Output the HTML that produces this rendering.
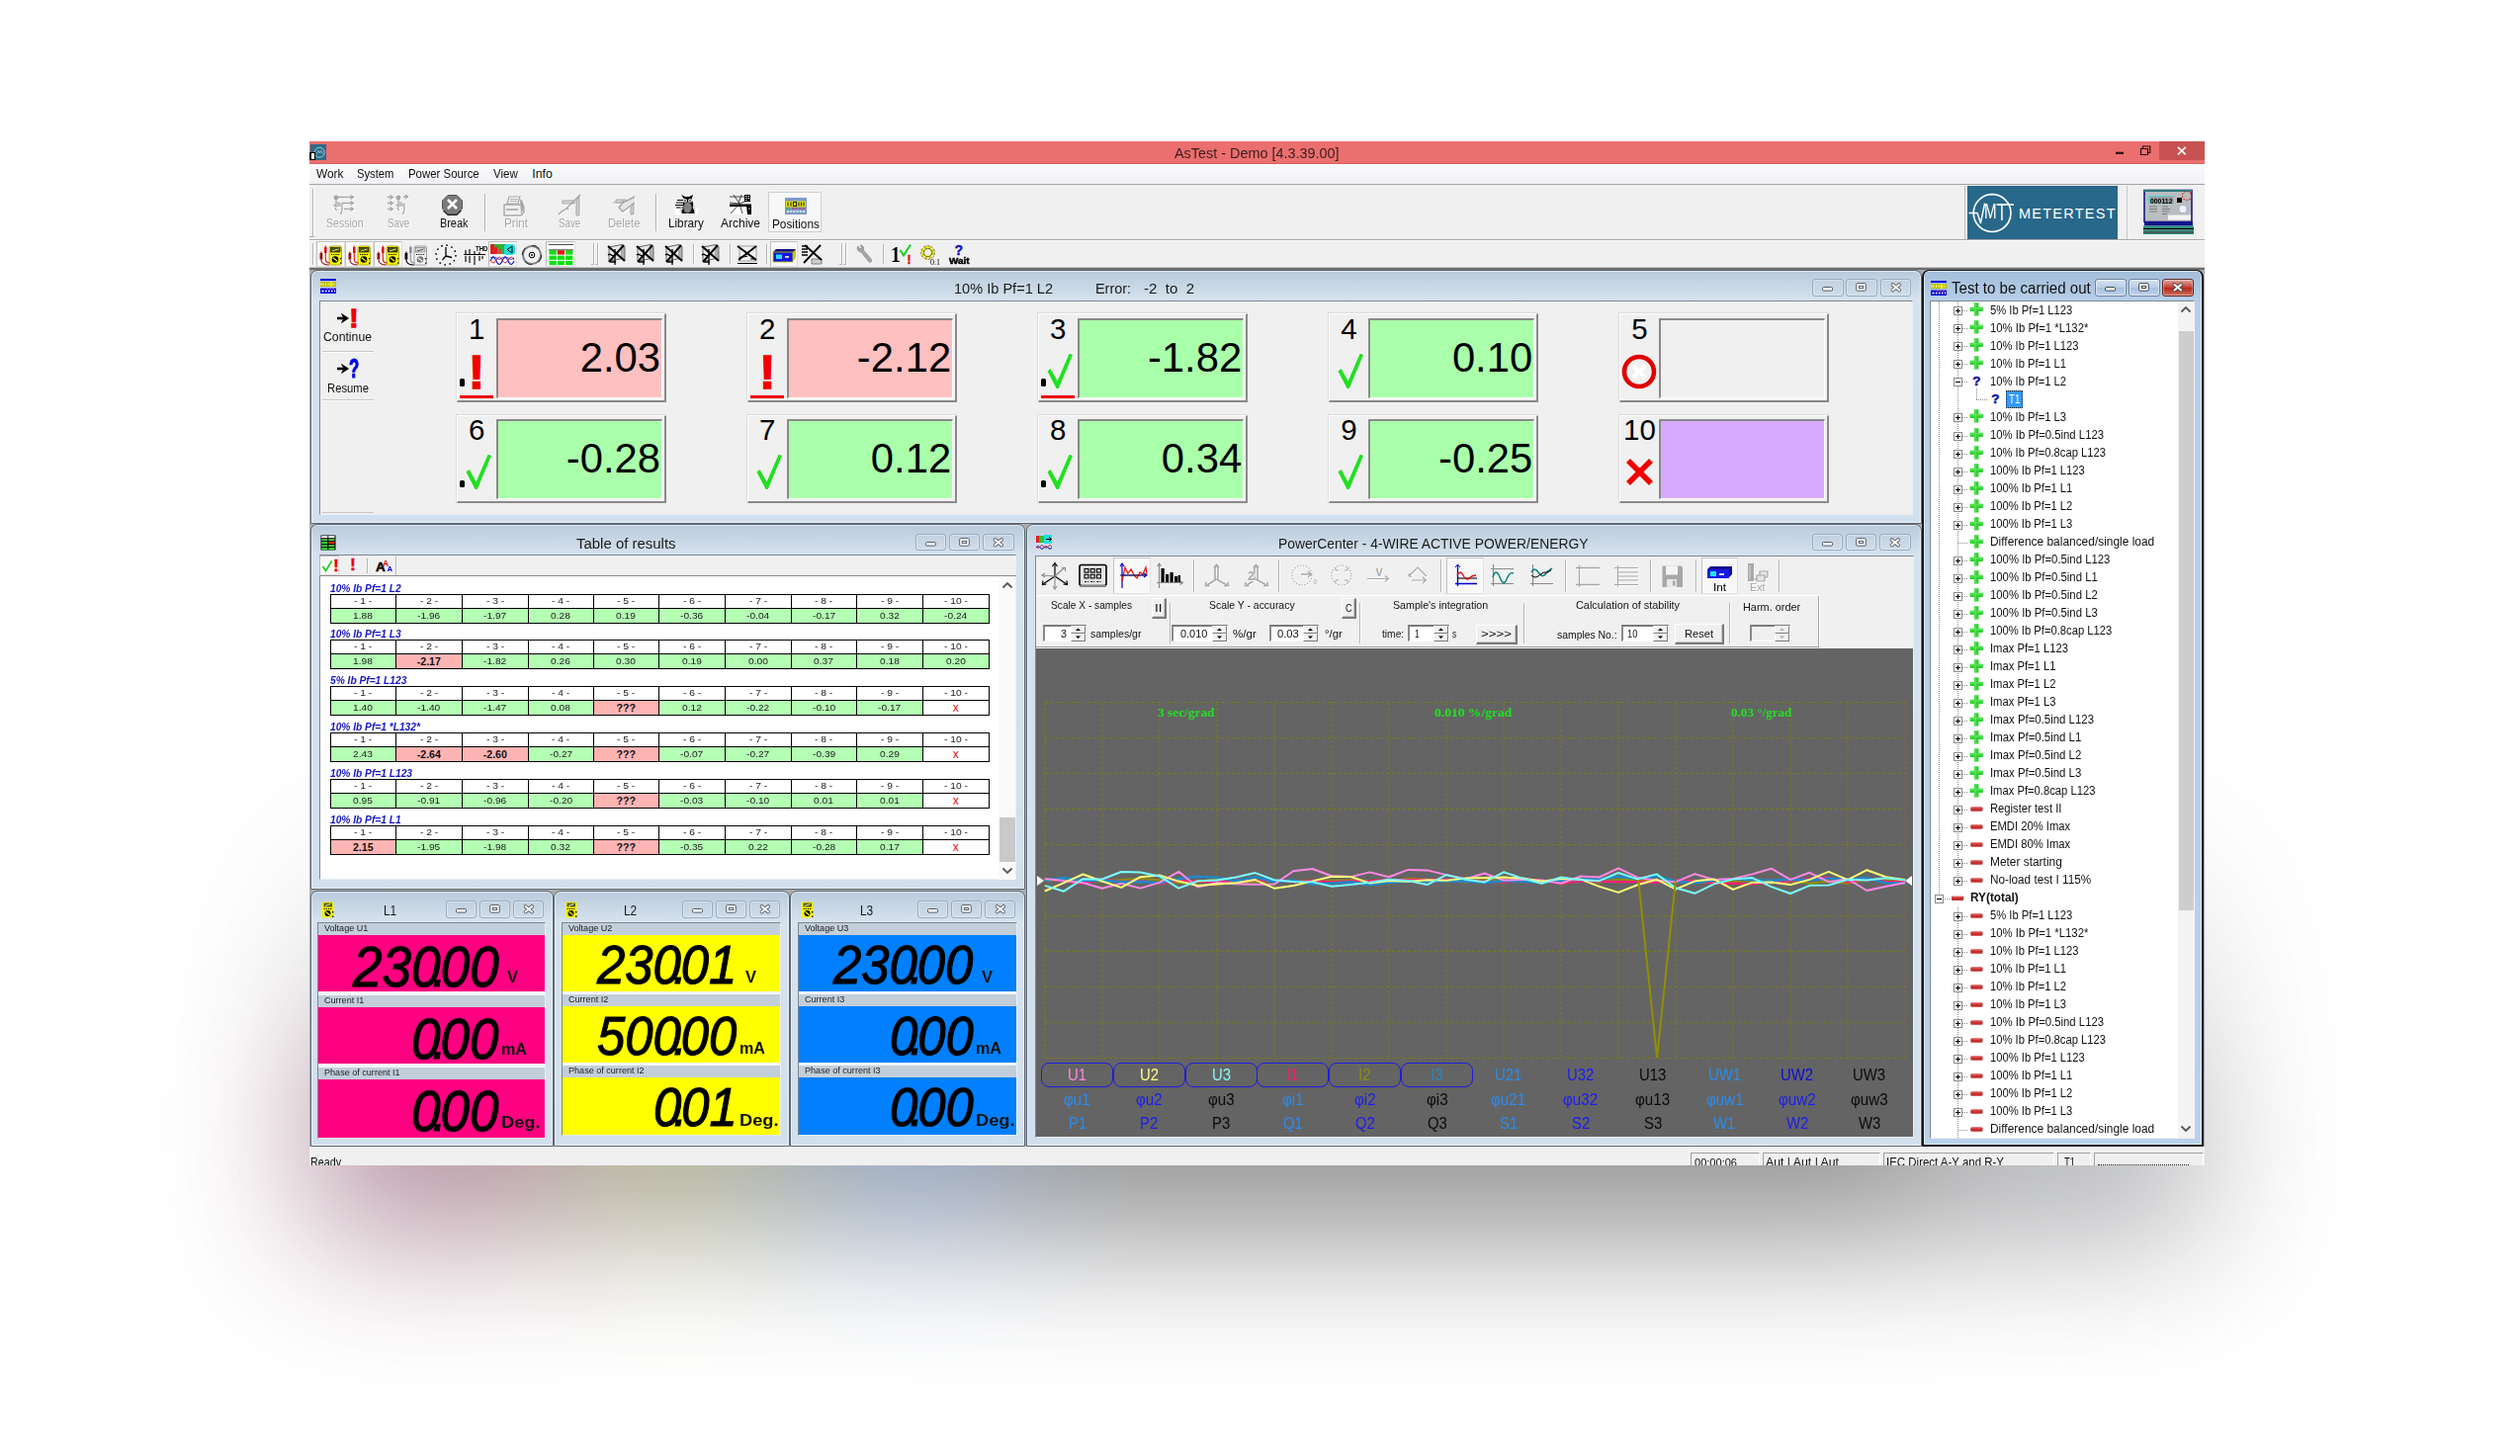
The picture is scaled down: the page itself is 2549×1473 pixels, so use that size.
<!DOCTYPE html><html><head><meta charset="utf-8"><title>AsTest - Demo</title><style>
html,body{margin:0;padding:0;background:#fff;}
body{width:2549px;height:1473px;overflow:hidden;position:relative;font-family:"Liberation Sans",sans-serif;}
.b{position:absolute;box-sizing:border-box;}
.t{position:absolute;white-space:pre;transform-origin:0 0;}
#app{position:absolute;left:0;top:0;width:2549px;height:1473px;clip-path:inset(143px 319px 294px 313px);}
svg{overflow:visible}
</style></head><body>
<div class="b" style="left:313px;top:219px;width:1917px;height:1035px;filter:blur(72px);opacity:.64;"><div class="b" style="left:0px;top:0px;width:1917px;height:1035px;background:linear-gradient(to bottom,rgba(140,142,146,0) 58%,rgba(140,142,146,.55) 78%,rgba(128,130,134,1) 94%)"></div><div class="b" style="left:0px;top:832px;width:247px;height:203px;background:#8e5c72"></div><div class="b" style="left:247px;top:832px;width:239px;height:203px;background:#86845e"></div><div class="b" style="left:486px;top:832px;width:238px;height:203px;background:#5a7296"></div><div class="b" style="left:724px;top:757px;width:906px;height:278px;background:#5a5a5a"></div></div>
<div id="app">
<div class="b" style="left:313.00px;top:143.00px;width:1917.00px;height:23.00px;background:#eb6f6f;"></div>
<div class="b" style="left:314.00px;top:146.00px;width:16.00px;height:15.70px;background:#2b6b88;"></div>
<svg class="b" style="left:315.50px;top:147.50px;" width="14" height="13" viewBox="0 0 14 13"><circle cx="7.2" cy="6.2" r="5" fill="none" stroke="#a9cbd8" stroke-width="1"/><path d="M4.300 7.500 L6 4.300 L7.400 7 L8.800 4.300 L10.200 7.500" fill="none" stroke="#a9cbd8" stroke-width="0.800"/></svg>
<div class="b" style="left:313.00px;top:154.20px;width:6.20px;height:8.00px;background:#000;"></div>
<div class="b" style="left:314.60px;top:155.40px;width:3.40px;height:5.60px;background:#fff;"></div>
<span class="t" style="left:1188.35px;top:148.33px;font-size:14.5px;line-height:14.5px;color:#3a1c1c;transform:scaleX(0.9932);">AsTest - Demo [4.3.39.00]</span>
<div class="b" style="left:313.00px;top:164.60px;width:1917.00px;height:1.20px;background:#d46464;"></div>
<div class="b" style="left:2184.00px;top:143.00px;width:45.50px;height:18.80px;background:#c85151;"></div>
<svg class="b" style="left:2135.00px;top:145.00px;" width="90" height="14" viewBox="0 0 90 14"><path d="M5 9.8 H13" stroke="#2a1010" stroke-width="2.2" fill="none"/><path d="M30.5 5.5 H37.500 V11.500 H30.500 Z M32.500 5.500 V3 H39.800 V9.500 H37.500" stroke="#2a1010" stroke-width="1.200" fill="none"/><path d="M68 3.800 L75.800 11.300 M75.800 3.800 L68 11.300" stroke="#fff" stroke-width="1.700" fill="none"/></svg>
<div class="b" style="left:313.00px;top:166.00px;width:1917.00px;height:21.00px;background:linear-gradient(#fbfbfd,#f1f1f5);"></div>
<div class="b" style="left:313.00px;top:186.00px;width:1917.00px;height:1.00px;background:#a2a2a2;"></div>
<span class="t" style="left:319.50px;top:169.79px;font-size:12.3px;line-height:12.3px;color:#111;transform:scaleX(0.9658);">Work</span>
<span class="t" style="left:361.20px;top:169.79px;font-size:12.3px;line-height:12.3px;color:#111;transform:scaleX(0.9144);">System</span>
<span class="t" style="left:413.30px;top:169.79px;font-size:12.3px;line-height:12.3px;color:#111;transform:scaleX(0.9281);">Power Source</span>
<span class="t" style="left:499.30px;top:169.79px;font-size:12.3px;line-height:12.3px;color:#111;transform:scaleX(0.9342);">View</span>
<span class="t" style="left:538.30px;top:169.79px;font-size:12.3px;line-height:12.3px;color:#111;">Info</span>
<div class="b" style="left:313.00px;top:187.00px;width:1917.00px;height:84.00px;background:#f0f0f0;"></div>
<div class="b" style="left:313.00px;top:241.50px;width:1917.00px;height:1.00px;background:#a8a8a8;"></div>
<div class="b" style="left:313.00px;top:242.50px;width:1917.00px;height:1.00px;background:#fdfdfd;"></div>
<div class="b" style="left:316.00px;top:191.00px;width:1.00px;height:48.00px;background:#b4b4b4;"></div>
<div class="b" style="left:317.00px;top:191.00px;width:1.00px;height:48.00px;background:#fff;"></div>
<div class="b" style="left:313.00px;top:239.00px;width:5.00px;height:1.00px;background:#b4b4b4;"></div>
<div class="b" style="left:316.00px;top:246.00px;width:1.00px;height:22.00px;background:#b4b4b4;"></div>
<div class="b" style="left:317.00px;top:246.00px;width:1.00px;height:22.00px;background:#fff;"></div>
<span class="t" style="left:329.60px;top:219.99px;font-size:12.3px;line-height:12.3px;color:#a9a9a9;transform:scaleX(0.8569);text-shadow:1px 1px 0 #fff;">Session</span>
<span class="t" style="left:391.90px;top:219.99px;font-size:12.3px;line-height:12.3px;color:#a9a9a9;transform:scaleX(0.7954);text-shadow:1px 1px 0 #fff;">Save</span>
<span class="t" style="left:444.50px;top:219.99px;font-size:12.3px;line-height:12.3px;color:#111;transform:scaleX(0.8838);">Break</span>
<span class="t" style="left:509.80px;top:219.99px;font-size:12.3px;line-height:12.3px;color:#a9a9a9;transform:scaleX(0.9489);text-shadow:1px 1px 0 #fff;">Print</span>
<span class="t" style="left:564.80px;top:219.99px;font-size:12.3px;line-height:12.3px;color:#a9a9a9;transform:scaleX(0.7954);text-shadow:1px 1px 0 #fff;">Save</span>
<span class="t" style="left:615.20px;top:219.99px;font-size:12.3px;line-height:12.3px;color:#a9a9a9;transform:scaleX(0.9112);text-shadow:1px 1px 0 #fff;">Delete</span>
<span class="t" style="left:676.20px;top:219.99px;font-size:12.3px;line-height:12.3px;color:#111;transform:scaleX(0.9522);">Library</span>
<span class="t" style="left:729.20px;top:219.99px;font-size:12.3px;line-height:12.3px;color:#111;transform:scaleX(0.9752);">Archive</span>
<div class="b" style="left:777.00px;top:193.50px;width:54.00px;height:41.50px;background:#f7f7f7;border:1px solid #d0d0d0;box-sizing:border-box;"></div>
<span class="t" style="left:781.00px;top:220.79px;font-size:12.3px;line-height:12.3px;color:#111;transform:scaleX(0.9597);">Positions</span>
<div class="b" style="left:489.50px;top:196.00px;width:1.00px;height:38.00px;background:#b0b0b0;"></div>
<div class="b" style="left:490.50px;top:196.00px;width:1.00px;height:38.00px;background:#fff;"></div>
<div class="b" style="left:662.50px;top:196.00px;width:1.00px;height:38.00px;background:#b0b0b0;"></div>
<div class="b" style="left:663.50px;top:196.00px;width:1.00px;height:38.00px;background:#fff;"></div>
<div class="b" style="left:313.00px;top:270.00px;width:1917.00px;height:891.00px;background:#ababab;"></div>
<div class="b" style="left:313.00px;top:270.00px;width:1917.00px;height:1.00px;background:#c4c4c4;"></div>
<div class="b" style="left:313.00px;top:271.00px;width:1917.00px;height:2.00px;background:#6c6c6c;"></div>
<div class="b" style="left:313.00px;top:1160.00px;width:1917.00px;height:19.50px;background:#f0f0f0;"></div>
<span class="t" style="left:314.00px;top:1169.89px;font-size:12.3px;line-height:12.3px;color:#111;transform:scaleX(0.8719);">Ready</span>
<div class="b" style="left:1710.00px;top:1166.00px;width:70.00px;height:14.00px;border:1px solid #a0a0a0;border-right-color:#fff;border-bottom:0;box-sizing:border-box;"></div>
<div class="b" style="left:1783.00px;top:1166.00px;width:119.00px;height:14.00px;border:1px solid #a0a0a0;border-right-color:#fff;border-bottom:0;box-sizing:border-box;"></div>
<div class="b" style="left:1905.00px;top:1166.00px;width:173.00px;height:14.00px;border:1px solid #a0a0a0;border-right-color:#fff;border-bottom:0;box-sizing:border-box;"></div>
<div class="b" style="left:2081.00px;top:1166.00px;width:34.00px;height:14.00px;border:1px solid #a0a0a0;border-right-color:#fff;border-bottom:0;box-sizing:border-box;"></div>
<div class="b" style="left:2118.00px;top:1166.00px;width:111.00px;height:14.00px;border:1px solid #a0a0a0;border-right-color:#fff;border-bottom:0;box-sizing:border-box;"></div>
<span class="t" style="left:1714.00px;top:1170.67px;font-size:11.5px;line-height:11.5px;color:#111;transform:scaleX(0.9606);">00:00:06</span>
<span class="t" style="left:1786.00px;top:1170.24px;font-size:12px;line-height:12px;color:#111;transform:scaleX(1.0238);">Aut | Aut | Aut</span>
<span class="t" style="left:1908.00px;top:1170.24px;font-size:12px;line-height:12px;color:#111;transform:scaleX(0.9559);">IEC Direct A-Y and R-Y</span>
<span class="t" style="left:2088.00px;top:1170.24px;font-size:12px;line-height:12px;color:#111;transform:scaleX(0.7855);">T1</span>
<div class="b" style="left:2122.00px;top:1177.60px;width:92.00px;height:1.00px;border-top:1px dotted #222;"></div>
<svg class="b" style="left:336.00px;top:196.80px;filter:drop-shadow(1px 1px 0 #fff);" width="24" height="22" viewBox="0 0 24 22"><g stroke="#a6a6a6" stroke-width="1.3" fill="none"><path d="M6 2.5h15M10 8.5h11M12 14.5h9"/><path d="M18.5 0.5l3 2l-3 2M18.5 6.5l3 2l-3 2M18.5 12.5l3 2l-3 2"/><circle cx="4" cy="3" r="1.8" fill="#a6a6a6"/><path d="M4 4v8l-2.5-2M6 7v5M8 8v4M10 9v4M10 13v3l-1.5 4M3 13l1.5 3"/></g></svg>
<svg class="b" style="left:391.00px;top:196.80px;filter:drop-shadow(1px 1px 0 #fff);" width="24" height="22" viewBox="0 0 24 22"><g stroke="#a6a6a6" stroke-width="1.3" fill="none"><path d="M1 2.5h4M1 8.5h4M1 14.5h4M17 2h4"/><path d="M3.5 0.5l3 2l-3 2M3.5 6.5l3 2l-3 2M3.5 12.5l3 2l-3 2M19 0l2.5 2l-2.5 2"/><circle cx="12" cy="3" r="1.8" fill="#a6a6a6"/><path d="M12 4v8l-2.5-2M14 7v5M16 8v4M18 9v4M18 13v3l-1.5 4M11 13l1.5 3"/></g></svg>
<svg class="b" style="left:447.30px;top:197.30px;" width="22" height="22" viewBox="0 0 22 22"><path d="M6 0.5h9l5.5 5.5v8l-5.5 5.5h-9l-5.5-5.5v-8z" fill="#7a7a7a" stroke="#555" stroke-width="1"/><path d="M1.5 16l4.5 4.5h9l4.5-4.5" fill="none" stroke="#222" stroke-width="1.2"/><path d="M6 5l9 9M15 5l-9 9" stroke="#fff" stroke-width="2.6"/></svg>
<svg class="b" style="left:509.00px;top:197.60px;filter:drop-shadow(1px 1px 0 #fff);" width="24" height="22" viewBox="0 0 24 22"><path d="M6 1h11l-2 7h-11z" fill="#f6f6f6" stroke="#a6a6a6" stroke-width="1.2"/><path d="M7 3.500h8M6.5 5.500h8" stroke="#a6a6a6" stroke-width="0.9"/><path d="M1 9h18l2 2v6l-3 3h-17z" fill="#f0f0f0" stroke="#a6a6a6" stroke-width="1.4"/><path d="M17 4c4 1 4 8 1 14" fill="#a6a6a6" stroke="#a6a6a6"/><path d="M3 14h12" stroke="#a6a6a6" stroke-width="1.6"/></svg>
<svg class="b" style="left:565.00px;top:196.80px;filter:drop-shadow(1px 1px 0 #fff);" width="24" height="22" viewBox="0 0 24 22"><path d="M4 6h12v3h-12z" fill="#d8d8d8" stroke="#a6a6a6" stroke-width="1"/><path d="M21 1v20h-3v-15z" fill="#cfcfcf" stroke="#a6a6a6" stroke-width="1"/><path d="M22 0L7 15l-4 2l-3 3M8 13l2 2" stroke="#a6a6a6" stroke-width="1.5" fill="none"/></svg>
<svg class="b" style="left:620.00px;top:198.00px;filter:drop-shadow(1px 1px 0 #fff);" width="24" height="20" viewBox="0 0 24 20"><path d="M3 4h10v3h-10z" fill="#d8d8d8" stroke="#a6a6a6" stroke-width="1"/><path d="M0 7h8l3-2M21 8v11h-3v-7z" fill="#cfcfcf" stroke="#a6a6a6" stroke-width="1"/><path d="M22 1L10 7l-4 5l4 4l12-9" stroke="#a6a6a6" stroke-width="1.4" fill="#e4e4e4"/></svg>
<svg class="b" style="left:683.00px;top:196.50px;" width="23" height="20" viewBox="0 0 23 20"><rect x="0" y="14" width="23" height="6" fill="#fff"/><path d="M1 8h7M0 10.500h8M1 13h7M2 5.500h6" stroke="#000" stroke-width="1.1"/><path d="M6 0l4 2h4l4-2l-1.5 5c2 3 2 6 1 8l2 3v3h-13v-3l2-3c-1-2-1-5 1-8z" fill="#000"/><ellipse cx="12.5" cy="13" rx="4.2" ry="5.5" fill="#808080"/><circle cx="10" cy="6" r="2.1" fill="#d8d8d8"/><circle cx="15" cy="6" r="2.1" fill="#d8d8d8"/><circle cx="10" cy="6" r="0.8" fill="#000"/><circle cx="15" cy="6" r="0.8" fill="#000"/><path d="M6.5 11l-1.5 6M18.5 11l1.5 6" stroke="#c8c8c8" stroke-width="1.2"/></svg>
<svg class="b" style="left:737.50px;top:197.00px;" width="23" height="20" viewBox="0 0 23 20"><rect x="0" y="11" width="17" height="9" fill="#fff"/><path d="M0 2h20M4 0l6 9M12 0l-3 9M0 8l10 1M10 9l-9 10M10 9l3 10M10 9l10-4" stroke="#333" stroke-width="0.9" fill="none"/><path d="M0 9.500h22v2.500h-22z" fill="#000"/><path d="M17 10h5v10h-4z" fill="#000"/><path d="M15 0h6v7h-6z" fill="#000"/><path d="M16 1.500h1.500M18.5 1.500h1.500M16 3.500h1.500M18.5 3.500h1.500M16 5.500h1.5" stroke="#fff" stroke-width="0.9"/><circle cx="20" cy="14" r="0.9" fill="#888"/></svg>
<svg class="b" style="left:794.00px;top:200.00px;" width="22" height="17" viewBox="0 0 22 17"><rect x="0" y="0" width="22" height="17" fill="#7d9ac8"/><rect x="1" y="3.5" width="20" height="6" fill="#e6e600"/><path d="M3 4.5v4M6 4.5v4M8.5 4.5h3v4h-3zM14 4.5v4M16.5 4.5v4M19 4.5v4" stroke="#222" stroke-width="1.1" fill="none"/><rect x="1" y="10" width="4" height="1.5" fill="#30c030"/><path d="M7 10.800h13" stroke="#c03060" stroke-width="1.2" stroke-dasharray="2.5 1"/><path d="M2 14h18" stroke="#d8e4f4" stroke-width="1.8" stroke-dasharray="2 1.2"/></svg>
<div class="b" style="left:320.00px;top:244.00px;width:29.00px;height:25.50px;background:#f9f9f9;border:1px solid #dedede;border-top-color:#bdbdbd;border-left-color:#bdbdbd;"></div>
<div class="b" style="left:349.00px;top:244.00px;width:29.00px;height:25.50px;background:#f9f9f9;border:1px solid #dedede;border-top-color:#bdbdbd;border-left-color:#bdbdbd;"></div>
<div class="b" style="left:378.00px;top:244.00px;width:29.00px;height:25.50px;background:#f9f9f9;border:1px solid #dedede;border-top-color:#bdbdbd;border-left-color:#bdbdbd;"></div>
<div class="b" style="left:493.50px;top:244.00px;width:29.50px;height:25.50px;background:#f9f9f9;border:1px solid #dedede;border-top-color:#bdbdbd;border-left-color:#bdbdbd;"></div>
<div class="b" style="left:552.00px;top:244.00px;width:30.00px;height:25.50px;background:#f9f9f9;border:1px solid #dedede;border-top-color:#bdbdbd;border-left-color:#bdbdbd;"></div>
<svg class="b" style="left:321.50px;top:247.50px;" width="26" height="21" viewBox="0 0 26 21"><rect x="11" y="1" width="12.5" height="19" rx="1.5" fill="#f4f400" stroke="#a0a000" stroke-width="0.8"/><rect x="12.5" y="2.5" width="9.5" height="4.5" fill="#505018" stroke="#000" stroke-width="0.6"/><path d="M14 6l6.5-2" stroke="#e8e8a0" stroke-width="0.9"/><path d="M13 9.500h9" stroke="#000" stroke-width="1.2" stroke-dasharray="1.2 1"/><circle cx="17" cy="14.5" r="3.3" fill="#000"/><path d="M14.8 12.800l4.4 3.4" stroke="#f4f400" stroke-width="1.3"/><rect x="22" y="13" width="1.3" height="1.3" fill="#000"/><rect x="22" y="17.5" width="1.3" height="1.3" fill="#000"/><rect x="6" y="2" width="2.6" height="6" fill="#e01010"/><rect x="6.8" y="0.5" width="1" height="2" fill="#e01010"/><rect x="1.5" y="8" width="2.8" height="6.5" fill="#8c1010"/><rect x="2.4" y="6.5" width="1" height="2" fill="#8c1010"/><path d="M7.3 8v6c0 3 2 4 4.5 4" fill="none" stroke="#e01010" stroke-width="1.1"/><path d="M2.9 14.500c0 4 3 5.5 8 5.5" fill="none" stroke="#8c1010" stroke-width="1.1"/></svg>
<svg class="b" style="left:350.50px;top:247.50px;" width="26" height="21" viewBox="0 0 26 21"><rect x="11" y="1" width="12.5" height="19" rx="1.5" fill="#f4f400" stroke="#a0a000" stroke-width="0.8"/><rect x="12.5" y="2.5" width="9.5" height="4.5" fill="#505018" stroke="#000" stroke-width="0.6"/><path d="M14 6l6.5-2" stroke="#e8e8a0" stroke-width="0.9"/><path d="M13 9.500h9" stroke="#000" stroke-width="1.2" stroke-dasharray="1.2 1"/><circle cx="17" cy="14.5" r="3.3" fill="#000"/><path d="M14.8 12.800l4.4 3.4" stroke="#f4f400" stroke-width="1.3"/><rect x="22" y="13" width="1.3" height="1.3" fill="#000"/><rect x="22" y="17.5" width="1.3" height="1.3" fill="#000"/><rect x="6" y="2" width="2.6" height="6" fill="#e01010"/><rect x="6.8" y="0.5" width="1" height="2" fill="#e01010"/><rect x="1.5" y="8" width="2.8" height="6.5" fill="#8c1010"/><rect x="2.4" y="6.5" width="1" height="2" fill="#8c1010"/><path d="M7.3 8v6c0 3 2 4 4.5 4" fill="none" stroke="#e01010" stroke-width="1.1"/><path d="M2.9 14.500c0 4 3 5.5 8 5.5" fill="none" stroke="#8c1010" stroke-width="1.1"/></svg>
<svg class="b" style="left:379.50px;top:247.50px;" width="26" height="21" viewBox="0 0 26 21"><rect x="11" y="1" width="12.5" height="19" rx="1.5" fill="#f4f400" stroke="#a0a000" stroke-width="0.8"/><rect x="12.5" y="2.5" width="9.5" height="4.5" fill="#505018" stroke="#000" stroke-width="0.6"/><path d="M14 6l6.5-2" stroke="#e8e8a0" stroke-width="0.9"/><path d="M13 9.500h9" stroke="#000" stroke-width="1.2" stroke-dasharray="1.2 1"/><circle cx="17" cy="14.5" r="3.3" fill="#000"/><path d="M14.8 12.800l4.4 3.4" stroke="#f4f400" stroke-width="1.3"/><rect x="22" y="13" width="1.3" height="1.3" fill="#000"/><rect x="22" y="17.5" width="1.3" height="1.3" fill="#000"/><rect x="6" y="2" width="2.6" height="6" fill="#e01010"/><rect x="6.8" y="0.5" width="1" height="2" fill="#e01010"/><rect x="1.5" y="8" width="2.8" height="6.5" fill="#8c1010"/><rect x="2.4" y="6.5" width="1" height="2" fill="#8c1010"/><path d="M7.3 8v6c0 3 2 4 4.5 4" fill="none" stroke="#e01010" stroke-width="1.1"/><path d="M2.9 14.500c0 4 3 5.5 8 5.5" fill="none" stroke="#8c1010" stroke-width="1.1"/></svg>
<svg class="b" style="left:408.00px;top:247.50px;" width="26" height="21" viewBox="0 0 26 21"><rect x="11" y="1" width="12.5" height="19" rx="1.5" fill="#f4f4f4" stroke="#888" stroke-width="0.8"/><rect x="12.5" y="2.5" width="9.5" height="4.5" fill="#d8d8d8" stroke="#666" stroke-width="0.6"/><path d="M14 6l6.5-2" stroke="#444" stroke-width="0.9"/><path d="M13 9.500h9" stroke="#000" stroke-width="1.2" stroke-dasharray="1.2 1"/><circle cx="17" cy="14.5" r="3.3" fill="#777"/><path d="M14.8 12.800l4.4 3.4" stroke="#f4f4f4" stroke-width="1.3"/><rect x="22" y="13" width="1.3" height="1.3" fill="#000"/><rect x="22" y="17.5" width="1.3" height="1.3" fill="#000"/><rect x="6" y="2" width="2.6" height="6" fill="#909090"/><rect x="6.8" y="0.5" width="1" height="2" fill="#909090"/><rect x="1.5" y="8" width="2.8" height="6.5" fill="#000"/><rect x="2.4" y="6.5" width="1" height="2" fill="#000"/><path d="M7.3 8v6c0 3 2 4 4.5 4" fill="none" stroke="#909090" stroke-width="1.1"/><path d="M2.9 14.500c0 4 3 5.5 8 5.5" fill="none" stroke="#000" stroke-width="1.1"/></svg>
<svg class="b" style="left:439.00px;top:246.00px;" width="24" height="24" viewBox="0 0 24 24"><circle cx="12" cy="12" r="10" fill="none" stroke="#000" stroke-width="1.5" stroke-dasharray="1.6 3.640"/><path d="M12 4v9l-3.5 4M12 13l6 1.5" stroke="#000" stroke-width="1.3" fill="none"/></svg>
<svg class="b" style="left:468.00px;top:247.80px;" width="26" height="21" viewBox="0 0 26 21"><path d="M1 9.500h22M3 5v4M7 4v5M12 6v3M17 7v2M3 11v6M7 11v7M12 11v9M17 11v5M20 11v3" stroke="#000" stroke-width="1.1" fill="none"/></svg>
<span class="t" style="left:480.50px;top:248.45px;font-size:7.5px;line-height:7.5px;color:#000;font-weight:bold;transform:scaleX(0.8109);">THD</span>
<svg class="b" style="left:496.00px;top:247.30px;" width="26" height="22" viewBox="0 0 26 22"><rect x="0" y="0" width="17" height="10" fill="#30b030"/><rect x="0" y="0" width="4" height="10" fill="#e02020"/><rect x="4" y="3" width="3" height="7" fill="#e02020"/><rect x="8" y="5" width="3" height="5" fill="#e04040"/><rect x="14" y="0" width="11" height="11" rx="3" fill="#20e0e0"/><path d="M22 2l-5 3.500l5 3.500z" fill="none" stroke="#000" stroke-width="1"/><path d="M0 17q3-7 6 0t6 0t6 0t6 0" stroke="#1010c0" stroke-width="1.1" fill="none"/><path d="M0 16q3 6 6 0t6 0t6 0t6 0" stroke="#e01010" stroke-width="0.9" fill="none"/><path d="M0 14q3-3 6 0t6 0t6 0t6 0" stroke="#1010c0" stroke-width="0.8" fill="none"/></svg>
<svg class="b" style="left:527.00px;top:247.00px;" width="22" height="22" viewBox="0 0 22 22"><circle cx="11" cy="11" r="9" fill="none" stroke="#808080" stroke-width="2"/><circle cx="11" cy="11" r="9.8" fill="none" stroke="#000" stroke-width="0.8" stroke-dasharray="8 7.4"/><circle cx="11" cy="11" r="2.8" fill="none" stroke="#000" stroke-width="1"/><circle cx="11" cy="11" r="0.9" fill="#000"/></svg>
<svg class="b" style="left:555.00px;top:246.80px;" width="25" height="22" viewBox="0 0 25 22"><rect x="0" y="0" width="25" height="22" fill="#fff"/><rect x="0.5" y="1.0" width="7.3" height="4.3" fill="#fff"/><rect x="8.8" y="1.0" width="7.3" height="4.3" fill="#fff"/><rect x="17.1" y="1.0" width="7.3" height="4.3" fill="#fff"/><rect x="0.5" y="6.3" width="7.3" height="4.3" fill="#10e010"/><rect x="8.8" y="6.3" width="7.3" height="4.3" fill="#f01010"/><rect x="17.1" y="6.3" width="7.3" height="4.3" fill="#10e010"/><rect x="0.5" y="11.6" width="7.3" height="4.3" fill="#10e010"/><rect x="8.8" y="11.6" width="7.3" height="4.3" fill="#10e010"/><rect x="17.1" y="11.6" width="7.3" height="4.3" fill="#10e010"/><rect x="0.5" y="16.9" width="7.3" height="4.3" fill="#10e010"/><rect x="8.8" y="16.9" width="7.3" height="4.3" fill="#10e010"/><rect x="17.1" y="16.9" width="7.3" height="4.3" fill="#10e010"/><path d="M0 0.500h25M0 5.800h25" stroke="#000" stroke-width="0.7"/></svg>
<div class="b" style="left:600.00px;top:246.00px;width:1.00px;height:22.00px;background:#b4b4b4;"></div>
<div class="b" style="left:601.00px;top:246.00px;width:1.00px;height:22.00px;background:#fff;"></div>
<div class="b" style="left:598.00px;top:267.00px;width:3.00px;height:1.00px;background:#b4b4b4;"></div>
<div class="b" style="left:603.50px;top:246.00px;width:1.00px;height:22.00px;background:#b4b4b4;"></div>
<div class="b" style="left:604.50px;top:246.00px;width:1.00px;height:22.00px;background:#fff;"></div>
<div class="b" style="left:601.50px;top:267.00px;width:3.00px;height:1.00px;background:#b4b4b4;"></div>
<svg class="b" style="left:613.00px;top:245.50px;" width="22" height="23" viewBox="0 0 22 23"><path d="M3 4l13-2.500v14l-13 3z" fill="#e8e8e8" stroke="#555" stroke-width="0.9"/><path d="M16 1.500l3 2v14l-3-2" fill="#b0b0b0" stroke="#555" stroke-width="0.8"/><path d="M2 3l17 15M18 2l-15 17" stroke="#000" stroke-width="2"/><path d="M9 6v16M2 12c3-3 4 3 7 0M4 19h6" stroke="#000" stroke-width="1.3" fill="none"/></svg>
<svg class="b" style="left:642.00px;top:245.50px;" width="22" height="23" viewBox="0 0 22 23"><path d="M3 4l13-2.500v14l-13 3z" fill="#e8e8e8" stroke="#555" stroke-width="0.9"/><path d="M16 1.500l3 2v14l-3-2" fill="#b0b0b0" stroke="#555" stroke-width="0.8"/><path d="M2 3l17 15M18 2l-15 17" stroke="#000" stroke-width="2"/><path d="M9 6v16M2 12c3-3 4 3 7 0M4 19h6" stroke="#000" stroke-width="1.3" fill="none"/></svg>
<svg class="b" style="left:671.00px;top:245.50px;" width="22" height="23" viewBox="0 0 22 23"><path d="M3 4l13-2.500v14l-13 3z" fill="#e8e8e8" stroke="#555" stroke-width="0.9"/><path d="M16 1.500l3 2v14l-3-2" fill="#b0b0b0" stroke="#555" stroke-width="0.8"/><path d="M2 3l17 15M18 2l-15 17" stroke="#000" stroke-width="2"/><path d="M9 6v16M2 12c3-3 4 3 7 0M4 19h6" stroke="#000" stroke-width="1.3" fill="none"/></svg>
<div class="b" style="left:700.50px;top:247.00px;width:1.00px;height:20.00px;background:#b4b4b4;"></div>
<div class="b" style="left:701.50px;top:247.00px;width:1.00px;height:20.00px;background:#fff;"></div>
<svg class="b" style="left:708.00px;top:245.50px;" width="22" height="23" viewBox="0 0 22 23"><path d="M3 4l13-2.500v14l-13 3z" fill="#e8e8e8" stroke="#555" stroke-width="0.9"/><path d="M16 1.500l3 2v14l-3-2" fill="#b0b0b0" stroke="#555" stroke-width="0.8"/><path d="M2 3l17 15M18 2l-15 17" stroke="#000" stroke-width="2"/><path d="M9 6v16M2 12c3-3 4 3 7 0M4 19h6" stroke="#000" stroke-width="1.3" fill="none"/></svg>
<div class="b" style="left:737.50px;top:247.00px;width:1.00px;height:20.00px;background:#b4b4b4;"></div>
<div class="b" style="left:738.50px;top:247.00px;width:1.00px;height:20.00px;background:#fff;"></div>
<svg class="b" style="left:745.00px;top:247.00px;" width="23" height="21" viewBox="0 0 23 21"><rect x="3" y="2" width="17" height="15" fill="#f4f4f4" stroke="#888" stroke-width="0.8"/><path d="M1 2l19 14M20 2l-18 14" stroke="#000" stroke-width="1.9"/><path d="M1 19.500h20M3 14c3-3 5 0 8-2M14 15l4 0l-2-2" stroke="#000" stroke-width="1.1" fill="none"/></svg>
<div class="b" style="left:775.00px;top:247.00px;width:1.00px;height:20.00px;background:#b4b4b4;"></div>
<div class="b" style="left:776.00px;top:247.00px;width:1.00px;height:20.00px;background:#fff;"></div>
<div class="b" style="left:779.00px;top:244.00px;width:28.00px;height:25.50px;background:#f9f9f9;border:1px solid #dedede;border-top-color:#bdbdbd;border-left-color:#bdbdbd;"></div>
<svg class="b" style="left:781.00px;top:251.00px;" width="25" height="15" viewBox="0 0 25 15"><path d="M1 4l3-3h20v9l-3 3z" fill="#c8c800"/><path d="M1 4l3-3h20l-3 3z" fill="#101080"/><rect x="1" y="4" width="20" height="10" fill="#1414e0" stroke="#c8c800" stroke-width="0.8"/><rect x="4" y="6.5" width="6" height="4.5" fill="#20e0f8"/><rect x="13" y="8" width="4" height="1.8" fill="#e0e0ff"/></svg>
<svg class="b" style="left:810.00px;top:246.00px;" width="24" height="22" viewBox="0 0 24 22"><path d="M1 3h6M1 6h6M1 9h6M1 12h6" stroke="#000" stroke-width="1.6"/><path d="M11 16h10v5h-10z" fill="#d0d0d0" stroke="#666" stroke-width="0.8"/><path d="M4 2l17 15M20 2l-17 18" stroke="#000" stroke-width="1.9"/></svg>
<div class="b" style="left:851.00px;top:246.00px;width:1.00px;height:22.00px;background:#b4b4b4;"></div>
<div class="b" style="left:852.00px;top:246.00px;width:1.00px;height:22.00px;background:#fff;"></div>
<div class="b" style="left:849.00px;top:267.00px;width:3.00px;height:1.00px;background:#b4b4b4;"></div>
<div class="b" style="left:854.50px;top:246.00px;width:1.00px;height:22.00px;background:#b4b4b4;"></div>
<div class="b" style="left:855.50px;top:246.00px;width:1.00px;height:22.00px;background:#fff;"></div>
<div class="b" style="left:852.50px;top:267.00px;width:3.00px;height:1.00px;background:#b4b4b4;"></div>
<svg class="b" style="left:866.00px;top:248.00px;filter:drop-shadow(1px 1px 0 #fff);" width="17" height="19" viewBox="0 0 17 19"><path d="M2 1c-2 3 0 6 3 6l8 10c1.5 1 3.5-.5 2.5-2.500l-8-9.500c1-3-1-5-3-5l1 3l-2 1z" fill="#a6a6a6" stroke="#8a8a8a" stroke-width="0.8"/></svg>
<div class="b" style="left:893.00px;top:247.00px;width:1.00px;height:20.00px;background:#b4b4b4;"></div>
<div class="b" style="left:894.00px;top:247.00px;width:1.00px;height:20.00px;background:#fff;"></div>
<span class="t" style="left:901.00px;top:245.74px;font-size:23px;line-height:23px;color:#000;font-family:'Liberation Serif',serif;font-weight:bold;transform:scaleX(0.8500);">1</span>
<svg class="b" style="left:910.00px;top:247.00px;" width="12" height="14" viewBox="0 0 12 14"><path d="M0.5 6l3.5 5.500L11 0.5" fill="none" stroke="#18d018" stroke-width="2"/></svg>
<span class="t" style="left:917.50px;top:257.34px;font-size:12px;line-height:12px;color:#e01010;font-weight:bold;-webkit-text-stroke:0.500px #e01010;">!</span>
<svg class="b" style="left:930.00px;top:246.50px;" width="17" height="17" viewBox="0 0 17 17"><circle cx="8.5" cy="8.5" r="5" fill="none" stroke="#d8d800" stroke-width="3.6" stroke-dasharray="2.6 1.330"/><circle cx="8.5" cy="8.5" r="4.2" fill="none" stroke="#707000" stroke-width="1"/><circle cx="8.5" cy="8.5" r="6.9" fill="none" stroke="#505000" stroke-width="0.7" stroke-dasharray="2.6 1.330"/></svg>
<span class="t" style="left:940.50px;top:261.72px;font-size:7.5px;line-height:7.5px;color:#000;font-family:'Liberation Serif',serif;transform:scaleX(1.0667);">0.1</span>
<span class="t" style="left:965.50px;top:246.15px;font-size:14px;line-height:14px;color:#1010c8;font-weight:bold;-webkit-text-stroke:0.400px #1010c8;">?</span>
<span class="t" style="left:959.50px;top:260.38px;font-size:9px;line-height:9px;color:#000;font-weight:bold;transform:scaleX(1.0984);-webkit-text-stroke:0.500px #000;">Wait</span>
<div class="b" style="left:1990.00px;top:188.00px;width:152.00px;height:54.00px;background:#28688a;"></div>
<svg class="b" style="left:1990.00px;top:188.00px;" width="152" height="54" viewBox="0 0 152 54"><circle cx="25.1" cy="27.6" r="18.9" fill="none" stroke="#fff" stroke-width="1.7"/><path d="M1.5 27.6h8.5l3.4 10l4.2-20" fill="none" stroke="#fff" stroke-width="1.5" stroke-linejoin="round"/><path d="M29.5 19h17.5" stroke="#fff" stroke-width="1.5"/></svg>
<span class="t" style="left:2007.20px;top:202.52px;font-size:22.3px;line-height:22.3px;color:#fff;transform:scaleX(0.6783);">M</span>
<span class="t" style="left:2019.60px;top:203.93px;font-size:23px;line-height:23px;color:#fff;transform:scaleX(0.6975);">T</span>
<span class="t" style="left:2042.00px;top:208.63px;font-size:14.5px;line-height:14.5px;color:#fff;letter-spacing:1.25px;">METERTEST</span>
<div class="b" style="left:1987.00px;top:188.00px;width:1.00px;height:54.00px;background:#c0c0c0;"></div>
<div class="b" style="left:2151.00px;top:188.00px;width:1.00px;height:54.00px;background:#c8c8c8;"></div>
<svg class="b" style="left:2167.50px;top:192.00px;" width="51" height="45" viewBox="0 0 51 45"><rect x="1" y="0.5" width="48" height="32" fill="#b9bdc1" stroke="#1a1a80" stroke-width="1.6"/><rect x="1" y="0" width="48" height="2" fill="#2c7c7c"/><rect x="5" y="6" width="26" height="8" fill="#5cd0d0"/><rect x="7" y="7" width="23" height="6.5" fill="#9a9a9a"/><rect x="34" y="8" width="5" height="5" fill="#000"/><circle cx="44" cy="6" r="4.5" fill="none" stroke="#e02020" stroke-width="1.2" stroke-dasharray="1.5 1.5"/><path d="M6 17h8M6 19.500h8M6 22h8M19 17h6M19 19.500h8M19 22h7M19 24.500h5" stroke="#7c7c7c" stroke-width="1"/><circle cx="40" cy="19.5" r="4" fill="#f0f0ff" stroke="#88a" stroke-width="0.8" stroke-dasharray="1.5 1"/><rect x="25" y="25.5" width="23" height="5" fill="#f4f4f4"/><rect x="1" y="32" width="49" height="4.5" fill="#14148c"/><rect x="0" y="36.5" width="51" height="2.5" fill="#2c8c7c"/><rect x="0" y="39" width="51" height="1.2" fill="#000"/><rect x="0" y="40.2" width="51" height="2.3" fill="#2c8c7c"/><rect x="0" y="42.5" width="51" height="1.2" fill="#000"/><rect x="0" y="43.7" width="51" height="1.3" fill="#2c8c7c"/></svg>
<span class="t" style="left:2175.00px;top:199.80px;font-size:7.8px;line-height:7.8px;color:#000;font-weight:bold;transform:scaleX(0.8790);">000112</span>
<div class="b" style="left:313.50px;top:272.80px;width:1630.00px;height:257.50px;background:linear-gradient(#b9cbdc 0px,#d6e2ee 30px,#d2dfec 100%);border:1px solid #5b6773;border-radius:7px 7px 1px 1px;box-shadow:inset 0 0 0 1px rgba(255,255,255,.55);"></div>
<div class="b" style="left:322.50px;top:303.50px;width:1612.00px;height:217.50px;background:#f0f0f0;border:1px solid #7d8790;border-right-color:#e8eef5;border-bottom-color:#e8eef5;"></div>
<div class="b" style="left:1833.30px;top:282.20px;width:31.50px;height:17.50px;background:linear-gradient(#c3d1e0,#cfdce9);border:1px solid #98acc2;border-radius:3px;box-shadow:inset 0 0 0 1px rgba(255,255,255,.35);"></div>
<div class="b" style="left:1867.40px;top:282.20px;width:31.50px;height:17.50px;background:linear-gradient(#c3d1e0,#cfdce9);border:1px solid #98acc2;border-radius:3px;box-shadow:inset 0 0 0 1px rgba(255,255,255,.35);"></div>
<div class="b" style="left:1901.50px;top:282.20px;width:31.50px;height:17.50px;background:linear-gradient(#c3d1e0,#cfdce9);border:1px solid #98acc2;border-radius:3px;box-shadow:inset 0 0 0 1px rgba(255,255,255,.35);"></div>
<svg class="b" style="left:1833.30px;top:282.20px;" width="31.5" height="17.5" viewBox="0 0 31.5 17.5"><rect x="10.5" y="8.5" width="10" height="3.6" rx="1" fill="#fff" stroke="#555d66" stroke-width="1"/></svg>
<svg class="b" style="left:1867.40px;top:282.20px;" width="31.5" height="17.5" viewBox="0 0 31.5 17.5"><rect x="10.7" y="4.6" width="9.6" height="7.6" rx="1" fill="#fff" stroke="#555d66" stroke-width="1"/><rect x="13.3" y="7.4" width="4.4" height="2.2" fill="#e4ecf4" stroke="#555d66" stroke-width="1"/></svg>
<svg class="b" style="left:1901.50px;top:282.20px;" width="31.5" height="17.5" viewBox="0 0 31.5 17.5"><path d="M12.5 6 L19.1 11.6 M19.1 6 L12.5 11.6" stroke="#555d66" stroke-width="3.7" stroke-linecap="round" fill="none"/><path d="M12.5 6 L19.1 11.6 M19.1 6 L12.5 11.6" stroke="#fff" stroke-width="2" stroke-linecap="round" fill="none"/></svg>
<svg class="b" style="left:324.00px;top:281.50px;" width="17" height="16" viewBox="0 0 17 16"><rect x="0" y="0" width="16" height="2" fill="#0000e0"/><rect x="0" y="3" width="16" height="5" fill="#b8b800"/><path d="M1 4v3M3 4v3M5.5 4v3M8 4v3M10 4h2v3h-2zM14 4v3" stroke="#ffff60" stroke-width="1" fill="none"/><rect x="0" y="9.5" width="16" height="5.5" fill="#1010d8"/><path d="M1.5 12.5h2M5 12.5h1.5M8 12.5h1.5M11 12.5h1.5M14 12.5h1" stroke="#fff" stroke-width="1.6"/><path d="M6 10.6h8" stroke="#c040c0" stroke-width="0.8" stroke-dasharray="2 1"/></svg>
<span class="t" style="left:965.00px;top:284.93px;font-size:14.5px;line-height:14.5px;color:#1a1a1a;transform:scaleX(1.0044);">10% Ib Pf=1 L2</span>
<span class="t" style="left:1108.00px;top:284.93px;font-size:14.5px;line-height:14.5px;color:#1a1a1a;transform:scaleX(0.9930);">Error:</span>
<span class="t" style="left:1157.00px;top:284.93px;font-size:14.5px;line-height:14.5px;color:#1a1a1a;transform:scaleX(1.0373);">-2  to  2</span>
<div class="b" style="left:323.50px;top:304.50px;width:56.00px;height:210.00px;background:#f0f0f0;"></div>
<div class="b" style="left:326.00px;top:354.50px;width:52.00px;height:1.00px;background:#c8c8c8;"></div>
<div class="b" style="left:326.00px;top:355.50px;width:52.00px;height:1.00px;background:#fff;"></div>
<div class="b" style="left:326.00px;top:404.00px;width:52.00px;height:1.00px;background:#c8c8c8;"></div>
<div class="b" style="left:326.00px;top:405.00px;width:52.00px;height:1.00px;background:#fff;"></div>
<div class="b" style="left:326.00px;top:517.50px;width:52.00px;height:1.00px;background:#c8c8c8;"></div>
<svg class="b" style="left:340.50px;top:316.50px;" width="12" height="10" viewBox="0 0 12 10"><path d="M0 5h7" stroke="#000" stroke-width="2.6"/><path d="M4.5 0.5 L11.5 5 L4.5 9.5 L7 5 Z" fill="#000" stroke="#000" stroke-width="0.8"/></svg>
<span class="t" style="left:353.40px;top:308.77px;font-size:26.5px;line-height:26.5px;color:#f00000;font-weight:bold;-webkit-text-stroke:1.4px #f00000;">!</span>
<span class="t" style="left:327.20px;top:334.89px;font-size:12.3px;line-height:12.3px;color:#111;transform:scaleX(0.9952);">Continue</span>
<svg class="b" style="left:340.50px;top:368.00px;" width="12" height="10" viewBox="0 0 12 10"><path d="M0 5h7" stroke="#000" stroke-width="2.6"/><path d="M4.5 0.5 L11.5 5 L4.5 9.5 L7 5 Z" fill="#000" stroke="#000" stroke-width="0.8"/></svg>
<span class="t" style="left:353.00px;top:360.14px;font-size:27px;line-height:27px;color:#0000e0;font-weight:bold;transform:scaleX(0.6200);-webkit-text-stroke:1.1px #0000e0;">?</span>
<span class="t" style="left:330.70px;top:386.59px;font-size:12.3px;line-height:12.3px;color:#111;transform:scaleX(0.9170);">Resume</span>
<div class="b" style="left:461.70px;top:317.20px;width:212.00px;height:89.50px;background:#f0f0f0;border:1px solid #fff;border-right:2px solid #8a8a8a;border-bottom:2px solid #8a8a8a;box-shadow:-1px -1px 0 #dcdcdc;"></div>
<div class="b" style="left:501.70px;top:321.70px;width:168.00px;height:81.00px;background:#ffc0c0;border:2px solid #8a8a8a;border-right:1px solid #fff;border-bottom:1px solid #fff;"></div>
<span class="t" style="left:474.00px;top:317.83px;font-size:29.5px;line-height:29.5px;color:#000;">1</span>
<span class="t" style="left:586.74px;top:340.72px;font-size:41.8px;line-height:41.8px;color:#000;">2.03</span>
<span class="t" style="left:474.11px;top:352.77px;font-size:48px;line-height:48px;color:#f00000;font-weight:bold;-webkit-text-stroke:1.6px #f00000;">!</span>
<div class="b" style="left:465.20px;top:383.20px;width:4.50px;height:7.50px;background:#000;border-radius:1.5px;"></div>
<div class="b" style="left:465.20px;top:399.50px;width:34.00px;height:3.40px;background:#f00000;"></div>
<div class="b" style="left:755.75px;top:317.20px;width:212.00px;height:89.50px;background:#f0f0f0;border:1px solid #fff;border-right:2px solid #8a8a8a;border-bottom:2px solid #8a8a8a;box-shadow:-1px -1px 0 #dcdcdc;"></div>
<div class="b" style="left:795.75px;top:321.70px;width:168.00px;height:81.00px;background:#ffc0c0;border:2px solid #8a8a8a;border-right:1px solid #fff;border-bottom:1px solid #fff;"></div>
<span class="t" style="left:768.05px;top:317.83px;font-size:29.5px;line-height:29.5px;color:#000;">2</span>
<span class="t" style="left:866.87px;top:340.72px;font-size:41.8px;line-height:41.8px;color:#000;">-2.12</span>
<span class="t" style="left:768.16px;top:352.77px;font-size:48px;line-height:48px;color:#f00000;font-weight:bold;-webkit-text-stroke:1.6px #f00000;">!</span>
<div class="b" style="left:759.25px;top:399.50px;width:34.00px;height:3.40px;background:#f00000;"></div>
<div class="b" style="left:1049.80px;top:317.20px;width:212.00px;height:89.50px;background:#f0f0f0;border:1px solid #fff;border-right:2px solid #8a8a8a;border-bottom:2px solid #8a8a8a;box-shadow:-1px -1px 0 #dcdcdc;"></div>
<div class="b" style="left:1089.80px;top:321.70px;width:168.00px;height:81.00px;background:#aaffaa;border:2px solid #8a8a8a;border-right:1px solid #fff;border-bottom:1px solid #fff;"></div>
<span class="t" style="left:1062.10px;top:317.83px;font-size:29.5px;line-height:29.5px;color:#000;">3</span>
<span class="t" style="left:1160.92px;top:340.72px;font-size:41.8px;line-height:41.8px;color:#000;">-1.82</span>
<svg class="b" style="left:1058.80px;top:357.00px;" width="27" height="37" viewBox="0 0 27 37"><path d="M0.5 18.5 L3.6 16 L10.6 28.5 L22.6 0.8 L26 2 L11.8 36 L9.6 36 Z" fill="#20e020"/></svg>
<div class="b" style="left:1053.30px;top:383.20px;width:4.50px;height:7.50px;background:#000;border-radius:1.5px;"></div>
<div class="b" style="left:1053.30px;top:399.50px;width:34.00px;height:3.40px;background:#f00000;"></div>
<div class="b" style="left:1343.85px;top:317.20px;width:212.00px;height:89.50px;background:#f0f0f0;border:1px solid #fff;border-right:2px solid #8a8a8a;border-bottom:2px solid #8a8a8a;box-shadow:-1px -1px 0 #dcdcdc;"></div>
<div class="b" style="left:1383.85px;top:321.70px;width:168.00px;height:81.00px;background:#aaffaa;border:2px solid #8a8a8a;border-right:1px solid #fff;border-bottom:1px solid #fff;"></div>
<span class="t" style="left:1356.15px;top:317.83px;font-size:29.5px;line-height:29.5px;color:#000;">4</span>
<span class="t" style="left:1468.89px;top:340.72px;font-size:41.8px;line-height:41.8px;color:#000;">0.10</span>
<svg class="b" style="left:1352.85px;top:357.00px;" width="27" height="37" viewBox="0 0 27 37"><path d="M0.5 18.5 L3.6 16 L10.6 28.5 L22.6 0.8 L26 2 L11.8 36 L9.6 36 Z" fill="#20e020"/></svg>
<div class="b" style="left:1637.90px;top:317.20px;width:212.00px;height:89.50px;background:#f0f0f0;border:1px solid #fff;border-right:2px solid #8a8a8a;border-bottom:2px solid #8a8a8a;box-shadow:-1px -1px 0 #dcdcdc;"></div>
<div class="b" style="left:1677.90px;top:321.70px;width:168.00px;height:81.00px;background:#f0f0f0;border:2px solid #8a8a8a;border-right:1px solid #fff;border-bottom:1px solid #fff;"></div>
<span class="t" style="left:1650.20px;top:317.83px;font-size:29.5px;line-height:29.5px;color:#000;">5</span>
<svg class="b" style="left:1640.40px;top:357.70px;" width="36" height="36" viewBox="0 0 36 36"><circle cx="18" cy="18" r="15" fill="none" stroke="#e00000" stroke-width="4.6"/><path d="M12 12l12 12M24 12l-12 12" stroke="#fff" stroke-width="4.4"/></svg>
<div class="b" style="left:461.70px;top:419.50px;width:212.00px;height:89.50px;background:#f0f0f0;border:1px solid #fff;border-right:2px solid #8a8a8a;border-bottom:2px solid #8a8a8a;box-shadow:-1px -1px 0 #dcdcdc;"></div>
<div class="b" style="left:501.70px;top:424.00px;width:168.00px;height:81.00px;background:#aaffaa;border:2px solid #8a8a8a;border-right:1px solid #fff;border-bottom:1px solid #fff;"></div>
<span class="t" style="left:474.00px;top:420.13px;font-size:29.5px;line-height:29.5px;color:#000;">6</span>
<span class="t" style="left:572.82px;top:443.02px;font-size:41.8px;line-height:41.8px;color:#000;">-0.28</span>
<svg class="b" style="left:470.70px;top:459.30px;" width="27" height="37" viewBox="0 0 27 37"><path d="M0.5 18.5 L3.6 16 L10.6 28.5 L22.6 0.8 L26 2 L11.8 36 L9.6 36 Z" fill="#20e020"/></svg>
<div class="b" style="left:465.20px;top:485.50px;width:4.50px;height:7.50px;background:#000;border-radius:1.5px;"></div>
<div class="b" style="left:755.75px;top:419.50px;width:212.00px;height:89.50px;background:#f0f0f0;border:1px solid #fff;border-right:2px solid #8a8a8a;border-bottom:2px solid #8a8a8a;box-shadow:-1px -1px 0 #dcdcdc;"></div>
<div class="b" style="left:795.75px;top:424.00px;width:168.00px;height:81.00px;background:#aaffaa;border:2px solid #8a8a8a;border-right:1px solid #fff;border-bottom:1px solid #fff;"></div>
<span class="t" style="left:768.05px;top:420.13px;font-size:29.5px;line-height:29.5px;color:#000;">7</span>
<span class="t" style="left:880.79px;top:443.02px;font-size:41.8px;line-height:41.8px;color:#000;">0.12</span>
<svg class="b" style="left:764.75px;top:459.30px;" width="27" height="37" viewBox="0 0 27 37"><path d="M0.5 18.5 L3.6 16 L10.6 28.5 L22.6 0.8 L26 2 L11.8 36 L9.6 36 Z" fill="#20e020"/></svg>
<div class="b" style="left:1049.80px;top:419.50px;width:212.00px;height:89.50px;background:#f0f0f0;border:1px solid #fff;border-right:2px solid #8a8a8a;border-bottom:2px solid #8a8a8a;box-shadow:-1px -1px 0 #dcdcdc;"></div>
<div class="b" style="left:1089.80px;top:424.00px;width:168.00px;height:81.00px;background:#aaffaa;border:2px solid #8a8a8a;border-right:1px solid #fff;border-bottom:1px solid #fff;"></div>
<span class="t" style="left:1062.10px;top:420.13px;font-size:29.5px;line-height:29.5px;color:#000;">8</span>
<span class="t" style="left:1174.84px;top:443.02px;font-size:41.8px;line-height:41.8px;color:#000;">0.34</span>
<svg class="b" style="left:1058.80px;top:459.30px;" width="27" height="37" viewBox="0 0 27 37"><path d="M0.5 18.5 L3.6 16 L10.6 28.5 L22.6 0.8 L26 2 L11.8 36 L9.6 36 Z" fill="#20e020"/></svg>
<div class="b" style="left:1053.30px;top:485.50px;width:4.50px;height:7.50px;background:#000;border-radius:1.5px;"></div>
<div class="b" style="left:1343.85px;top:419.50px;width:212.00px;height:89.50px;background:#f0f0f0;border:1px solid #fff;border-right:2px solid #8a8a8a;border-bottom:2px solid #8a8a8a;box-shadow:-1px -1px 0 #dcdcdc;"></div>
<div class="b" style="left:1383.85px;top:424.00px;width:168.00px;height:81.00px;background:#aaffaa;border:2px solid #8a8a8a;border-right:1px solid #fff;border-bottom:1px solid #fff;"></div>
<span class="t" style="left:1356.15px;top:420.13px;font-size:29.5px;line-height:29.5px;color:#000;">9</span>
<span class="t" style="left:1454.97px;top:443.02px;font-size:41.8px;line-height:41.8px;color:#000;">-0.25</span>
<svg class="b" style="left:1352.85px;top:459.30px;" width="27" height="37" viewBox="0 0 27 37"><path d="M0.5 18.5 L3.6 16 L10.6 28.5 L22.6 0.8 L26 2 L11.8 36 L9.6 36 Z" fill="#20e020"/></svg>
<div class="b" style="left:1637.90px;top:419.50px;width:212.00px;height:89.50px;background:#f0f0f0;border:1px solid #fff;border-right:2px solid #8a8a8a;border-bottom:2px solid #8a8a8a;box-shadow:-1px -1px 0 #dcdcdc;"></div>
<div class="b" style="left:1677.90px;top:424.00px;width:168.00px;height:81.00px;background:#d8aaff;border:2px solid #8a8a8a;border-right:1px solid #fff;border-bottom:1px solid #fff;"></div>
<span class="t" style="left:1641.99px;top:420.13px;font-size:29.5px;line-height:29.5px;color:#000;">10</span>
<svg class="b" style="left:1644.70px;top:463.80px;" width="27" height="27" viewBox="0 0 27 27"><path d="M2 2l23 23M25 2l-23 23" stroke="#f00000" stroke-width="5.6"/></svg>
<div class="b" style="left:313.50px;top:530.00px;width:723.50px;height:370.30px;background:linear-gradient(#b9cbdc 0px,#d6e2ee 30px,#d2dfec 100%);border:1px solid #5b6773;border-radius:7px 7px 1px 1px;box-shadow:inset 0 0 0 1px rgba(255,255,255,.55);"></div>
<div class="b" style="left:322.50px;top:561.00px;width:705.00px;height:329.00px;background:#fff;border:1px solid #7d8790;border-right-color:#e8eef5;border-bottom-color:#e8eef5;"></div>
<div class="b" style="left:925.80px;top:539.60px;width:31.50px;height:17.50px;background:linear-gradient(#c3d1e0,#cfdce9);border:1px solid #98acc2;border-radius:3px;box-shadow:inset 0 0 0 1px rgba(255,255,255,.35);"></div>
<div class="b" style="left:959.90px;top:539.60px;width:31.50px;height:17.50px;background:linear-gradient(#c3d1e0,#cfdce9);border:1px solid #98acc2;border-radius:3px;box-shadow:inset 0 0 0 1px rgba(255,255,255,.35);"></div>
<div class="b" style="left:994.00px;top:539.60px;width:31.50px;height:17.50px;background:linear-gradient(#c3d1e0,#cfdce9);border:1px solid #98acc2;border-radius:3px;box-shadow:inset 0 0 0 1px rgba(255,255,255,.35);"></div>
<svg class="b" style="left:925.80px;top:539.60px;" width="31.5" height="17.5" viewBox="0 0 31.5 17.5"><rect x="10.5" y="8.5" width="10" height="3.6" rx="1" fill="#fff" stroke="#555d66" stroke-width="1"/></svg>
<svg class="b" style="left:959.90px;top:539.60px;" width="31.5" height="17.5" viewBox="0 0 31.5 17.5"><rect x="10.7" y="4.6" width="9.6" height="7.6" rx="1" fill="#fff" stroke="#555d66" stroke-width="1"/><rect x="13.3" y="7.4" width="4.4" height="2.2" fill="#e4ecf4" stroke="#555d66" stroke-width="1"/></svg>
<svg class="b" style="left:994.00px;top:539.60px;" width="31.5" height="17.5" viewBox="0 0 31.5 17.5"><path d="M12.5 6 L19.1 11.6 M19.1 6 L12.5 11.6" stroke="#555d66" stroke-width="3.7" stroke-linecap="round" fill="none"/><path d="M12.5 6 L19.1 11.6 M19.1 6 L12.5 11.6" stroke="#fff" stroke-width="2" stroke-linecap="round" fill="none"/></svg>
<svg class="b" style="left:324.00px;top:541.00px;" width="16" height="16" viewBox="0 0 16 16"><rect x="0.5" y="0.5" width="15" height="15" fill="#000"/><rect x="1.2" y="1.2" width="6.2" height="2" fill="#fff"/><rect x="8.299999999999999" y="1.2" width="6.2" height="2" fill="#fff"/><rect x="1.2" y="4.2" width="6.2" height="2" fill="#50c050"/><rect x="8.299999999999999" y="4.2" width="6.2" height="2" fill="#50c050"/><rect x="1.2" y="7.2" width="6.2" height="2" fill="#30e030"/><rect x="8.299999999999999" y="7.2" width="6.2" height="2" fill="#e03000"/><rect x="1.2" y="10.2" width="6.2" height="2" fill="#50c050"/><rect x="8.299999999999999" y="10.2" width="6.2" height="2" fill="#50c050"/><rect x="1.2" y="13.2" width="6.2" height="2" fill="#30e030"/><rect x="8.299999999999999" y="13.2" width="6.2" height="2" fill="#30e030"/></svg>
<span class="t" style="left:583.30px;top:542.05px;font-size:15.3px;line-height:15.3px;color:#1a1a1a;transform:scaleX(0.9776);">Table of results</span>
<div class="b" style="left:323.50px;top:562.00px;width:703.00px;height:20.50px;background:#f0f0f0;"></div>
<div class="b" style="left:323.50px;top:582.00px;width:704.00px;height:1.00px;background:#8c8c8c;"></div>
<div class="b" style="left:323.00px;top:562.00px;width:20.00px;height:20.00px;background:#f8f8f8;border:1px solid #dcdcdc;border-left-color:#b8b8b8;border-top-color:#b8b8b8;"></div>
<svg class="b" style="left:326.00px;top:565.00px;" width="18" height="16" viewBox="0 0 18 16"><path d="M0.5 8 L3.5 12.5 L9.5 2.5" fill="none" stroke="#18d018" stroke-width="1.6"/></svg>
<span class="t" style="left:337.14px;top:564.76px;font-size:16px;line-height:16px;color:#e00000;font-weight:bold;-webkit-text-stroke:0.6px #e00000;">!</span>
<span class="t" style="left:354.34px;top:563.96px;font-size:16px;line-height:16px;color:#e00000;font-weight:bold;-webkit-text-stroke:0.6px #e00000;">!</span>
<div class="b" style="left:371.00px;top:565.00px;width:1.00px;height:15.00px;background:#b4b4b4;"></div>
<div class="b" style="left:372.00px;top:565.00px;width:1.00px;height:15.00px;background:#fff;"></div>
<span class="t" style="left:380.00px;top:566.57px;font-size:13.5px;line-height:13.5px;color:#000;font-weight:bold;-webkit-text-stroke:0.5px #000;">A</span>
<span class="t" style="left:387.00px;top:566.30px;font-size:8.5px;line-height:8.5px;color:#e00000;font-weight:bold;">A</span>
<span class="t" style="left:391.50px;top:571.65px;font-size:7.5px;line-height:7.5px;color:#0000d0;font-weight:bold;">A</span>
<div class="b" style="left:400.00px;top:562.50px;width:1.00px;height:19.00px;background:#b4b4b4;"></div>
<div class="b" style="left:401.00px;top:562.50px;width:1.00px;height:19.00px;background:#fff;"></div>
<div class="b" style="left:1010.00px;top:583.00px;width:17.00px;height:306.50px;background:#fafafa;"></div>
<div class="b" style="left:1010.50px;top:827.30px;width:16.00px;height:44.50px;background:#c9c9c9;"></div>
<svg class="b" style="left:1013.00px;top:588.00px;" width="12" height="8" viewBox="0 0 12 8"><path d="M1.5 6.5 L6 2 L10.5 6.5" fill="none" stroke="#555" stroke-width="1.8"/></svg>
<svg class="b" style="left:1013.00px;top:877.00px;" width="12" height="8" viewBox="0 0 12 8"><path d="M1.5 1.5 L6 6 L10.5 1.5" fill="none" stroke="#555" stroke-width="1.8"/></svg>
<span class="t" style="left:334.20px;top:589.73px;font-size:10.6px;line-height:10.6px;color:#1616c4;font-weight:bold;font-style:italic;transform:scaleX(0.9620);">10% Ib Pf=1 L2</span>
<div class="b" style="left:334.00px;top:601.00px;width:667.00px;height:30.00px;background:#000;"></div>
<div class="b" style="left:335.00px;top:602.00px;width:65.00px;height:13.00px;background:#fff;"></div>
<div class="b" style="left:335.00px;top:616.00px;width:65.00px;height:14.00px;background:#b4ffb4;"></div>
<span class="t" style="left:358.14px;top:602.99px;font-size:9.7px;line-height:9.7px;color:#1c1c1c;transform:scaleX(1.0619);">- 1 -</span>
<span class="t" style="left:357.37px;top:618.19px;font-size:9.7px;line-height:9.7px;color:#1c1c1c;transform:scaleX(1.0515);">1.88</span>
<div class="b" style="left:401.00px;top:602.00px;width:66.00px;height:13.00px;background:#fff;"></div>
<div class="b" style="left:401.00px;top:616.00px;width:66.00px;height:14.00px;background:#b4ffb4;"></div>
<span class="t" style="left:424.64px;top:602.99px;font-size:9.7px;line-height:9.7px;color:#1c1c1c;transform:scaleX(1.0619);">- 2 -</span>
<span class="t" style="left:422.18px;top:618.19px;font-size:9.7px;line-height:9.7px;color:#1c1c1c;transform:scaleX(1.0515);">-1.96</span>
<div class="b" style="left:468.00px;top:602.00px;width:66.00px;height:13.00px;background:#fff;"></div>
<div class="b" style="left:468.00px;top:616.00px;width:66.00px;height:14.00px;background:#b4ffb4;"></div>
<span class="t" style="left:491.64px;top:602.99px;font-size:9.7px;line-height:9.7px;color:#1c1c1c;transform:scaleX(1.0619);">- 3 -</span>
<span class="t" style="left:489.18px;top:618.19px;font-size:9.7px;line-height:9.7px;color:#1c1c1c;transform:scaleX(1.0515);">-1.97</span>
<div class="b" style="left:535.00px;top:602.00px;width:65.00px;height:13.00px;background:#fff;"></div>
<div class="b" style="left:535.00px;top:616.00px;width:65.00px;height:14.00px;background:#b4ffb4;"></div>
<span class="t" style="left:558.14px;top:602.99px;font-size:9.7px;line-height:9.7px;color:#1c1c1c;transform:scaleX(1.0619);">- 4 -</span>
<span class="t" style="left:557.37px;top:618.19px;font-size:9.7px;line-height:9.7px;color:#1c1c1c;transform:scaleX(1.0515);">0.28</span>
<div class="b" style="left:601.00px;top:602.00px;width:65.00px;height:13.00px;background:#fff;"></div>
<div class="b" style="left:601.00px;top:616.00px;width:65.00px;height:14.00px;background:#b4ffb4;"></div>
<span class="t" style="left:624.14px;top:602.99px;font-size:9.7px;line-height:9.7px;color:#1c1c1c;transform:scaleX(1.0619);">- 5 -</span>
<span class="t" style="left:623.37px;top:618.19px;font-size:9.7px;line-height:9.7px;color:#1c1c1c;transform:scaleX(1.0515);">0.19</span>
<div class="b" style="left:667.00px;top:602.00px;width:66.00px;height:13.00px;background:#fff;"></div>
<div class="b" style="left:667.00px;top:616.00px;width:66.00px;height:14.00px;background:#b4ffb4;"></div>
<span class="t" style="left:690.64px;top:602.99px;font-size:9.7px;line-height:9.7px;color:#1c1c1c;transform:scaleX(1.0619);">- 6 -</span>
<span class="t" style="left:688.18px;top:618.19px;font-size:9.7px;line-height:9.7px;color:#1c1c1c;transform:scaleX(1.0515);">-0.36</span>
<div class="b" style="left:734.00px;top:602.00px;width:66.00px;height:13.00px;background:#fff;"></div>
<div class="b" style="left:734.00px;top:616.00px;width:66.00px;height:14.00px;background:#b4ffb4;"></div>
<span class="t" style="left:757.64px;top:602.99px;font-size:9.7px;line-height:9.7px;color:#1c1c1c;transform:scaleX(1.0619);">- 7 -</span>
<span class="t" style="left:755.18px;top:618.19px;font-size:9.7px;line-height:9.7px;color:#1c1c1c;transform:scaleX(1.0515);">-0.04</span>
<div class="b" style="left:801.00px;top:602.00px;width:65.00px;height:13.00px;background:#fff;"></div>
<div class="b" style="left:801.00px;top:616.00px;width:65.00px;height:14.00px;background:#b4ffb4;"></div>
<span class="t" style="left:824.14px;top:602.99px;font-size:9.7px;line-height:9.7px;color:#1c1c1c;transform:scaleX(1.0619);">- 8 -</span>
<span class="t" style="left:821.68px;top:618.19px;font-size:9.7px;line-height:9.7px;color:#1c1c1c;transform:scaleX(1.0515);">-0.17</span>
<div class="b" style="left:867.00px;top:602.00px;width:66.00px;height:13.00px;background:#fff;"></div>
<div class="b" style="left:867.00px;top:616.00px;width:66.00px;height:14.00px;background:#b4ffb4;"></div>
<span class="t" style="left:890.64px;top:602.99px;font-size:9.7px;line-height:9.7px;color:#1c1c1c;transform:scaleX(1.0619);">- 9 -</span>
<span class="t" style="left:889.87px;top:618.19px;font-size:9.7px;line-height:9.7px;color:#1c1c1c;transform:scaleX(1.0515);">0.32</span>
<div class="b" style="left:934.00px;top:602.00px;width:66.00px;height:13.00px;background:#fff;"></div>
<div class="b" style="left:934.00px;top:616.00px;width:66.00px;height:14.00px;background:#b4ffb4;"></div>
<span class="t" style="left:954.78px;top:602.99px;font-size:9.7px;line-height:9.7px;color:#1c1c1c;transform:scaleX(1.0619);">- 10 -</span>
<span class="t" style="left:955.18px;top:618.19px;font-size:9.7px;line-height:9.7px;color:#1c1c1c;transform:scaleX(1.0515);">-0.24</span>
<span class="t" style="left:334.20px;top:635.73px;font-size:10.6px;line-height:10.6px;color:#1616c4;font-weight:bold;font-style:italic;transform:scaleX(0.9620);">10% Ib Pf=1 L3</span>
<div class="b" style="left:334.00px;top:647.00px;width:667.00px;height:30.00px;background:#000;"></div>
<div class="b" style="left:335.00px;top:648.00px;width:65.00px;height:13.00px;background:#fff;"></div>
<div class="b" style="left:335.00px;top:662.00px;width:65.00px;height:14.00px;background:#b4ffb4;"></div>
<span class="t" style="left:358.14px;top:648.99px;font-size:9.7px;line-height:9.7px;color:#1c1c1c;transform:scaleX(1.0619);">- 1 -</span>
<span class="t" style="left:357.37px;top:664.19px;font-size:9.7px;line-height:9.7px;color:#1c1c1c;transform:scaleX(1.0515);">1.98</span>
<div class="b" style="left:401.00px;top:648.00px;width:66.00px;height:13.00px;background:#fff;"></div>
<div class="b" style="left:401.00px;top:662.00px;width:66.00px;height:14.00px;background:#ffb4b4;"></div>
<span class="t" style="left:424.64px;top:648.99px;font-size:9.7px;line-height:9.7px;color:#1c1c1c;transform:scaleX(1.0619);">- 2 -</span>
<span class="t" style="left:421.72px;top:663.83px;font-size:10.6px;line-height:10.6px;color:#111;font-weight:bold;">-2.17</span>
<div class="b" style="left:468.00px;top:648.00px;width:66.00px;height:13.00px;background:#fff;"></div>
<div class="b" style="left:468.00px;top:662.00px;width:66.00px;height:14.00px;background:#b4ffb4;"></div>
<span class="t" style="left:491.64px;top:648.99px;font-size:9.7px;line-height:9.7px;color:#1c1c1c;transform:scaleX(1.0619);">- 3 -</span>
<span class="t" style="left:489.18px;top:664.19px;font-size:9.7px;line-height:9.7px;color:#1c1c1c;transform:scaleX(1.0515);">-1.82</span>
<div class="b" style="left:535.00px;top:648.00px;width:65.00px;height:13.00px;background:#fff;"></div>
<div class="b" style="left:535.00px;top:662.00px;width:65.00px;height:14.00px;background:#b4ffb4;"></div>
<span class="t" style="left:558.14px;top:648.99px;font-size:9.7px;line-height:9.7px;color:#1c1c1c;transform:scaleX(1.0619);">- 4 -</span>
<span class="t" style="left:557.37px;top:664.19px;font-size:9.7px;line-height:9.7px;color:#1c1c1c;transform:scaleX(1.0515);">0.26</span>
<div class="b" style="left:601.00px;top:648.00px;width:65.00px;height:13.00px;background:#fff;"></div>
<div class="b" style="left:601.00px;top:662.00px;width:65.00px;height:14.00px;background:#b4ffb4;"></div>
<span class="t" style="left:624.14px;top:648.99px;font-size:9.7px;line-height:9.7px;color:#1c1c1c;transform:scaleX(1.0619);">- 5 -</span>
<span class="t" style="left:623.37px;top:664.19px;font-size:9.7px;line-height:9.7px;color:#1c1c1c;transform:scaleX(1.0515);">0.30</span>
<div class="b" style="left:667.00px;top:648.00px;width:66.00px;height:13.00px;background:#fff;"></div>
<div class="b" style="left:667.00px;top:662.00px;width:66.00px;height:14.00px;background:#b4ffb4;"></div>
<span class="t" style="left:690.64px;top:648.99px;font-size:9.7px;line-height:9.7px;color:#1c1c1c;transform:scaleX(1.0619);">- 6 -</span>
<span class="t" style="left:689.87px;top:664.19px;font-size:9.7px;line-height:9.7px;color:#1c1c1c;transform:scaleX(1.0515);">0.19</span>
<div class="b" style="left:734.00px;top:648.00px;width:66.00px;height:13.00px;background:#fff;"></div>
<div class="b" style="left:734.00px;top:662.00px;width:66.00px;height:14.00px;background:#b4ffb4;"></div>
<span class="t" style="left:757.64px;top:648.99px;font-size:9.7px;line-height:9.7px;color:#1c1c1c;transform:scaleX(1.0619);">- 7 -</span>
<span class="t" style="left:756.87px;top:664.19px;font-size:9.7px;line-height:9.7px;color:#1c1c1c;transform:scaleX(1.0515);">0.00</span>
<div class="b" style="left:801.00px;top:648.00px;width:65.00px;height:13.00px;background:#fff;"></div>
<div class="b" style="left:801.00px;top:662.00px;width:65.00px;height:14.00px;background:#b4ffb4;"></div>
<span class="t" style="left:824.14px;top:648.99px;font-size:9.7px;line-height:9.7px;color:#1c1c1c;transform:scaleX(1.0619);">- 8 -</span>
<span class="t" style="left:823.37px;top:664.19px;font-size:9.7px;line-height:9.7px;color:#1c1c1c;transform:scaleX(1.0515);">0.37</span>
<div class="b" style="left:867.00px;top:648.00px;width:66.00px;height:13.00px;background:#fff;"></div>
<div class="b" style="left:867.00px;top:662.00px;width:66.00px;height:14.00px;background:#b4ffb4;"></div>
<span class="t" style="left:890.64px;top:648.99px;font-size:9.7px;line-height:9.7px;color:#1c1c1c;transform:scaleX(1.0619);">- 9 -</span>
<span class="t" style="left:889.87px;top:664.19px;font-size:9.7px;line-height:9.7px;color:#1c1c1c;transform:scaleX(1.0515);">0.18</span>
<div class="b" style="left:934.00px;top:648.00px;width:66.00px;height:13.00px;background:#fff;"></div>
<div class="b" style="left:934.00px;top:662.00px;width:66.00px;height:14.00px;background:#b4ffb4;"></div>
<span class="t" style="left:954.78px;top:648.99px;font-size:9.7px;line-height:9.7px;color:#1c1c1c;transform:scaleX(1.0619);">- 10 -</span>
<span class="t" style="left:956.87px;top:664.19px;font-size:9.7px;line-height:9.7px;color:#1c1c1c;transform:scaleX(1.0515);">0.20</span>
<span class="t" style="left:334.20px;top:682.73px;font-size:10.6px;line-height:10.6px;color:#1616c4;font-weight:bold;font-style:italic;transform:scaleX(0.9620);">5% Ib Pf=1 L123</span>
<div class="b" style="left:334.00px;top:694.00px;width:667.00px;height:30.00px;background:#000;"></div>
<div class="b" style="left:335.00px;top:695.00px;width:65.00px;height:13.00px;background:#fff;"></div>
<div class="b" style="left:335.00px;top:709.00px;width:65.00px;height:14.00px;background:#b4ffb4;"></div>
<span class="t" style="left:358.14px;top:695.99px;font-size:9.7px;line-height:9.7px;color:#1c1c1c;transform:scaleX(1.0619);">- 1 -</span>
<span class="t" style="left:357.37px;top:711.19px;font-size:9.7px;line-height:9.7px;color:#1c1c1c;transform:scaleX(1.0515);">1.40</span>
<div class="b" style="left:401.00px;top:695.00px;width:66.00px;height:13.00px;background:#fff;"></div>
<div class="b" style="left:401.00px;top:709.00px;width:66.00px;height:14.00px;background:#b4ffb4;"></div>
<span class="t" style="left:424.64px;top:695.99px;font-size:9.7px;line-height:9.7px;color:#1c1c1c;transform:scaleX(1.0619);">- 2 -</span>
<span class="t" style="left:422.18px;top:711.19px;font-size:9.7px;line-height:9.7px;color:#1c1c1c;transform:scaleX(1.0515);">-1.40</span>
<div class="b" style="left:468.00px;top:695.00px;width:66.00px;height:13.00px;background:#fff;"></div>
<div class="b" style="left:468.00px;top:709.00px;width:66.00px;height:14.00px;background:#b4ffb4;"></div>
<span class="t" style="left:491.64px;top:695.99px;font-size:9.7px;line-height:9.7px;color:#1c1c1c;transform:scaleX(1.0619);">- 3 -</span>
<span class="t" style="left:489.18px;top:711.19px;font-size:9.7px;line-height:9.7px;color:#1c1c1c;transform:scaleX(1.0515);">-1.47</span>
<div class="b" style="left:535.00px;top:695.00px;width:65.00px;height:13.00px;background:#fff;"></div>
<div class="b" style="left:535.00px;top:709.00px;width:65.00px;height:14.00px;background:#b4ffb4;"></div>
<span class="t" style="left:558.14px;top:695.99px;font-size:9.7px;line-height:9.7px;color:#1c1c1c;transform:scaleX(1.0619);">- 4 -</span>
<span class="t" style="left:557.37px;top:711.19px;font-size:9.7px;line-height:9.7px;color:#1c1c1c;transform:scaleX(1.0515);">0.08</span>
<div class="b" style="left:601.00px;top:695.00px;width:65.00px;height:13.00px;background:#fff;"></div>
<div class="b" style="left:601.00px;top:709.00px;width:65.00px;height:14.00px;background:#ffb4b4;"></div>
<span class="t" style="left:624.14px;top:695.99px;font-size:9.7px;line-height:9.7px;color:#1c1c1c;transform:scaleX(1.0619);">- 5 -</span>
<span class="t" style="left:623.59px;top:710.83px;font-size:10.6px;line-height:10.6px;color:#111;font-weight:bold;">???</span>
<div class="b" style="left:667.00px;top:695.00px;width:66.00px;height:13.00px;background:#fff;"></div>
<div class="b" style="left:667.00px;top:709.00px;width:66.00px;height:14.00px;background:#b4ffb4;"></div>
<span class="t" style="left:690.64px;top:695.99px;font-size:9.7px;line-height:9.7px;color:#1c1c1c;transform:scaleX(1.0619);">- 6 -</span>
<span class="t" style="left:689.87px;top:711.19px;font-size:9.7px;line-height:9.7px;color:#1c1c1c;transform:scaleX(1.0515);">0.12</span>
<div class="b" style="left:734.00px;top:695.00px;width:66.00px;height:13.00px;background:#fff;"></div>
<div class="b" style="left:734.00px;top:709.00px;width:66.00px;height:14.00px;background:#b4ffb4;"></div>
<span class="t" style="left:757.64px;top:695.99px;font-size:9.7px;line-height:9.7px;color:#1c1c1c;transform:scaleX(1.0619);">- 7 -</span>
<span class="t" style="left:755.18px;top:711.19px;font-size:9.7px;line-height:9.7px;color:#1c1c1c;transform:scaleX(1.0515);">-0.22</span>
<div class="b" style="left:801.00px;top:695.00px;width:65.00px;height:13.00px;background:#fff;"></div>
<div class="b" style="left:801.00px;top:709.00px;width:65.00px;height:14.00px;background:#b4ffb4;"></div>
<span class="t" style="left:824.14px;top:695.99px;font-size:9.7px;line-height:9.7px;color:#1c1c1c;transform:scaleX(1.0619);">- 8 -</span>
<span class="t" style="left:821.68px;top:711.19px;font-size:9.7px;line-height:9.7px;color:#1c1c1c;transform:scaleX(1.0515);">-0.10</span>
<div class="b" style="left:867.00px;top:695.00px;width:66.00px;height:13.00px;background:#fff;"></div>
<div class="b" style="left:867.00px;top:709.00px;width:66.00px;height:14.00px;background:#b4ffb4;"></div>
<span class="t" style="left:890.64px;top:695.99px;font-size:9.7px;line-height:9.7px;color:#1c1c1c;transform:scaleX(1.0619);">- 9 -</span>
<span class="t" style="left:888.18px;top:711.19px;font-size:9.7px;line-height:9.7px;color:#1c1c1c;transform:scaleX(1.0515);">-0.17</span>
<div class="b" style="left:934.00px;top:695.00px;width:66.00px;height:13.00px;background:#fff;"></div>
<div class="b" style="left:934.00px;top:709.00px;width:66.00px;height:14.00px;background:#fff;"></div>
<span class="t" style="left:954.78px;top:695.99px;font-size:9.7px;line-height:9.7px;color:#1c1c1c;transform:scaleX(1.0619);">- 10 -</span>
<span class="t" style="left:963.80px;top:710.04px;font-size:12px;line-height:12px;color:#e01010;">x</span>
<span class="t" style="left:334.20px;top:729.73px;font-size:10.6px;line-height:10.6px;color:#1616c4;font-weight:bold;font-style:italic;transform:scaleX(0.9620);">10% Ib Pf=1 *L132*</span>
<div class="b" style="left:334.00px;top:741.00px;width:667.00px;height:30.00px;background:#000;"></div>
<div class="b" style="left:335.00px;top:742.00px;width:65.00px;height:13.00px;background:#fff;"></div>
<div class="b" style="left:335.00px;top:756.00px;width:65.00px;height:14.00px;background:#b4ffb4;"></div>
<span class="t" style="left:358.14px;top:742.99px;font-size:9.7px;line-height:9.7px;color:#1c1c1c;transform:scaleX(1.0619);">- 1 -</span>
<span class="t" style="left:357.37px;top:758.19px;font-size:9.7px;line-height:9.7px;color:#1c1c1c;transform:scaleX(1.0515);">2.43</span>
<div class="b" style="left:401.00px;top:742.00px;width:66.00px;height:13.00px;background:#fff;"></div>
<div class="b" style="left:401.00px;top:756.00px;width:66.00px;height:14.00px;background:#ffb4b4;"></div>
<span class="t" style="left:424.64px;top:742.99px;font-size:9.7px;line-height:9.7px;color:#1c1c1c;transform:scaleX(1.0619);">- 2 -</span>
<span class="t" style="left:421.72px;top:757.83px;font-size:10.6px;line-height:10.6px;color:#111;font-weight:bold;">-2.64</span>
<div class="b" style="left:468.00px;top:742.00px;width:66.00px;height:13.00px;background:#fff;"></div>
<div class="b" style="left:468.00px;top:756.00px;width:66.00px;height:14.00px;background:#ffb4b4;"></div>
<span class="t" style="left:491.64px;top:742.99px;font-size:9.7px;line-height:9.7px;color:#1c1c1c;transform:scaleX(1.0619);">- 3 -</span>
<span class="t" style="left:488.72px;top:757.83px;font-size:10.6px;line-height:10.6px;color:#111;font-weight:bold;">-2.60</span>
<div class="b" style="left:535.00px;top:742.00px;width:65.00px;height:13.00px;background:#fff;"></div>
<div class="b" style="left:535.00px;top:756.00px;width:65.00px;height:14.00px;background:#b4ffb4;"></div>
<span class="t" style="left:558.14px;top:742.99px;font-size:9.7px;line-height:9.7px;color:#1c1c1c;transform:scaleX(1.0619);">- 4 -</span>
<span class="t" style="left:555.68px;top:758.19px;font-size:9.7px;line-height:9.7px;color:#1c1c1c;transform:scaleX(1.0515);">-0.27</span>
<div class="b" style="left:601.00px;top:742.00px;width:65.00px;height:13.00px;background:#fff;"></div>
<div class="b" style="left:601.00px;top:756.00px;width:65.00px;height:14.00px;background:#ffb4b4;"></div>
<span class="t" style="left:624.14px;top:742.99px;font-size:9.7px;line-height:9.7px;color:#1c1c1c;transform:scaleX(1.0619);">- 5 -</span>
<span class="t" style="left:623.59px;top:757.83px;font-size:10.6px;line-height:10.6px;color:#111;font-weight:bold;">???</span>
<div class="b" style="left:667.00px;top:742.00px;width:66.00px;height:13.00px;background:#fff;"></div>
<div class="b" style="left:667.00px;top:756.00px;width:66.00px;height:14.00px;background:#b4ffb4;"></div>
<span class="t" style="left:690.64px;top:742.99px;font-size:9.7px;line-height:9.7px;color:#1c1c1c;transform:scaleX(1.0619);">- 6 -</span>
<span class="t" style="left:688.18px;top:758.19px;font-size:9.7px;line-height:9.7px;color:#1c1c1c;transform:scaleX(1.0515);">-0.07</span>
<div class="b" style="left:734.00px;top:742.00px;width:66.00px;height:13.00px;background:#fff;"></div>
<div class="b" style="left:734.00px;top:756.00px;width:66.00px;height:14.00px;background:#b4ffb4;"></div>
<span class="t" style="left:757.64px;top:742.99px;font-size:9.7px;line-height:9.7px;color:#1c1c1c;transform:scaleX(1.0619);">- 7 -</span>
<span class="t" style="left:755.18px;top:758.19px;font-size:9.7px;line-height:9.7px;color:#1c1c1c;transform:scaleX(1.0515);">-0.27</span>
<div class="b" style="left:801.00px;top:742.00px;width:65.00px;height:13.00px;background:#fff;"></div>
<div class="b" style="left:801.00px;top:756.00px;width:65.00px;height:14.00px;background:#b4ffb4;"></div>
<span class="t" style="left:824.14px;top:742.99px;font-size:9.7px;line-height:9.7px;color:#1c1c1c;transform:scaleX(1.0619);">- 8 -</span>
<span class="t" style="left:821.68px;top:758.19px;font-size:9.7px;line-height:9.7px;color:#1c1c1c;transform:scaleX(1.0515);">-0.39</span>
<div class="b" style="left:867.00px;top:742.00px;width:66.00px;height:13.00px;background:#fff;"></div>
<div class="b" style="left:867.00px;top:756.00px;width:66.00px;height:14.00px;background:#b4ffb4;"></div>
<span class="t" style="left:890.64px;top:742.99px;font-size:9.7px;line-height:9.7px;color:#1c1c1c;transform:scaleX(1.0619);">- 9 -</span>
<span class="t" style="left:889.87px;top:758.19px;font-size:9.7px;line-height:9.7px;color:#1c1c1c;transform:scaleX(1.0515);">0.29</span>
<div class="b" style="left:934.00px;top:742.00px;width:66.00px;height:13.00px;background:#fff;"></div>
<div class="b" style="left:934.00px;top:756.00px;width:66.00px;height:14.00px;background:#fff;"></div>
<span class="t" style="left:954.78px;top:742.99px;font-size:9.7px;line-height:9.7px;color:#1c1c1c;transform:scaleX(1.0619);">- 10 -</span>
<span class="t" style="left:963.80px;top:757.04px;font-size:12px;line-height:12px;color:#e01010;">x</span>
<span class="t" style="left:334.20px;top:776.73px;font-size:10.6px;line-height:10.6px;color:#1616c4;font-weight:bold;font-style:italic;transform:scaleX(0.9620);">10% Ib Pf=1 L123</span>
<div class="b" style="left:334.00px;top:788.00px;width:667.00px;height:30.00px;background:#000;"></div>
<div class="b" style="left:335.00px;top:789.00px;width:65.00px;height:13.00px;background:#fff;"></div>
<div class="b" style="left:335.00px;top:803.00px;width:65.00px;height:14.00px;background:#b4ffb4;"></div>
<span class="t" style="left:358.14px;top:789.99px;font-size:9.7px;line-height:9.7px;color:#1c1c1c;transform:scaleX(1.0619);">- 1 -</span>
<span class="t" style="left:357.37px;top:805.19px;font-size:9.7px;line-height:9.7px;color:#1c1c1c;transform:scaleX(1.0515);">0.95</span>
<div class="b" style="left:401.00px;top:789.00px;width:66.00px;height:13.00px;background:#fff;"></div>
<div class="b" style="left:401.00px;top:803.00px;width:66.00px;height:14.00px;background:#b4ffb4;"></div>
<span class="t" style="left:424.64px;top:789.99px;font-size:9.7px;line-height:9.7px;color:#1c1c1c;transform:scaleX(1.0619);">- 2 -</span>
<span class="t" style="left:422.18px;top:805.19px;font-size:9.7px;line-height:9.7px;color:#1c1c1c;transform:scaleX(1.0515);">-0.91</span>
<div class="b" style="left:468.00px;top:789.00px;width:66.00px;height:13.00px;background:#fff;"></div>
<div class="b" style="left:468.00px;top:803.00px;width:66.00px;height:14.00px;background:#b4ffb4;"></div>
<span class="t" style="left:491.64px;top:789.99px;font-size:9.7px;line-height:9.7px;color:#1c1c1c;transform:scaleX(1.0619);">- 3 -</span>
<span class="t" style="left:489.18px;top:805.19px;font-size:9.7px;line-height:9.7px;color:#1c1c1c;transform:scaleX(1.0515);">-0.96</span>
<div class="b" style="left:535.00px;top:789.00px;width:65.00px;height:13.00px;background:#fff;"></div>
<div class="b" style="left:535.00px;top:803.00px;width:65.00px;height:14.00px;background:#b4ffb4;"></div>
<span class="t" style="left:558.14px;top:789.99px;font-size:9.7px;line-height:9.7px;color:#1c1c1c;transform:scaleX(1.0619);">- 4 -</span>
<span class="t" style="left:555.68px;top:805.19px;font-size:9.7px;line-height:9.7px;color:#1c1c1c;transform:scaleX(1.0515);">-0.20</span>
<div class="b" style="left:601.00px;top:789.00px;width:65.00px;height:13.00px;background:#fff;"></div>
<div class="b" style="left:601.00px;top:803.00px;width:65.00px;height:14.00px;background:#ffb4b4;"></div>
<span class="t" style="left:624.14px;top:789.99px;font-size:9.7px;line-height:9.7px;color:#1c1c1c;transform:scaleX(1.0619);">- 5 -</span>
<span class="t" style="left:623.59px;top:804.83px;font-size:10.6px;line-height:10.6px;color:#111;font-weight:bold;">???</span>
<div class="b" style="left:667.00px;top:789.00px;width:66.00px;height:13.00px;background:#fff;"></div>
<div class="b" style="left:667.00px;top:803.00px;width:66.00px;height:14.00px;background:#b4ffb4;"></div>
<span class="t" style="left:690.64px;top:789.99px;font-size:9.7px;line-height:9.7px;color:#1c1c1c;transform:scaleX(1.0619);">- 6 -</span>
<span class="t" style="left:688.18px;top:805.19px;font-size:9.7px;line-height:9.7px;color:#1c1c1c;transform:scaleX(1.0515);">-0.03</span>
<div class="b" style="left:734.00px;top:789.00px;width:66.00px;height:13.00px;background:#fff;"></div>
<div class="b" style="left:734.00px;top:803.00px;width:66.00px;height:14.00px;background:#b4ffb4;"></div>
<span class="t" style="left:757.64px;top:789.99px;font-size:9.7px;line-height:9.7px;color:#1c1c1c;transform:scaleX(1.0619);">- 7 -</span>
<span class="t" style="left:755.18px;top:805.19px;font-size:9.7px;line-height:9.7px;color:#1c1c1c;transform:scaleX(1.0515);">-0.10</span>
<div class="b" style="left:801.00px;top:789.00px;width:65.00px;height:13.00px;background:#fff;"></div>
<div class="b" style="left:801.00px;top:803.00px;width:65.00px;height:14.00px;background:#b4ffb4;"></div>
<span class="t" style="left:824.14px;top:789.99px;font-size:9.7px;line-height:9.7px;color:#1c1c1c;transform:scaleX(1.0619);">- 8 -</span>
<span class="t" style="left:823.37px;top:805.19px;font-size:9.7px;line-height:9.7px;color:#1c1c1c;transform:scaleX(1.0515);">0.01</span>
<div class="b" style="left:867.00px;top:789.00px;width:66.00px;height:13.00px;background:#fff;"></div>
<div class="b" style="left:867.00px;top:803.00px;width:66.00px;height:14.00px;background:#b4ffb4;"></div>
<span class="t" style="left:890.64px;top:789.99px;font-size:9.7px;line-height:9.7px;color:#1c1c1c;transform:scaleX(1.0619);">- 9 -</span>
<span class="t" style="left:889.87px;top:805.19px;font-size:9.7px;line-height:9.7px;color:#1c1c1c;transform:scaleX(1.0515);">0.01</span>
<div class="b" style="left:934.00px;top:789.00px;width:66.00px;height:13.00px;background:#fff;"></div>
<div class="b" style="left:934.00px;top:803.00px;width:66.00px;height:14.00px;background:#fff;"></div>
<span class="t" style="left:954.78px;top:789.99px;font-size:9.7px;line-height:9.7px;color:#1c1c1c;transform:scaleX(1.0619);">- 10 -</span>
<span class="t" style="left:963.80px;top:804.04px;font-size:12px;line-height:12px;color:#e01010;">x</span>
<span class="t" style="left:334.20px;top:823.73px;font-size:10.6px;line-height:10.6px;color:#1616c4;font-weight:bold;font-style:italic;transform:scaleX(0.9620);">10% Ib Pf=1 L1</span>
<div class="b" style="left:334.00px;top:835.00px;width:667.00px;height:30.00px;background:#000;"></div>
<div class="b" style="left:335.00px;top:836.00px;width:65.00px;height:13.00px;background:#fff;"></div>
<div class="b" style="left:335.00px;top:850.00px;width:65.00px;height:14.00px;background:#ffb4b4;"></div>
<span class="t" style="left:358.14px;top:836.99px;font-size:9.7px;line-height:9.7px;color:#1c1c1c;transform:scaleX(1.0619);">- 1 -</span>
<span class="t" style="left:356.98px;top:851.83px;font-size:10.6px;line-height:10.6px;color:#111;font-weight:bold;">2.15</span>
<div class="b" style="left:401.00px;top:836.00px;width:66.00px;height:13.00px;background:#fff;"></div>
<div class="b" style="left:401.00px;top:850.00px;width:66.00px;height:14.00px;background:#b4ffb4;"></div>
<span class="t" style="left:424.64px;top:836.99px;font-size:9.7px;line-height:9.7px;color:#1c1c1c;transform:scaleX(1.0619);">- 2 -</span>
<span class="t" style="left:422.18px;top:852.19px;font-size:9.7px;line-height:9.7px;color:#1c1c1c;transform:scaleX(1.0515);">-1.95</span>
<div class="b" style="left:468.00px;top:836.00px;width:66.00px;height:13.00px;background:#fff;"></div>
<div class="b" style="left:468.00px;top:850.00px;width:66.00px;height:14.00px;background:#b4ffb4;"></div>
<span class="t" style="left:491.64px;top:836.99px;font-size:9.7px;line-height:9.7px;color:#1c1c1c;transform:scaleX(1.0619);">- 3 -</span>
<span class="t" style="left:489.18px;top:852.19px;font-size:9.7px;line-height:9.7px;color:#1c1c1c;transform:scaleX(1.0515);">-1.98</span>
<div class="b" style="left:535.00px;top:836.00px;width:65.00px;height:13.00px;background:#fff;"></div>
<div class="b" style="left:535.00px;top:850.00px;width:65.00px;height:14.00px;background:#b4ffb4;"></div>
<span class="t" style="left:558.14px;top:836.99px;font-size:9.7px;line-height:9.7px;color:#1c1c1c;transform:scaleX(1.0619);">- 4 -</span>
<span class="t" style="left:557.37px;top:852.19px;font-size:9.7px;line-height:9.7px;color:#1c1c1c;transform:scaleX(1.0515);">0.32</span>
<div class="b" style="left:601.00px;top:836.00px;width:65.00px;height:13.00px;background:#fff;"></div>
<div class="b" style="left:601.00px;top:850.00px;width:65.00px;height:14.00px;background:#ffb4b4;"></div>
<span class="t" style="left:624.14px;top:836.99px;font-size:9.7px;line-height:9.7px;color:#1c1c1c;transform:scaleX(1.0619);">- 5 -</span>
<span class="t" style="left:623.59px;top:851.83px;font-size:10.6px;line-height:10.6px;color:#111;font-weight:bold;">???</span>
<div class="b" style="left:667.00px;top:836.00px;width:66.00px;height:13.00px;background:#fff;"></div>
<div class="b" style="left:667.00px;top:850.00px;width:66.00px;height:14.00px;background:#b4ffb4;"></div>
<span class="t" style="left:690.64px;top:836.99px;font-size:9.7px;line-height:9.7px;color:#1c1c1c;transform:scaleX(1.0619);">- 6 -</span>
<span class="t" style="left:688.18px;top:852.19px;font-size:9.7px;line-height:9.7px;color:#1c1c1c;transform:scaleX(1.0515);">-0.35</span>
<div class="b" style="left:734.00px;top:836.00px;width:66.00px;height:13.00px;background:#fff;"></div>
<div class="b" style="left:734.00px;top:850.00px;width:66.00px;height:14.00px;background:#b4ffb4;"></div>
<span class="t" style="left:757.64px;top:836.99px;font-size:9.7px;line-height:9.7px;color:#1c1c1c;transform:scaleX(1.0619);">- 7 -</span>
<span class="t" style="left:756.87px;top:852.19px;font-size:9.7px;line-height:9.7px;color:#1c1c1c;transform:scaleX(1.0515);">0.22</span>
<div class="b" style="left:801.00px;top:836.00px;width:65.00px;height:13.00px;background:#fff;"></div>
<div class="b" style="left:801.00px;top:850.00px;width:65.00px;height:14.00px;background:#b4ffb4;"></div>
<span class="t" style="left:824.14px;top:836.99px;font-size:9.7px;line-height:9.7px;color:#1c1c1c;transform:scaleX(1.0619);">- 8 -</span>
<span class="t" style="left:821.68px;top:852.19px;font-size:9.7px;line-height:9.7px;color:#1c1c1c;transform:scaleX(1.0515);">-0.28</span>
<div class="b" style="left:867.00px;top:836.00px;width:66.00px;height:13.00px;background:#fff;"></div>
<div class="b" style="left:867.00px;top:850.00px;width:66.00px;height:14.00px;background:#b4ffb4;"></div>
<span class="t" style="left:890.64px;top:836.99px;font-size:9.7px;line-height:9.7px;color:#1c1c1c;transform:scaleX(1.0619);">- 9 -</span>
<span class="t" style="left:889.87px;top:852.19px;font-size:9.7px;line-height:9.7px;color:#1c1c1c;transform:scaleX(1.0515);">0.17</span>
<div class="b" style="left:934.00px;top:836.00px;width:66.00px;height:13.00px;background:#fff;"></div>
<div class="b" style="left:934.00px;top:850.00px;width:66.00px;height:14.00px;background:#fff;"></div>
<span class="t" style="left:954.78px;top:836.99px;font-size:9.7px;line-height:9.7px;color:#1c1c1c;transform:scaleX(1.0619);">- 10 -</span>
<span class="t" style="left:963.80px;top:851.04px;font-size:12px;line-height:12px;color:#e01010;">x</span>
<div class="b" style="left:313.50px;top:901.30px;width:246.50px;height:258.70px;background:linear-gradient(#b9cbdc 0px,#d6e2ee 30px,#d2dfec 100%);border:1px solid #5b6773;border-radius:7px 7px 1px 1px;box-shadow:inset 0 0 0 1px rgba(255,255,255,.55);"></div>
<div class="b" style="left:321.00px;top:932.50px;width:230.50px;height:219.00px;background:#ff0080;border:1px solid #7d8790;border-right-color:#e8eef5;border-bottom-color:#e8eef5;"></div>
<div class="b" style="left:450.70px;top:911.20px;width:31.50px;height:17.50px;background:linear-gradient(#c3d1e0,#cfdce9);border:1px solid #98acc2;border-radius:3px;box-shadow:inset 0 0 0 1px rgba(255,255,255,.35);"></div>
<div class="b" style="left:484.80px;top:911.20px;width:31.50px;height:17.50px;background:linear-gradient(#c3d1e0,#cfdce9);border:1px solid #98acc2;border-radius:3px;box-shadow:inset 0 0 0 1px rgba(255,255,255,.35);"></div>
<div class="b" style="left:518.90px;top:911.20px;width:31.50px;height:17.50px;background:linear-gradient(#c3d1e0,#cfdce9);border:1px solid #98acc2;border-radius:3px;box-shadow:inset 0 0 0 1px rgba(255,255,255,.35);"></div>
<svg class="b" style="left:450.70px;top:911.20px;" width="31.5" height="17.5" viewBox="0 0 31.5 17.5"><rect x="10.5" y="8.5" width="10" height="3.6" rx="1" fill="#fff" stroke="#555d66" stroke-width="1"/></svg>
<svg class="b" style="left:484.80px;top:911.20px;" width="31.5" height="17.5" viewBox="0 0 31.5 17.5"><rect x="10.7" y="4.6" width="9.6" height="7.6" rx="1" fill="#fff" stroke="#555d66" stroke-width="1"/><rect x="13.3" y="7.4" width="4.4" height="2.2" fill="#e4ecf4" stroke="#555d66" stroke-width="1"/></svg>
<svg class="b" style="left:518.90px;top:911.20px;" width="31.5" height="17.5" viewBox="0 0 31.5 17.5"><path d="M12.5 6 L19.1 11.6 M19.1 6 L12.5 11.6" stroke="#555d66" stroke-width="3.7" stroke-linecap="round" fill="none"/><path d="M12.5 6 L19.1 11.6 M19.1 6 L12.5 11.6" stroke="#fff" stroke-width="2" stroke-linecap="round" fill="none"/></svg>
<svg class="b" style="left:325.80px;top:911.50px;" width="13" height="17" viewBox="0 0 13 17"><rect x="0" y="0.5" width="11.5" height="16" rx="1" fill="#f4f400"/><rect x="1.5" y="1.5" width="8.5" height="4" fill="#5a5a20"/><path d="M3 4.5 L8.5 2.5" stroke="#e8e8a0" stroke-width="1"/><path d="M1.5 7.5h8" stroke="#000" stroke-width="1.2" stroke-dasharray="1.2 1"/><circle cx="5.5" cy="12" r="3" fill="#000"/><path d="M3.5 10.3 L7.5 13.7" stroke="#f4f400" stroke-width="1.2"/><rect x="10" y="10" width="1.4" height="1.4" fill="#000"/><rect x="10" y="14.5" width="1.4" height="1.4" fill="#000"/></svg>
<span class="t" style="left:387.70px;top:912.68px;font-size:15.5px;line-height:15.5px;color:#1a1a1a;transform:scaleX(0.7656);">L1</span>
<div class="b" style="left:322.00px;top:933.50px;width:228.50px;height:12.50px;background:#c3cedb;"></div>
<div class="b" style="left:322.00px;top:946.00px;width:228.50px;height:57.30px;background:#ff0080;"></div>
<span class="t" style="left:328.00px;top:934.53px;font-size:9.3px;line-height:9.3px;color:#1c1c1c;transform:scaleX(0.9750);">Voltage U1</span>
<span class="t" style="left:357.20px;top:949.83px;font-size:57.26px;line-height:57.26px;font-style:italic;color:#000;-webkit-text-stroke:1.1px #000;transform:scaleX(0.9278);letter-spacing:0;">230<span style="display:inline-block;width:0;position:relative;left:-9.2px">.</span>00</span>
<span class="t" style="left:512.80px;top:980.31px;font-size:17px;line-height:17px;color:#111;font-weight:bold;transform:scaleX(0.9701);">V</span>
<div class="b" style="left:322.00px;top:1003.30px;width:228.50px;height:3.50px;background:#f4f6fa;"></div>
<div class="b" style="left:322.00px;top:1006.80px;width:228.50px;height:11.90px;background:#c3cedb;"></div>
<div class="b" style="left:322.00px;top:1018.70px;width:228.50px;height:57.30px;background:#ff0080;"></div>
<span class="t" style="left:328.00px;top:1007.83px;font-size:9.3px;line-height:9.3px;color:#1c1c1c;transform:scaleX(0.9750);">Current I1</span>
<span class="t" style="left:416.30px;top:1022.53px;font-size:57.26px;line-height:57.26px;font-style:italic;color:#000;-webkit-text-stroke:1.1px #000;transform:scaleX(0.9278);letter-spacing:0;">0<span style="display:inline-block;width:0;position:relative;left:-9.2px">.</span>00</span>
<span class="t" style="left:507.20px;top:1053.01px;font-size:17px;line-height:17px;color:#111;font-weight:bold;transform:scaleX(0.9492);">mA</span>
<div class="b" style="left:322.00px;top:1076.00px;width:228.50px;height:3.80px;background:#f4f6fa;"></div>
<div class="b" style="left:322.00px;top:1079.80px;width:228.50px;height:11.90px;background:#c3cedb;"></div>
<div class="b" style="left:322.00px;top:1091.70px;width:228.50px;height:58.30px;background:#ff0080;"></div>
<span class="t" style="left:328.00px;top:1080.83px;font-size:9.3px;line-height:9.3px;color:#1c1c1c;transform:scaleX(0.9750);">Phase of current I1</span>
<span class="t" style="left:416.30px;top:1095.53px;font-size:57.26px;line-height:57.26px;font-style:italic;color:#000;-webkit-text-stroke:1.1px #000;transform:scaleX(0.9278);letter-spacing:0;">0<span style="display:inline-block;width:0;position:relative;left:-9.2px">.</span>00</span>
<span class="t" style="left:507.40px;top:1127.01px;font-size:17px;line-height:17px;color:#111;font-weight:bold;transform:scaleX(1.0722);">Deg.</span>
<div class="b" style="left:560.00px;top:901.30px;width:239.00px;height:258.70px;background:linear-gradient(#b9cbdc 0px,#d6e2ee 30px,#d2dfec 100%);border:1px solid #5b6773;border-radius:7px 7px 1px 1px;box-shadow:inset 0 0 0 1px rgba(255,255,255,.55);"></div>
<div class="b" style="left:568.30px;top:932.50px;width:221.90px;height:216.60px;background:#ffff00;border:1px solid #7d8790;border-right-color:#e8eef5;border-bottom-color:#e8eef5;"></div>
<div class="b" style="left:689.70px;top:911.20px;width:31.50px;height:17.50px;background:linear-gradient(#c3d1e0,#cfdce9);border:1px solid #98acc2;border-radius:3px;box-shadow:inset 0 0 0 1px rgba(255,255,255,.35);"></div>
<div class="b" style="left:723.80px;top:911.20px;width:31.50px;height:17.50px;background:linear-gradient(#c3d1e0,#cfdce9);border:1px solid #98acc2;border-radius:3px;box-shadow:inset 0 0 0 1px rgba(255,255,255,.35);"></div>
<div class="b" style="left:757.90px;top:911.20px;width:31.50px;height:17.50px;background:linear-gradient(#c3d1e0,#cfdce9);border:1px solid #98acc2;border-radius:3px;box-shadow:inset 0 0 0 1px rgba(255,255,255,.35);"></div>
<svg class="b" style="left:689.70px;top:911.20px;" width="31.5" height="17.5" viewBox="0 0 31.5 17.5"><rect x="10.5" y="8.5" width="10" height="3.6" rx="1" fill="#fff" stroke="#555d66" stroke-width="1"/></svg>
<svg class="b" style="left:723.80px;top:911.20px;" width="31.5" height="17.5" viewBox="0 0 31.5 17.5"><rect x="10.7" y="4.6" width="9.6" height="7.6" rx="1" fill="#fff" stroke="#555d66" stroke-width="1"/><rect x="13.3" y="7.4" width="4.4" height="2.2" fill="#e4ecf4" stroke="#555d66" stroke-width="1"/></svg>
<svg class="b" style="left:757.90px;top:911.20px;" width="31.5" height="17.5" viewBox="0 0 31.5 17.5"><path d="M12.5 6 L19.1 11.6 M19.1 6 L12.5 11.6" stroke="#555d66" stroke-width="3.7" stroke-linecap="round" fill="none"/><path d="M12.5 6 L19.1 11.6 M19.1 6 L12.5 11.6" stroke="#fff" stroke-width="2" stroke-linecap="round" fill="none"/></svg>
<svg class="b" style="left:572.30px;top:911.50px;" width="13" height="17" viewBox="0 0 13 17"><rect x="0" y="0.5" width="11.5" height="16" rx="1" fill="#f4f400"/><rect x="1.5" y="1.5" width="8.5" height="4" fill="#5a5a20"/><path d="M3 4.5 L8.5 2.5" stroke="#e8e8a0" stroke-width="1"/><path d="M1.5 7.5h8" stroke="#000" stroke-width="1.2" stroke-dasharray="1.2 1"/><circle cx="5.5" cy="12" r="3" fill="#000"/><path d="M3.5 10.3 L7.5 13.7" stroke="#f4f400" stroke-width="1.2"/><rect x="10" y="10" width="1.4" height="1.4" fill="#000"/><rect x="10" y="14.5" width="1.4" height="1.4" fill="#000"/></svg>
<span class="t" style="left:630.90px;top:912.68px;font-size:15.5px;line-height:15.5px;color:#1a1a1a;transform:scaleX(0.7656);">L2</span>
<div class="b" style="left:569.30px;top:933.50px;width:219.90px;height:12.50px;background:#c3cedb;"></div>
<div class="b" style="left:569.30px;top:946.00px;width:219.90px;height:56.60px;background:#ffff00;"></div>
<span class="t" style="left:575.30px;top:934.53px;font-size:9.3px;line-height:9.3px;color:#1c1c1c;transform:scaleX(0.9750);">Voltage U2</span>
<span class="t" style="left:603.96px;top:949.06px;font-size:55.45px;line-height:55.45px;font-style:italic;color:#000;-webkit-text-stroke:1.1px #000;transform:scaleX(0.9167);letter-spacing:0;">230<span style="display:inline-block;width:0;position:relative;left:-8.9px">.</span>01</span>
<span class="t" style="left:753.90px;top:979.81px;font-size:17px;line-height:17px;color:#111;font-weight:bold;transform:scaleX(0.9701);">V</span>
<div class="b" style="left:569.30px;top:1002.60px;width:219.90px;height:3.40px;background:#f4f6fa;"></div>
<div class="b" style="left:569.30px;top:1006.00px;width:219.90px;height:12.00px;background:#c3cedb;"></div>
<div class="b" style="left:569.30px;top:1018.00px;width:219.90px;height:56.60px;background:#ffff00;"></div>
<span class="t" style="left:575.30px;top:1007.03px;font-size:9.3px;line-height:9.3px;color:#1c1c1c;transform:scaleX(0.9750);">Current I2</span>
<span class="t" style="left:603.96px;top:1021.06px;font-size:55.45px;line-height:55.45px;font-style:italic;color:#000;-webkit-text-stroke:1.1px #000;transform:scaleX(0.9167);letter-spacing:0;">500<span style="display:inline-block;width:0;position:relative;left:-8.9px">.</span>00</span>
<span class="t" style="left:747.80px;top:1051.81px;font-size:17px;line-height:17px;color:#111;font-weight:bold;transform:scaleX(0.9492);">mA</span>
<div class="b" style="left:569.30px;top:1074.60px;width:219.90px;height:3.40px;background:#f4f6fa;"></div>
<div class="b" style="left:569.30px;top:1078.00px;width:219.90px;height:12.00px;background:#c3cedb;"></div>
<div class="b" style="left:569.30px;top:1090.00px;width:219.90px;height:57.60px;background:#ffff00;"></div>
<span class="t" style="left:575.30px;top:1079.03px;font-size:9.3px;line-height:9.3px;color:#1c1c1c;transform:scaleX(0.9750);">Phase of current I2</span>
<span class="t" style="left:660.50px;top:1093.06px;font-size:55.45px;line-height:55.45px;font-style:italic;color:#000;-webkit-text-stroke:1.1px #000;transform:scaleX(0.9167);letter-spacing:0;">0<span style="display:inline-block;width:0;position:relative;left:-8.9px">.</span>01</span>
<span class="t" style="left:748.40px;top:1124.81px;font-size:17px;line-height:17px;color:#111;font-weight:bold;transform:scaleX(1.0722);">Deg.</span>
<div class="b" style="left:799.00px;top:901.30px;width:238.00px;height:258.70px;background:linear-gradient(#b9cbdc 0px,#d6e2ee 30px,#d2dfec 100%);border:1px solid #5b6773;border-radius:7px 7px 1px 1px;box-shadow:inset 0 0 0 1px rgba(255,255,255,.55);"></div>
<div class="b" style="left:807.30px;top:932.50px;width:222.10px;height:216.60px;background:#0080ff;border:1px solid #7d8790;border-right-color:#e8eef5;border-bottom-color:#e8eef5;"></div>
<div class="b" style="left:927.70px;top:911.20px;width:31.50px;height:17.50px;background:linear-gradient(#c3d1e0,#cfdce9);border:1px solid #98acc2;border-radius:3px;box-shadow:inset 0 0 0 1px rgba(255,255,255,.35);"></div>
<div class="b" style="left:961.80px;top:911.20px;width:31.50px;height:17.50px;background:linear-gradient(#c3d1e0,#cfdce9);border:1px solid #98acc2;border-radius:3px;box-shadow:inset 0 0 0 1px rgba(255,255,255,.35);"></div>
<div class="b" style="left:995.90px;top:911.20px;width:31.50px;height:17.50px;background:linear-gradient(#c3d1e0,#cfdce9);border:1px solid #98acc2;border-radius:3px;box-shadow:inset 0 0 0 1px rgba(255,255,255,.35);"></div>
<svg class="b" style="left:927.70px;top:911.20px;" width="31.5" height="17.5" viewBox="0 0 31.5 17.5"><rect x="10.5" y="8.5" width="10" height="3.6" rx="1" fill="#fff" stroke="#555d66" stroke-width="1"/></svg>
<svg class="b" style="left:961.80px;top:911.20px;" width="31.5" height="17.5" viewBox="0 0 31.5 17.5"><rect x="10.7" y="4.6" width="9.6" height="7.6" rx="1" fill="#fff" stroke="#555d66" stroke-width="1"/><rect x="13.3" y="7.4" width="4.4" height="2.2" fill="#e4ecf4" stroke="#555d66" stroke-width="1"/></svg>
<svg class="b" style="left:995.90px;top:911.20px;" width="31.5" height="17.5" viewBox="0 0 31.5 17.5"><path d="M12.5 6 L19.1 11.6 M19.1 6 L12.5 11.6" stroke="#555d66" stroke-width="3.7" stroke-linecap="round" fill="none"/><path d="M12.5 6 L19.1 11.6 M19.1 6 L12.5 11.6" stroke="#fff" stroke-width="2" stroke-linecap="round" fill="none"/></svg>
<svg class="b" style="left:811.30px;top:911.50px;" width="13" height="17" viewBox="0 0 13 17"><rect x="0" y="0.5" width="11.5" height="16" rx="1" fill="#f4f400"/><rect x="1.5" y="1.5" width="8.5" height="4" fill="#5a5a20"/><path d="M3 4.5 L8.5 2.5" stroke="#e8e8a0" stroke-width="1"/><path d="M1.5 7.5h8" stroke="#000" stroke-width="1.2" stroke-dasharray="1.2 1"/><circle cx="5.5" cy="12" r="3" fill="#000"/><path d="M3.5 10.3 L7.5 13.7" stroke="#f4f400" stroke-width="1.2"/><rect x="10" y="10" width="1.4" height="1.4" fill="#000"/><rect x="10" y="14.5" width="1.4" height="1.4" fill="#000"/></svg>
<span class="t" style="left:869.90px;top:912.68px;font-size:15.5px;line-height:15.5px;color:#1a1a1a;transform:scaleX(0.7656);">L3</span>
<div class="b" style="left:808.30px;top:933.50px;width:220.10px;height:12.50px;background:#c3cedb;"></div>
<div class="b" style="left:808.30px;top:946.00px;width:220.10px;height:56.60px;background:#0080ff;"></div>
<span class="t" style="left:814.30px;top:934.53px;font-size:9.3px;line-height:9.3px;color:#1c1c1c;transform:scaleX(0.9750);">Voltage U3</span>
<span class="t" style="left:842.96px;top:949.06px;font-size:55.45px;line-height:55.45px;font-style:italic;color:#000;-webkit-text-stroke:1.1px #000;transform:scaleX(0.9167);letter-spacing:0;">230<span style="display:inline-block;width:0;position:relative;left:-8.9px">.</span>00</span>
<span class="t" style="left:993.20px;top:979.81px;font-size:17px;line-height:17px;color:#111;font-weight:bold;transform:scaleX(0.9701);">V</span>
<div class="b" style="left:808.30px;top:1002.60px;width:220.10px;height:3.40px;background:#f4f6fa;"></div>
<div class="b" style="left:808.30px;top:1006.00px;width:220.10px;height:12.00px;background:#c3cedb;"></div>
<div class="b" style="left:808.30px;top:1018.00px;width:220.10px;height:56.60px;background:#0080ff;"></div>
<span class="t" style="left:814.30px;top:1007.03px;font-size:9.3px;line-height:9.3px;color:#1c1c1c;transform:scaleX(0.9750);">Current I3</span>
<span class="t" style="left:899.50px;top:1021.06px;font-size:55.45px;line-height:55.45px;font-style:italic;color:#000;-webkit-text-stroke:1.1px #000;transform:scaleX(0.9167);letter-spacing:0;">0<span style="display:inline-block;width:0;position:relative;left:-8.9px">.</span>00</span>
<span class="t" style="left:986.80px;top:1051.81px;font-size:17px;line-height:17px;color:#111;font-weight:bold;transform:scaleX(0.9492);">mA</span>
<div class="b" style="left:808.30px;top:1074.60px;width:220.10px;height:3.40px;background:#f4f6fa;"></div>
<div class="b" style="left:808.30px;top:1078.00px;width:220.10px;height:12.00px;background:#c3cedb;"></div>
<div class="b" style="left:808.30px;top:1090.00px;width:220.10px;height:57.60px;background:#0080ff;"></div>
<span class="t" style="left:814.30px;top:1079.03px;font-size:9.3px;line-height:9.3px;color:#1c1c1c;transform:scaleX(0.9750);">Phase of current I3</span>
<span class="t" style="left:899.50px;top:1093.06px;font-size:55.45px;line-height:55.45px;font-style:italic;color:#000;-webkit-text-stroke:1.1px #000;transform:scaleX(0.9167);letter-spacing:0;">0<span style="display:inline-block;width:0;position:relative;left:-8.9px">.</span>00</span>
<span class="t" style="left:987.40px;top:1124.81px;font-size:17px;line-height:17px;color:#111;font-weight:bold;transform:scaleX(1.0722);">Deg.</span>
<div class="b" style="left:1037.50px;top:530.00px;width:906.00px;height:630.30px;background:linear-gradient(#b9cbdc 0px,#d6e2ee 30px,#d2dfec 100%);border:1px solid #5b6773;border-radius:7px 7px 1px 1px;box-shadow:inset 0 0 0 1px rgba(255,255,255,.55);"></div>
<div class="b" style="left:1046.50px;top:561.50px;width:889.00px;height:589.50px;background:#f0f0f0;border:1px solid #7d8790;border-right-color:#e8eef5;border-bottom-color:#e8eef5;"></div>
<div class="b" style="left:1832.80px;top:539.50px;width:31.50px;height:17.50px;background:linear-gradient(#c3d1e0,#cfdce9);border:1px solid #98acc2;border-radius:3px;box-shadow:inset 0 0 0 1px rgba(255,255,255,.35);"></div>
<div class="b" style="left:1866.90px;top:539.50px;width:31.50px;height:17.50px;background:linear-gradient(#c3d1e0,#cfdce9);border:1px solid #98acc2;border-radius:3px;box-shadow:inset 0 0 0 1px rgba(255,255,255,.35);"></div>
<div class="b" style="left:1901.00px;top:539.50px;width:31.50px;height:17.50px;background:linear-gradient(#c3d1e0,#cfdce9);border:1px solid #98acc2;border-radius:3px;box-shadow:inset 0 0 0 1px rgba(255,255,255,.35);"></div>
<svg class="b" style="left:1832.80px;top:539.50px;" width="31.5" height="17.5" viewBox="0 0 31.5 17.5"><rect x="10.5" y="8.5" width="10" height="3.6" rx="1" fill="#fff" stroke="#555d66" stroke-width="1"/></svg>
<svg class="b" style="left:1866.90px;top:539.50px;" width="31.5" height="17.5" viewBox="0 0 31.5 17.5"><rect x="10.7" y="4.6" width="9.6" height="7.6" rx="1" fill="#fff" stroke="#555d66" stroke-width="1"/><rect x="13.3" y="7.4" width="4.4" height="2.2" fill="#e4ecf4" stroke="#555d66" stroke-width="1"/></svg>
<svg class="b" style="left:1901.00px;top:539.50px;" width="31.5" height="17.5" viewBox="0 0 31.5 17.5"><path d="M12.5 6 L19.1 11.6 M19.1 6 L12.5 11.6" stroke="#555d66" stroke-width="3.7" stroke-linecap="round" fill="none"/><path d="M12.5 6 L19.1 11.6 M19.1 6 L12.5 11.6" stroke="#fff" stroke-width="2" stroke-linecap="round" fill="none"/></svg>
<svg class="b" style="left:1048.00px;top:541.00px;" width="17" height="15" viewBox="0 0 17 15"><rect x="0" y="1" width="10" height="7" fill="#30c030"/><rect x="0" y="1" width="3" height="7" fill="#e02020"/><rect x="8" y="0" width="8" height="9" fill="#20e0e0"/><path d="M10 4.5h5M13 2l2.5 2.5L13 7" stroke="#000" stroke-width="1" fill="none"/><path d="M0 13 q2 -3 4 0 t4 0 t4 0 t4 0" stroke="#0000c0" stroke-width="1" fill="none"/><path d="M0 12 q2 3 4 0 t4 0 t4 0 t4 0" stroke="#d00000" stroke-width="0.8" fill="none"/></svg>
<span class="t" style="left:1292.80px;top:541.75px;font-size:15.3px;line-height:15.3px;color:#1a1a1a;transform:scaleX(0.9060);">PowerCenter - 4-WIRE ACTIVE POWER/ENERGY</span>
<div class="b" style="left:1047.50px;top:562.50px;width:887.00px;height:39.50px;background:#f0f0f0;"></div>
<div class="b" style="left:1047.50px;top:601.50px;width:792.00px;height:1.00px;background:#fff;"></div>
<div class="b" style="left:1207.00px;top:566.00px;width:1.00px;height:33.00px;background:#b4b4b4;"></div>
<div class="b" style="left:1208.00px;top:566.00px;width:1.00px;height:33.00px;background:#fff;"></div>
<div class="b" style="left:1293.00px;top:566.00px;width:1.00px;height:33.00px;background:#b4b4b4;"></div>
<div class="b" style="left:1294.00px;top:566.00px;width:1.00px;height:33.00px;background:#fff;"></div>
<div class="b" style="left:1457.20px;top:566.00px;width:1.00px;height:33.00px;background:#b4b4b4;"></div>
<div class="b" style="left:1458.20px;top:566.00px;width:1.00px;height:33.00px;background:#fff;"></div>
<div class="b" style="left:1582.50px;top:566.00px;width:1.00px;height:33.00px;background:#b4b4b4;"></div>
<div class="b" style="left:1583.50px;top:566.00px;width:1.00px;height:33.00px;background:#fff;"></div>
<div class="b" style="left:1668.70px;top:566.00px;width:1.00px;height:33.00px;background:#b4b4b4;"></div>
<div class="b" style="left:1669.70px;top:566.00px;width:1.00px;height:33.00px;background:#fff;"></div>
<div class="b" style="left:1715.00px;top:566.00px;width:1.00px;height:33.00px;background:#b4b4b4;"></div>
<div class="b" style="left:1716.00px;top:566.00px;width:1.00px;height:33.00px;background:#fff;"></div>
<div class="b" style="left:1799.20px;top:566.00px;width:1.00px;height:33.00px;background:#b4b4b4;"></div>
<div class="b" style="left:1800.20px;top:566.00px;width:1.00px;height:33.00px;background:#fff;"></div>
<div class="b" style="left:1126.30px;top:564.00px;width:37.90px;height:37.00px;background:#f8f8f8;border:1px solid #e2e2e2;border-top-color:#c4c4c4;border-left-color:#c4c4c4;"></div>
<div class="b" style="left:1462.50px;top:564.00px;width:38.00px;height:37.00px;background:#f8f8f8;border:1px solid #e2e2e2;border-top-color:#c4c4c4;border-left-color:#c4c4c4;"></div>
<div class="b" style="left:1720.70px;top:564.00px;width:37.30px;height:37.00px;background:#f8f8f8;border:1px solid #e2e2e2;border-top-color:#c4c4c4;border-left-color:#c4c4c4;"></div>
<svg class="b" style="left:1052.00px;top:568.00px;" width="30" height="30" viewBox="0 0 30 30"><g stroke="#000" stroke-width="1.2" fill="none"><path d="M15 15V2M15 15L3 23M15 15L27 23"/><path d="M12.5 5L15 1.5L17.5 5M3 19.5L2.5 23.5L6.5 23M27 19.5L27.5 23.5L23.5 23"/></g><g stroke="#8a8a8a" stroke-width="1.1" fill="none"><path d="M15 15V28M15 15L2 14M15 15L25 6"/><path d="M13 25l2 3l2-3M5 12l-3 2l3 2M22 6.5h3.5v3.5"/></g></svg>
<svg class="b" style="left:1091.00px;top:570.00px;" width="30" height="26" viewBox="0 0 30 26"><rect x="1" y="1.5" width="27" height="21" rx="2" fill="#e4e4e4" stroke="#000" stroke-width="1.6"/><rect x="1" y="22" width="27" height="2" fill="#888"/><g fill="none" stroke="#000" stroke-width="1.1"><rect x="6.0" y="5.5" width="4" height="3.6"/><rect x="12.2" y="5.5" width="4" height="3.6"/><rect x="18.4" y="5.5" width="4" height="3.6"/><rect x="6.0" y="11.3" width="4" height="3.6"/><rect x="12.2" y="11.3" width="4" height="3.6"/><rect x="18.4" y="11.3" width="4" height="3.6"/><path d="M6 18.5h4M12.2 18.5h4M18.4 18.5h4" stroke-dasharray="2 1"/></g></svg>
<svg class="b" style="left:1132.00px;top:568.00px;" width="30" height="30" viewBox="0 0 30 30"><path d="M3 2v25M1 14h27" stroke="#0000d0" stroke-width="1.2" fill="none"/><path d="M1 5l2-3l2 3M25 12l3 2l-3 2" stroke="#0000d0" stroke-width="1.1" fill="none"/><path d="M3 20 L6 6 L9 12 L12 8 L15 14 L18 17 L21 11 L24 13 L27 6 L28 13" stroke="#e01010" stroke-width="1.2" fill="none"/><path d="M3 14h24" stroke="#000" stroke-width="0.7"/></svg>
<svg class="b" style="left:1169.00px;top:568.00px;" width="30" height="30" viewBox="0 0 30 30"><path d="M3.5 2v25M1 21.5h26" stroke="#8a8a8a" stroke-width="1.2" fill="none"/><path d="M1.5 5l2-3l2 3M24.5 19.5l3 2l-3 2" stroke="#8a8a8a" stroke-width="1.1" fill="none"/><g fill="#000"><rect x="5.5" y="7" width="3.2" height="14"/><rect x="10" y="13" width="3.2" height="8"/><rect x="14.5" y="11" width="3.2" height="10"/><rect x="19" y="15" width="3.2" height="6"/><rect x="22.6" y="14" width="2.4" height="7"/></g></svg>
<svg class="b" style="left:1218.00px;top:570.00px;filter:drop-shadow(1px 1px 0 #fff);" width="26" height="24" viewBox="0 0 26 24"><g stroke="#a8a8a8" stroke-width="1.6" fill="none"><path d="M11 16V3h3v13M12.5 16L3 22M12.5 16L23 22"/><path d="M10 5l2.5-3.5L15 5M2 19l-.5 3.5l4 .2M24 19l.5 3.5l-4 .2"/></g></svg>
<svg class="b" style="left:1258.00px;top:570.00px;filter:drop-shadow(1px 1px 0 #fff);" width="26" height="24" viewBox="0 0 26 24"><g stroke="#a8a8a8" stroke-width="1.6" fill="none"><path d="M11 16V3h3v13M12.5 16L3 22M12.5 16L23 22"/><path d="M10 5l2.5-3.5L15 5M2 19l-.5 3.5l4 .2M24 19l.5 3.5l-4 .2"/></g></svg>
<span class="t" style="left:1262.00px;top:577.42px;font-size:12.5px;line-height:12.5px;color:#a8a8a8;font-weight:bold;text-shadow:1px 1px 0 #fff;">2</span>
<svg class="b" style="left:1306.00px;top:569.00px;filter:drop-shadow(1px 1px 0 #fff);" width="28" height="28" viewBox="0 0 28 28"><circle cx="11" cy="13" r="10" fill="none" stroke="#a8a8a8" stroke-width="1.2" stroke-dasharray="1.2 1.8"/><path d="M10 12h10M17 9l3.5 3l-3.5 3" stroke="#a8a8a8" stroke-width="1.3" fill="none"/></svg>
<span class="t" style="left:1328.50px;top:585.50px;font-size:6.5px;line-height:6.5px;color:#a8a8a8;">0</span>
<svg class="b" style="left:1346.00px;top:569.00px;filter:drop-shadow(1px 1px 0 #fff);" width="24" height="28" viewBox="0 0 24 28"><circle cx="11" cy="13" r="10" fill="none" stroke="#a8a8a8" stroke-width="1.2" stroke-dasharray="1.2 1.8"/><path d="M5 5v3h3M17 5v3h-3M5 21v-3h3M17 21v-3h-3" stroke="#a8a8a8" stroke-width="1" fill="none"/></svg>
<span class="t" style="left:1391.50px;top:573.61px;font-size:10.5px;line-height:10.5px;color:#a8a8a8;font-weight:bold;text-shadow:1px 1px 0 #fff;">V</span>
<svg class="b" style="left:1383.00px;top:582.00px;filter:drop-shadow(1px 1px 0 #fff);" width="24" height="8" viewBox="0 0 24 8"><path d="M0 3.5h21M18 0.5l3.5 3l-3.5 3" stroke="#a8a8a8" stroke-width="1.2" fill="none"/></svg>
<svg class="b" style="left:1423.00px;top:572.00px;filter:drop-shadow(1px 1px 0 #fff);" width="22" height="22" viewBox="0 0 22 22"><path d="M2 11L11 2L20 11M5 15h14M16 12l3.5 3l-3.5 3M2 11l3 .5M2 11l.5-3" stroke="#a8a8a8" stroke-width="1.2" fill="none"/></svg>
<svg class="b" style="left:1471.00px;top:570.00px;" width="24" height="26" viewBox="0 0 24 26"><path d="M3.5 1v22M1 20.5h22" stroke="#0000d0" stroke-width="1.3" fill="none"/><path d="M1 4l2.5-3l2.5 3" stroke="#0000d0" stroke-width="1" fill="none"/><path d="M3 15h20" stroke="#000" stroke-width="1.1"/><path d="M3 12 q3 -6 6 0 t6 3 t7 -3" stroke="#e01010" stroke-width="1.3" fill="none"/></svg>
<svg class="b" style="left:1507.00px;top:570.00px;" width="26" height="26" viewBox="0 0 26 26"><path d="M3.5 1v22M1 20.5h23M1 5.5h23" stroke="#8a8a8a" stroke-width="1.2" fill="none"/><path d="M3 14 q3 -10 7 0 t7 2 t7 -6" stroke="#008080" stroke-width="1.4" fill="none"/></svg>
<svg class="b" style="left:1547.00px;top:570.00px;" width="26" height="26" viewBox="0 0 26 26"><path d="M3.5 1v22M1 20.5h23" stroke="#8a8a8a" stroke-width="1.2" fill="none"/><path d="M2 9 q3 -6 7 0 t7 2 t7 -6" stroke="#008080" stroke-width="1.4" fill="none"/><path d="M2 12 q4 4 8 0 t8 -3 l4 -2" stroke="#000" stroke-width="1" fill="none"/></svg>
<svg class="b" style="left:1594.00px;top:571.00px;filter:drop-shadow(1px 1px 0 #fff);" width="26" height="24" viewBox="0 0 26 24"><path d="M3.5 1v22M0 3.5h24M0 20.5h24" stroke="#a8a8a8" stroke-width="1.3" fill="none"/></svg>
<svg class="b" style="left:1633.00px;top:571.00px;filter:drop-shadow(1px 1px 0 #fff);" width="26" height="24" viewBox="0 0 26 24"><path d="M3.5 1v22M0 3.5h24M0 20.5h24M3 8h21M3 12h21M3 16h21" stroke="#a8a8a8" stroke-width="1.2" fill="none"/></svg>
<svg class="b" style="left:1681.00px;top:571.00px;" width="22" height="24" viewBox="0 0 22 24"><path d="M0.5 1.5h19l1.5 1.5v20h-20.5z" fill="#a8a8a8"/><rect x="4" y="1.5" width="12" height="9" fill="#f4f4f4"/><rect x="5" y="15" width="10" height="8" fill="#e8e8e8"/><rect x="11" y="16.5" width="2.5" height="5" fill="#a8a8a8"/></svg>
<svg class="b" style="left:1726.00px;top:572.00px;" width="28" height="14" viewBox="0 0 28 14"><path d="M1 4l3-3h22v8l-3 3z" fill="#101090"/><rect x="1" y="4" width="22" height="9" fill="#1818e8"/><rect x="4" y="6" width="6" height="5" fill="#20e8f8"/><rect x="13" y="8" width="5" height="2" fill="#d8d8ff"/></svg>
<span class="t" style="left:1733.00px;top:588.81px;font-size:10.5px;line-height:10.5px;color:#000;transform:scaleX(1.1136);">Int</span>
<svg class="b" style="left:1766.00px;top:569.50px;filter:drop-shadow(1px 1px 0 #fff);" width="24" height="20" viewBox="0 0 24 20"><path d="M2 0h6v18h-6z" fill="#a8a8a8"/><path d="M4 2v14" stroke="#d8d8d8" stroke-width="1"/><path d="M11 12h8v6h-8zM14 12v-4h8v6h-3" stroke="#a8a8a8" stroke-width="1.2" fill="#e4e4e4"/><path d="M8 16h3" stroke="#a8a8a8" stroke-width="1.2"/></svg>
<span class="t" style="left:1770.25px;top:588.81px;font-size:10.5px;line-height:10.5px;color:#a8a8a8;transform:scaleX(1.0217);text-shadow:1px 1px 0 #fff;">Ext</span>
<div class="b" style="left:1047.50px;top:602.50px;width:887.00px;height:53.00px;background:#f0f0f0;"></div>
<div class="b" style="left:1838.50px;top:602.50px;width:1.00px;height:52.00px;background:#a8a8a8;"></div>
<div class="b" style="left:1839.50px;top:602.50px;width:1.00px;height:52.00px;background:#fff;"></div>
<div class="b" style="left:1047.50px;top:654.30px;width:792.00px;height:1.00px;background:#a0a0a0;"></div>
<div class="b" style="left:1183.00px;top:610.00px;width:1.00px;height:41.00px;background:#b4b4b4;"></div>
<div class="b" style="left:1184.00px;top:610.00px;width:1.00px;height:41.00px;background:#fff;"></div>
<div class="b" style="left:1375.30px;top:610.00px;width:1.00px;height:41.00px;background:#b4b4b4;"></div>
<div class="b" style="left:1376.30px;top:610.00px;width:1.00px;height:41.00px;background:#fff;"></div>
<div class="b" style="left:1540.70px;top:610.00px;width:1.00px;height:41.00px;background:#b4b4b4;"></div>
<div class="b" style="left:1541.70px;top:610.00px;width:1.00px;height:41.00px;background:#fff;"></div>
<div class="b" style="left:1749.40px;top:610.00px;width:1.00px;height:41.00px;background:#b4b4b4;"></div>
<div class="b" style="left:1750.40px;top:610.00px;width:1.00px;height:41.00px;background:#fff;"></div>
<span class="t" style="left:1063.30px;top:607.42px;font-size:11.2px;line-height:11.2px;color:#111;transform:scaleX(0.9096);">Scale X - samples</span>
<span class="t" style="left:1222.50px;top:607.42px;font-size:11.2px;line-height:11.2px;color:#111;transform:scaleX(0.9326);">Scale Y - accuracy</span>
<span class="t" style="left:1409.00px;top:607.42px;font-size:11.2px;line-height:11.2px;color:#111;transform:scaleX(0.9512);">Sample's integration</span>
<span class="t" style="left:1594.30px;top:607.42px;font-size:11.2px;line-height:11.2px;color:#111;transform:scaleX(0.9703);">Calculation of stability</span>
<span class="t" style="left:1763.00px;top:608.72px;font-size:11.2px;line-height:11.2px;color:#111;transform:scaleX(0.9741);">Harm. order</span>
<span class="t" style="left:1102.50px;top:636.22px;font-size:11.2px;line-height:11.2px;color:#111;transform:scaleX(0.9402);">samples/gr</span>
<span class="t" style="left:1247.10px;top:636.22px;font-size:11.2px;line-height:11.2px;color:#111;transform:scaleX(1.0335);">%/gr</span>
<span class="t" style="left:1339.50px;top:636.22px;font-size:11.2px;line-height:11.2px;color:#111;transform:scaleX(1.0086);">°/gr</span>
<span class="t" style="left:1398.30px;top:636.22px;font-size:11.2px;line-height:11.2px;color:#111;transform:scaleX(0.9147);">time:</span>
<span class="t" style="left:1469.00px;top:636.22px;font-size:11.2px;line-height:11.2px;color:#111;transform:scaleX(0.7500);">s</span>
<span class="t" style="left:1574.50px;top:636.72px;font-size:11.2px;line-height:11.2px;color:#111;transform:scaleX(0.9287);">samples No.:</span>
<div class="b" style="left:1165.20px;top:605.30px;width:14.80px;height:20.30px;background:#f0f0f0;border:1px solid #fff;border-right:2px solid #7a7a7a;border-bottom:2px solid #7a7a7a;box-shadow:inset -1px -1px 0 #c8c8c8;"></div>
<span class="t" style="left:1168.35px;top:609.57px;font-size:11.2px;line-height:11.2px;color:#111;transform:scaleX(1.2052);">II</span>
<div class="b" style="left:1357.20px;top:605.30px;width:14.80px;height:20.30px;background:#f0f0f0;border:1px solid #fff;border-right:2px solid #7a7a7a;border-bottom:2px solid #7a7a7a;box-shadow:inset -1px -1px 0 #c8c8c8;"></div>
<span class="t" style="left:1360.85px;top:609.57px;font-size:11.2px;line-height:11.2px;color:#111;transform:scaleX(0.8036);">C</span>
<div class="b" style="left:1493.20px;top:631.50px;width:41.80px;height:20.10px;background:#f0f0f0;border:1px solid #fff;border-right:2px solid #7a7a7a;border-bottom:2px solid #7a7a7a;box-shadow:inset -1px -1px 0 #c8c8c8;"></div>
<span class="t" style="left:1498.10px;top:635.67px;font-size:11.2px;line-height:11.2px;color:#111;transform:scaleX(1.1849);">&gt;&gt;&gt;&gt;</span>
<div class="b" style="left:1694.40px;top:631.00px;width:50.00px;height:21.00px;background:#f0f0f0;border:1px solid #fff;border-right:2px solid #7a7a7a;border-bottom:2px solid #7a7a7a;box-shadow:inset -1px -1px 0 #c8c8c8;"></div>
<span class="t" style="left:1704.40px;top:635.62px;font-size:11.2px;line-height:11.2px;color:#111;transform:scaleX(0.9912);">Reset</span>
<div class="b" style="left:1054.70px;top:631.80px;width:44.30px;height:17.50px;background:#fff;border:2px solid #8a8a8a;border-right:1px solid #fff;border-bottom:1px solid #fff;border-top-color:#7a7a7a;"></div>
<div class="b" style="left:1082.50px;top:633.30px;width:15.00px;height:7.60px;background:#f0f0f0;border:1px solid #fff;border-right-color:#7a7a7a;border-bottom-color:#7a7a7a;"></div>
<svg class="b" style="left:1087.50px;top:635.30px;" width="5" height="4" viewBox="0 0 5 4"><path d="M0 3L2.5 0.5L5 3Z" fill="#000"/></svg>
<div class="b" style="left:1082.50px;top:641.10px;width:15.00px;height:7.60px;background:#f0f0f0;border:1px solid #fff;border-right-color:#7a7a7a;border-bottom-color:#7a7a7a;"></div>
<svg class="b" style="left:1087.50px;top:643.10px;" width="5" height="4" viewBox="0 0 5 4"><path d="M0 0.5L2.5 3L5 0.5Z" fill="#000"/></svg>
<span class="t" style="left:1072.80px;top:636.12px;font-size:11.2px;line-height:11.2px;color:#111;transform:scaleX(0.9632);">3</span>
<div class="b" style="left:1185.00px;top:631.80px;width:57.20px;height:17.50px;background:#fff;border:2px solid #8a8a8a;border-right:1px solid #fff;border-bottom:1px solid #fff;border-top-color:#7a7a7a;"></div>
<div class="b" style="left:1225.70px;top:633.30px;width:15.00px;height:7.60px;background:#f0f0f0;border:1px solid #fff;border-right-color:#7a7a7a;border-bottom-color:#7a7a7a;"></div>
<svg class="b" style="left:1230.70px;top:635.30px;" width="5" height="4" viewBox="0 0 5 4"><path d="M0 3L2.5 0.5L5 3Z" fill="#000"/></svg>
<div class="b" style="left:1225.70px;top:641.10px;width:15.00px;height:7.60px;background:#f0f0f0;border:1px solid #fff;border-right-color:#7a7a7a;border-bottom-color:#7a7a7a;"></div>
<svg class="b" style="left:1230.70px;top:643.10px;" width="5" height="4" viewBox="0 0 5 4"><path d="M0 0.5L2.5 3L5 0.5Z" fill="#000"/></svg>
<span class="t" style="left:1193.80px;top:636.12px;font-size:11.2px;line-height:11.2px;color:#111;transform:scaleX(0.9776);">0.010</span>
<div class="b" style="left:1283.60px;top:631.80px;width:50.90px;height:17.50px;background:#fff;border:2px solid #8a8a8a;border-right:1px solid #fff;border-bottom:1px solid #fff;border-top-color:#7a7a7a;"></div>
<div class="b" style="left:1318.00px;top:633.30px;width:15.00px;height:7.60px;background:#f0f0f0;border:1px solid #fff;border-right-color:#7a7a7a;border-bottom-color:#7a7a7a;"></div>
<svg class="b" style="left:1323.00px;top:635.30px;" width="5" height="4" viewBox="0 0 5 4"><path d="M0 3L2.5 0.5L5 3Z" fill="#000"/></svg>
<div class="b" style="left:1318.00px;top:641.10px;width:15.00px;height:7.60px;background:#f0f0f0;border:1px solid #fff;border-right-color:#7a7a7a;border-bottom-color:#7a7a7a;"></div>
<svg class="b" style="left:1323.00px;top:643.10px;" width="5" height="4" viewBox="0 0 5 4"><path d="M0 0.5L2.5 3L5 0.5Z" fill="#000"/></svg>
<span class="t" style="left:1292.40px;top:636.12px;font-size:11.2px;line-height:11.2px;color:#111;transform:scaleX(1.0046);">0.03</span>
<div class="b" style="left:1424.20px;top:631.80px;width:42.10px;height:17.50px;background:#fff;border:2px solid #8a8a8a;border-right:1px solid #fff;border-bottom:1px solid #fff;border-top-color:#7a7a7a;"></div>
<div class="b" style="left:1449.80px;top:633.30px;width:15.00px;height:7.60px;background:#f0f0f0;border:1px solid #fff;border-right-color:#7a7a7a;border-bottom-color:#7a7a7a;"></div>
<svg class="b" style="left:1454.80px;top:635.30px;" width="5" height="4" viewBox="0 0 5 4"><path d="M0 3L2.5 0.5L5 3Z" fill="#000"/></svg>
<div class="b" style="left:1449.80px;top:641.10px;width:15.00px;height:7.60px;background:#f0f0f0;border:1px solid #fff;border-right-color:#7a7a7a;border-bottom-color:#7a7a7a;"></div>
<svg class="b" style="left:1454.80px;top:643.10px;" width="5" height="4" viewBox="0 0 5 4"><path d="M0 0.5L2.5 3L5 0.5Z" fill="#000"/></svg>
<span class="t" style="left:1431.00px;top:636.12px;font-size:11.2px;line-height:11.2px;color:#111;transform:scaleX(0.7545);">1</span>
<div class="b" style="left:1639.50px;top:631.80px;width:48.80px;height:17.50px;background:#fff;border:2px solid #8a8a8a;border-right:1px solid #fff;border-bottom:1px solid #fff;border-top-color:#7a7a7a;"></div>
<div class="b" style="left:1671.80px;top:633.30px;width:15.00px;height:7.60px;background:#f0f0f0;border:1px solid #fff;border-right-color:#7a7a7a;border-bottom-color:#7a7a7a;"></div>
<svg class="b" style="left:1676.80px;top:635.30px;" width="5" height="4" viewBox="0 0 5 4"><path d="M0 3L2.5 0.5L5 3Z" fill="#000"/></svg>
<div class="b" style="left:1671.80px;top:641.10px;width:15.00px;height:7.60px;background:#f0f0f0;border:1px solid #fff;border-right-color:#7a7a7a;border-bottom-color:#7a7a7a;"></div>
<svg class="b" style="left:1676.80px;top:643.10px;" width="5" height="4" viewBox="0 0 5 4"><path d="M0 0.5L2.5 3L5 0.5Z" fill="#000"/></svg>
<span class="t" style="left:1645.60px;top:636.12px;font-size:11.2px;line-height:11.2px;color:#111;transform:scaleX(0.8348);">10</span>
<div class="b" style="left:1769.50px;top:631.80px;width:41.70px;height:17.50px;background:#f0f0f0;border:2px solid #8a8a8a;border-right:1px solid #fff;border-bottom:1px solid #fff;border-top-color:#7a7a7a;"></div>
<div class="b" style="left:1794.70px;top:633.30px;width:15.00px;height:7.60px;background:#f0f0f0;border:1px solid #fff;border-right-color:#7a7a7a;border-bottom-color:#7a7a7a;"></div>
<svg class="b" style="left:1799.70px;top:635.30px;" width="5" height="4" viewBox="0 0 5 4"><path d="M0 3L2.5 0.5L5 3Z" fill="#b0b0b0"/></svg>
<div class="b" style="left:1794.70px;top:641.10px;width:15.00px;height:7.60px;background:#f0f0f0;border:1px solid #fff;border-right-color:#7a7a7a;border-bottom-color:#7a7a7a;"></div>
<svg class="b" style="left:1799.70px;top:643.10px;" width="5" height="4" viewBox="0 0 5 4"><path d="M0 0.5L2.5 3L5 0.5Z" fill="#b0b0b0"/></svg>
<div class="b" style="left:1047.50px;top:655.70px;width:887.00px;height:494.30px;background:#646464;"></div>
<svg class="b" style="left:1047.50px;top:655.70px;" width="887" height="494.3" viewBox="0 0 887 494.3"><g stroke="#80800e" stroke-width="1" stroke-dasharray="3 2.4" fill="none" opacity="0.9"><path d="M8.8 54.6V414.3"/><path d="M66.8 54.6V414.3"/><path d="M124.8 54.6V414.3"/><path d="M182.9 54.6V414.3"/><path d="M240.9 54.6V414.3"/><path d="M298.9 54.6V414.3"/><path d="M356.9 54.6V414.3"/><path d="M414.9 54.6V414.3"/><path d="M473.0 54.6V414.3"/><path d="M531.0 54.6V414.3"/><path d="M589.0 54.6V414.3"/><path d="M647.0 54.6V414.3"/><path d="M705.0 54.6V414.3"/><path d="M763.1 54.6V414.3"/><path d="M821.1 54.6V414.3"/><path d="M879.1 54.6V414.3"/><path d="M8.8 54.6H879.1"/><path d="M8.8 90.6H879.1"/><path d="M8.8 126.5H879.1"/><path d="M8.8 162.5H879.1"/><path d="M8.8 198.5H879.1"/><path d="M8.8 234.4H879.1"/><path d="M8.8 270.4H879.1"/><path d="M8.8 306.4H879.1"/><path d="M8.8 342.4H879.1"/><path d="M8.8 378.3H879.1"/><path d="M8.8 414.3H879.1"/></g><polyline points="8.8 234.9 28.1 234.7 47.5 234.5 66.8 235.5 86.2 234.2 105.5 232.9 124.8 234.4 144.2 237.1 163.5 236.4 182.9 233.3 202.2 236.3 221.5 236.1 240.9 235.1 260.2 235.1 279.6 235.0 298.9 234.9 318.2 234.5 337.6 235.3 356.9 235.8 376.3 232.9 395.6 234.0 414.9 234.1 434.3 236.4 453.6 234.1 473.0 234.6 492.3 234.5 511.6 235.5 531.0 234.8 550.3 234.7 569.7 236.2 589.0 233.6 608.3 233.9 627.7 236.1 647.0 236.3 666.4 235.2 685.7 237.5 705.0 235.8 724.4 234.8 743.7 237.4 763.1 235.3 782.4 237.6 801.7 235.5 821.1 237.7 840.4 233.6 859.8 233.8 879.1 233.4" fill="none" stroke="#8c8c10" stroke-width="2.4" stroke-linejoin="round"/><polyline points="8.8 233.3 28.1 235.5 47.5 237.8 66.8 233.4 86.2 236.1 105.5 234.9 124.8 238.4 144.2 234.7 163.5 235.5 182.9 236.7 202.2 234.6 221.5 234.8 240.9 235.2 260.2 236.1 279.6 234.8 298.9 236.3 318.2 235.3 337.6 235.2 356.9 234.0 376.3 234.2 395.6 233.9 414.9 233.9 434.3 235.2 453.6 235.5 473.0 236.6 492.3 234.8 511.6 234.7 531.0 237.9 550.3 235.5 569.7 235.7 589.0 236.2 608.3 236.2 627.7 236.8 647.0 234.6 666.4 235.0 685.7 237.8 705.0 237.5 724.4 238.4 743.7 236.8 763.1 235.1 782.4 232.8 801.7 231.9 821.1 236.7 840.4 232.6 859.8 235.8 879.1 236.3" fill="none" stroke="#ff2078" stroke-width="2.2" stroke-linejoin="round"/><polyline points="8.8 234.9 28.1 232.1 47.5 235.0 66.8 234.5 86.2 236.4 105.5 235.9 124.8 237.2 144.2 233.1 163.5 230.8 182.9 231.8 202.2 235.3 221.5 231.3 240.9 236.3 260.2 234.6 279.6 238.4 298.9 237.5 318.2 236.2 337.6 239.2 356.9 236.9 376.3 235.5 395.6 235.5 414.9 235.1 434.3 235.4 453.6 237.0 473.0 235.1 492.3 235.8 511.6 236.7 531.0 234.6 550.3 233.8 569.7 233.6 589.0 230.8 608.3 233.0 627.7 230.6 647.0 235.6 666.4 237.3 685.7 234.5 705.0 233.0 724.4 234.3 743.7 234.8 763.1 233.8 782.4 234.5 801.7 232.7 821.1 234.1 840.4 232.1 859.8 237.3 879.1 237.6" fill="none" stroke="#2088c8" stroke-width="2.6" stroke-linejoin="round"/><polyline points="8.8 233.1 28.1 235.1 47.5 237.0 66.8 242.8 86.2 237.8 105.5 242.6 124.8 236.9 144.2 225.8 163.5 241.5 182.9 236.9 202.2 238.3 221.5 238.8 240.9 238.6 260.2 225.3 279.6 223.0 298.9 230.3 318.2 231.1 337.6 226.4 356.9 231.3 376.3 223.9 395.6 224.4 414.9 229.1 434.3 233.3 453.6 227.5 473.0 234.6 492.3 233.7 511.6 234.6 531.0 237.7 550.3 230.6 569.7 231.5 589.0 222.3 608.3 231.7 627.7 234.7 647.0 236.2 666.4 228.1 685.7 234.0 705.0 232.9 724.4 228.4 743.7 222.7 763.1 233.9 782.4 226.8 801.7 236.2 821.1 233.3 840.4 245.0 859.8 240.7 879.1 237.1" fill="none" stroke="#ff88e4" stroke-width="2.0" stroke-linejoin="round"/><polyline points="8.8 245.5 28.1 237.2 47.5 228.5 66.8 235.5 86.2 241.9 105.5 231.2 124.8 229.5 144.2 235.6 163.5 240.0 182.9 238.5 202.2 237.3 221.5 234.0 240.9 242.7 260.2 240.0 279.6 235.4 298.9 230.8 318.2 231.0 337.6 237.5 356.9 235.1 376.3 235.8 395.6 234.3 414.9 234.8 434.3 232.6 453.6 231.9 473.0 231.6 492.3 232.6 511.6 235.7 531.0 232.9 550.3 233.4 569.7 240.9 589.0 246.9 608.3 239.3 627.7 233.7 647.0 243.6 666.4 235.3 685.7 233.4 705.0 243.9 724.4 236.8 743.7 236.4 763.1 239.1 782.4 233.9 801.7 225.9 821.1 234.2 840.4 224.2 859.8 231.2 879.1 234.2" fill="none" stroke="#ffff78" stroke-width="2.0" stroke-linejoin="round"/><polyline points="8.8 239.9 28.1 245.7 47.5 233.2 66.8 233.5 86.2 226.0 105.5 226.5 124.8 230.4 144.2 242.6 163.5 235.3 182.9 234.6 202.2 231.6 221.5 227.1 240.9 234.3 260.2 236.1 279.6 236.2 298.9 240.8 318.2 238.9 337.6 236.8 356.9 233.8 376.3 235.1 395.6 239.1 414.9 229.1 434.3 233.7 453.6 236.4 473.0 226.3 492.3 232.7 511.6 237.9 531.0 231.5 550.3 234.0 569.7 235.2 589.0 227.0 608.3 233.4 627.7 228.4 647.0 242.3 666.4 247.8 685.7 238.3 705.0 233.6 724.4 232.1 743.7 241.1 763.1 248.0 782.4 239.8 801.7 239.5 821.1 233.8 840.4 234.4 859.8 232.3 879.1 234.3" fill="none" stroke="#78ffff" stroke-width="2.0" stroke-linejoin="round"/><polyline points="609.3 235.0 628.1 414.2 646.9 235.0" fill="none" stroke="#909000" stroke-width="2"/><path d="M1 230.0 L8 235.0 L1 240.0Z" fill="#fff"/><path d="M886 230.0 L879 235.0 L886 240.0Z" fill="#fff"/></svg>
<span class="t" style="left:1170.70px;top:713.66px;font-size:13.3px;line-height:13.3px;color:#22e022;font-family:'Liberation Serif',serif;font-weight:bold;transform:scaleX(1.0043);">3 sec/grad</span>
<span class="t" style="left:1451.00px;top:713.66px;font-size:13.3px;line-height:13.3px;color:#22e022;font-family:'Liberation Serif',serif;font-weight:bold;transform:scaleX(1.0189);">0.010 %/grad</span>
<span class="t" style="left:1750.70px;top:713.66px;font-size:13.3px;line-height:13.3px;color:#22e022;font-family:'Liberation Serif',serif;font-weight:bold;transform:scaleX(0.9869);">0.03 °/grad</span>
<div class="b" style="left:1053.40px;top:1074.80px;width:72.60px;height:25.00px;border:1px solid #1c1ce0;border-radius:8px;"></div>
<span class="t" style="left:1080.09px;top:1079.41px;font-size:17px;line-height:17px;color:#ff88d8;transform:scaleX(0.8750);">U1</span>
<span class="t" style="left:1076.28px;top:1103.51px;font-size:17px;line-height:17px;color:#2a8cf0;transform:scaleX(0.8900);">φu1</span>
<span class="t" style="left:1080.50px;top:1128.11px;font-size:17px;line-height:17px;color:#2a8cf0;transform:scaleX(0.8750);">P1</span>
<div class="b" style="left:1126.30px;top:1074.80px;width:72.60px;height:25.00px;border:1px solid #1c1ce0;border-radius:8px;"></div>
<span class="t" style="left:1152.99px;top:1079.41px;font-size:17px;line-height:17px;color:#ffff88;transform:scaleX(0.8750);">U2</span>
<span class="t" style="left:1149.18px;top:1103.51px;font-size:17px;line-height:17px;color:#1c1cf0;transform:scaleX(0.8900);">φu2</span>
<span class="t" style="left:1153.40px;top:1128.11px;font-size:17px;line-height:17px;color:#1c1cf0;transform:scaleX(0.8750);">P2</span>
<div class="b" style="left:1199.10px;top:1074.80px;width:72.60px;height:25.00px;border:1px solid #1c1ce0;border-radius:8px;"></div>
<span class="t" style="left:1225.79px;top:1079.41px;font-size:17px;line-height:17px;color:#88f8f0;transform:scaleX(0.8750);">U3</span>
<span class="t" style="left:1221.98px;top:1103.51px;font-size:17px;line-height:17px;color:#0a0a0a;transform:scaleX(0.8900);">φu3</span>
<span class="t" style="left:1226.20px;top:1128.11px;font-size:17px;line-height:17px;color:#0a0a0a;transform:scaleX(0.8750);">P3</span>
<div class="b" style="left:1271.40px;top:1074.80px;width:72.60px;height:25.00px;border:1px solid #1c1ce0;border-radius:8px;"></div>
<span class="t" style="left:1301.40px;top:1079.41px;font-size:17px;line-height:17px;color:#f0206c;transform:scaleX(0.8750);">I1</span>
<span class="t" style="left:1296.81px;top:1103.51px;font-size:17px;line-height:17px;color:#2a8cf0;transform:scaleX(0.8900);">φi1</span>
<span class="t" style="left:1297.68px;top:1128.11px;font-size:17px;line-height:17px;color:#2a8cf0;transform:scaleX(0.8750);">Q1</span>
<div class="b" style="left:1344.40px;top:1074.80px;width:72.60px;height:25.00px;border:1px solid #1c1ce0;border-radius:8px;"></div>
<span class="t" style="left:1374.40px;top:1079.41px;font-size:17px;line-height:17px;color:#8c8c10;transform:scaleX(0.8750);">I2</span>
<span class="t" style="left:1369.81px;top:1103.51px;font-size:17px;line-height:17px;color:#1c1cf0;transform:scaleX(0.8900);">φi2</span>
<span class="t" style="left:1370.68px;top:1128.11px;font-size:17px;line-height:17px;color:#1c1cf0;transform:scaleX(0.8750);">Q2</span>
<div class="b" style="left:1417.40px;top:1074.80px;width:72.60px;height:25.00px;border:1px solid #1c1ce0;border-radius:8px;"></div>
<span class="t" style="left:1447.40px;top:1079.41px;font-size:17px;line-height:17px;color:#2c86c0;transform:scaleX(0.8750);">I3</span>
<span class="t" style="left:1442.81px;top:1103.51px;font-size:17px;line-height:17px;color:#0a0a0a;transform:scaleX(0.8900);">φi3</span>
<span class="t" style="left:1443.68px;top:1128.11px;font-size:17px;line-height:17px;color:#0a0a0a;transform:scaleX(0.8750);">Q3</span>
<span class="t" style="left:1512.36px;top:1079.41px;font-size:17px;line-height:17px;color:#2a8cf0;transform:scaleX(0.8750);">U21</span>
<span class="t" style="left:1508.47px;top:1103.51px;font-size:17px;line-height:17px;color:#2a8cf0;transform:scaleX(0.8900);">φu21</span>
<span class="t" style="left:1516.90px;top:1128.11px;font-size:17px;line-height:17px;color:#2a8cf0;transform:scaleX(0.8750);">S1</span>
<span class="t" style="left:1585.36px;top:1079.41px;font-size:17px;line-height:17px;color:#1c1cf0;transform:scaleX(0.8750);">U32</span>
<span class="t" style="left:1581.47px;top:1103.51px;font-size:17px;line-height:17px;color:#1c1cf0;transform:scaleX(0.8900);">φu32</span>
<span class="t" style="left:1589.90px;top:1128.11px;font-size:17px;line-height:17px;color:#1c1cf0;transform:scaleX(0.8750);">S2</span>
<span class="t" style="left:1658.36px;top:1079.41px;font-size:17px;line-height:17px;color:#0a0a0a;transform:scaleX(0.8750);">U13</span>
<span class="t" style="left:1654.47px;top:1103.51px;font-size:17px;line-height:17px;color:#0a0a0a;transform:scaleX(0.8900);">φu13</span>
<span class="t" style="left:1662.90px;top:1128.11px;font-size:17px;line-height:17px;color:#0a0a0a;transform:scaleX(0.8750);">S3</span>
<span class="t" style="left:1728.07px;top:1079.41px;font-size:17px;line-height:17px;color:#2a8cf0;transform:scaleX(0.8750);">UW1</span>
<span class="t" style="left:1725.82px;top:1103.51px;font-size:17px;line-height:17px;color:#2a8cf0;transform:scaleX(0.8900);">φuw1</span>
<span class="t" style="left:1733.44px;top:1128.11px;font-size:17px;line-height:17px;color:#2a8cf0;transform:scaleX(0.8750);">W1</span>
<span class="t" style="left:1801.47px;top:1079.41px;font-size:17px;line-height:17px;color:#0c0cd8;transform:scaleX(0.8750);">UW2</span>
<span class="t" style="left:1799.22px;top:1103.51px;font-size:17px;line-height:17px;color:#1c1cf0;transform:scaleX(0.8900);">φuw2</span>
<span class="t" style="left:1806.84px;top:1128.11px;font-size:17px;line-height:17px;color:#1c1cf0;transform:scaleX(0.8750);">W2</span>
<span class="t" style="left:1874.47px;top:1079.41px;font-size:17px;line-height:17px;color:#0a0a0a;transform:scaleX(0.8750);">UW3</span>
<span class="t" style="left:1872.22px;top:1103.51px;font-size:17px;line-height:17px;color:#0a0a0a;transform:scaleX(0.8900);">φuw3</span>
<span class="t" style="left:1879.84px;top:1128.11px;font-size:17px;line-height:17px;color:#0a0a0a;transform:scaleX(0.8750);">W3</span>
<div class="b" style="left:1944.20px;top:272.80px;width:284.80px;height:887.50px;background:linear-gradient(#a3bedb 0px,#b7cfe8 30px,#b9d1ea 100%);border:1px solid #15181c;border-width:1px 2px 2px 2px;border-radius:7px 7px 1px 1px;box-shadow:inset 0 0 0 1px rgba(255,255,255,.55);"></div>
<div class="b" style="left:1951.50px;top:304.00px;width:268.80px;height:847.50px;background:#fff;border:1px solid #7d8790;border-right-color:#e8eef5;border-bottom-color:#e8eef5;"></div>
<div class="b" style="left:2119.20px;top:282.30px;width:31.50px;height:17.50px;background:linear-gradient(#d4e2f2,#b8cde6 50%,#a8c1df 52%,#bcd2ea);border:1px solid #6f85a0;border-radius:3px;box-shadow:inset 0 0 0 1px rgba(255,255,255,.5);"></div>
<div class="b" style="left:2153.30px;top:282.30px;width:31.50px;height:17.50px;background:linear-gradient(#d4e2f2,#b8cde6 50%,#a8c1df 52%,#bcd2ea);border:1px solid #6f85a0;border-radius:3px;box-shadow:inset 0 0 0 1px rgba(255,255,255,.5);"></div>
<div class="b" style="left:2187.40px;top:282.30px;width:31.50px;height:17.50px;background:linear-gradient(#e0a8a0,#c8463a 45%,#b5281c 55%,#d2705c);border:1px solid #5c2a2a;border-radius:3px;box-shadow:inset 0 0 0 1px rgba(255,255,255,.35);"></div>
<svg class="b" style="left:2119.20px;top:282.30px;" width="31.5" height="17.5" viewBox="0 0 31.5 17.5"><rect x="10.5" y="8.5" width="10" height="3.6" rx="1" fill="#fff" stroke="#3c4650" stroke-width="1"/></svg>
<svg class="b" style="left:2153.30px;top:282.30px;" width="31.5" height="17.5" viewBox="0 0 31.5 17.5"><rect x="10.7" y="4.6" width="9.6" height="7.6" rx="1" fill="#fff" stroke="#3c4650" stroke-width="1"/><rect x="13.3" y="7.4" width="4.4" height="2.2" fill="#e4ecf4" stroke="#3c4650" stroke-width="1"/></svg>
<svg class="b" style="left:2187.40px;top:282.30px;" width="31.5" height="17.5" viewBox="0 0 31.5 17.5"><path d="M12.5 6 L19.1 11.6 M19.1 6 L12.5 11.6" stroke="#3c4650" stroke-width="3.7" stroke-linecap="round" fill="none"/><path d="M12.5 6 L19.1 11.6 M19.1 6 L12.5 11.6" stroke="#fff" stroke-width="2" stroke-linecap="round" fill="none"/></svg>
<svg class="b" style="left:1953.00px;top:284.00px;" width="17" height="16" viewBox="0 0 17 16"><rect x="0" y="0" width="16" height="2" fill="#0000e0"/><rect x="0" y="3" width="16" height="5" fill="#b8b800"/><path d="M1 4v3M3 4v3M5.5 4v3M8 4v3M10 4h2v3h-2zM14 4v3" stroke="#ffff60" stroke-width="1" fill="none"/><rect x="0" y="9.5" width="16" height="5.5" fill="#1010d8"/><path d="M1.5 12.5h2M5 12.5h1.5M8 12.5h1.5M11 12.5h1.5M14 12.5h1" stroke="#fff" stroke-width="1.6"/><path d="M6 10.6h8" stroke="#c040c0" stroke-width="0.8" stroke-dasharray="2 1"/></svg>
<span class="t" style="left:1974.00px;top:283.69px;font-size:15.6px;line-height:15.6px;color:#111;transform:scaleX(0.9665);">Test to be carried out</span>
<div class="b" style="left:2203.00px;top:305.00px;width:16.50px;height:846.00px;background:#f3f3f3;"></div>
<div class="b" style="left:2203.50px;top:335.30px;width:15.50px;height:586.00px;background:#cdcdcd;"></div>
<svg class="b" style="left:2205.00px;top:309.00px;" width="12" height="8" viewBox="0 0 12 8"><path d="M1.5 6.5 L6 2 L10.5 6.5" fill="none" stroke="#555" stroke-width="1.8"/></svg>
<svg class="b" style="left:2205.00px;top:1138.00px;" width="12" height="8" viewBox="0 0 12 8"><path d="M1.5 1.5 L6 6 L10.5 1.5" fill="none" stroke="#555" stroke-width="1.8"/></svg>
<span class="t" style="left:2012.60px;top:307.69px;font-size:12.3px;line-height:12.3px;color:#111;transform:scaleX(0.9130);">5% Ib Pf=1 L123</span>
<span class="t" style="left:2012.60px;top:325.70px;font-size:12.3px;line-height:12.3px;color:#111;transform:scaleX(0.9230);">10% Ib Pf=1 *L132*</span>
<span class="t" style="left:2012.60px;top:343.72px;font-size:12.3px;line-height:12.3px;color:#111;transform:scaleX(0.9130);">10% Ib Pf=1 L123</span>
<span class="t" style="left:2012.60px;top:361.73px;font-size:12.3px;line-height:12.3px;color:#111;transform:scaleX(0.9130);">10% Ib Pf=1 L1</span>
<span class="t" style="left:1995.20px;top:379.33px;font-size:13.5px;line-height:13.5px;color:#1010a8;font-weight:bold;-webkit-text-stroke:0.5px #1010a8;">?</span>
<span class="t" style="left:2012.60px;top:379.75px;font-size:12.3px;line-height:12.3px;color:#111;transform:scaleX(0.9130);">10% Ib Pf=1 L2</span>
<div class="b" style="left:2029.30px;top:395.30px;width:16.60px;height:17.40px;background:#3399ff;border:1px dotted #222;"></div>
<span class="t" style="left:2031.80px;top:397.76px;font-size:12.3px;line-height:12.3px;color:#fff;transform:scaleX(0.7872);">T1</span>
<span class="t" style="left:2014.20px;top:397.35px;font-size:13.5px;line-height:13.5px;color:#1010a8;font-weight:bold;-webkit-text-stroke:0.5px #1010a8;">?</span>
<span class="t" style="left:2012.60px;top:415.78px;font-size:12.3px;line-height:12.3px;color:#111;transform:scaleX(0.9130);">10% Ib Pf=1 L3</span>
<span class="t" style="left:2012.60px;top:433.79px;font-size:12.3px;line-height:12.3px;color:#111;transform:scaleX(0.9220);">10% Ib Pf=0.5ind L123</span>
<span class="t" style="left:2012.60px;top:451.81px;font-size:12.3px;line-height:12.3px;color:#111;transform:scaleX(0.9130);">10% Ib Pf=0.8cap L123</span>
<span class="t" style="left:2012.60px;top:469.82px;font-size:12.3px;line-height:12.3px;color:#111;transform:scaleX(0.9130);">100% Ib Pf=1 L123</span>
<span class="t" style="left:2012.60px;top:487.84px;font-size:12.3px;line-height:12.3px;color:#111;transform:scaleX(0.9130);">100% Ib Pf=1 L1</span>
<span class="t" style="left:2012.60px;top:505.85px;font-size:12.3px;line-height:12.3px;color:#111;transform:scaleX(0.9130);">100% Ib Pf=1 L2</span>
<span class="t" style="left:2012.60px;top:523.87px;font-size:12.3px;line-height:12.3px;color:#111;transform:scaleX(0.9130);">100% Ib Pf=1 L3</span>
<span class="t" style="left:2012.60px;top:541.88px;font-size:12.3px;line-height:12.3px;color:#111;transform:scaleX(0.9700);">Difference balanced/single load</span>
<span class="t" style="left:2012.60px;top:559.90px;font-size:12.3px;line-height:12.3px;color:#111;transform:scaleX(0.9220);">100% Ib Pf=0.5ind L123</span>
<span class="t" style="left:2012.60px;top:577.91px;font-size:12.3px;line-height:12.3px;color:#111;transform:scaleX(0.9220);">100% Ib Pf=0.5ind L1</span>
<span class="t" style="left:2012.60px;top:595.93px;font-size:12.3px;line-height:12.3px;color:#111;transform:scaleX(0.9220);">100% Ib Pf=0.5ind L2</span>
<span class="t" style="left:2012.60px;top:613.94px;font-size:12.3px;line-height:12.3px;color:#111;transform:scaleX(0.9220);">100% Ib Pf=0.5ind L3</span>
<span class="t" style="left:2012.60px;top:631.96px;font-size:12.3px;line-height:12.3px;color:#111;transform:scaleX(0.9130);">100% Ib Pf=0.8cap L123</span>
<span class="t" style="left:2012.60px;top:649.97px;font-size:12.3px;line-height:12.3px;color:#111;transform:scaleX(0.9130);">Imax Pf=1 L123</span>
<span class="t" style="left:2012.60px;top:667.99px;font-size:12.3px;line-height:12.3px;color:#111;transform:scaleX(0.9130);">Imax Pf=1 L1</span>
<span class="t" style="left:2012.60px;top:686.00px;font-size:12.3px;line-height:12.3px;color:#111;transform:scaleX(0.9130);">Imax Pf=1 L2</span>
<span class="t" style="left:2012.60px;top:704.02px;font-size:12.3px;line-height:12.3px;color:#111;transform:scaleX(0.9130);">Imax Pf=1 L3</span>
<span class="t" style="left:2012.60px;top:722.03px;font-size:12.3px;line-height:12.3px;color:#111;transform:scaleX(0.9280);">Imax Pf=0.5ind L123</span>
<span class="t" style="left:2012.60px;top:740.05px;font-size:12.3px;line-height:12.3px;color:#111;transform:scaleX(0.9280);">Imax Pf=0.5ind L1</span>
<span class="t" style="left:2012.60px;top:758.06px;font-size:12.3px;line-height:12.3px;color:#111;transform:scaleX(0.9280);">Imax Pf=0.5ind L2</span>
<span class="t" style="left:2012.60px;top:776.08px;font-size:12.3px;line-height:12.3px;color:#111;transform:scaleX(0.9280);">Imax Pf=0.5ind L3</span>
<span class="t" style="left:2012.60px;top:794.09px;font-size:12.3px;line-height:12.3px;color:#111;transform:scaleX(0.9130);">Imax Pf=0.8cap L123</span>
<span class="t" style="left:2012.60px;top:812.11px;font-size:12.3px;line-height:12.3px;color:#111;transform:scaleX(0.9130);">Register test II</span>
<span class="t" style="left:2012.60px;top:830.12px;font-size:12.3px;line-height:12.3px;color:#111;transform:scaleX(0.9130);">EMDI 20% Imax</span>
<span class="t" style="left:2012.60px;top:848.14px;font-size:12.3px;line-height:12.3px;color:#111;transform:scaleX(0.9130);">EMDI 80% Imax</span>
<span class="t" style="left:2012.60px;top:866.15px;font-size:12.3px;line-height:12.3px;color:#111;transform:scaleX(0.9680);">Meter starting</span>
<span class="t" style="left:2012.60px;top:884.17px;font-size:12.3px;line-height:12.3px;color:#111;transform:scaleX(0.9550);">No-load test I 115%</span>
<span class="t" style="left:1993.20px;top:902.18px;font-size:12.3px;line-height:12.3px;color:#111;font-weight:bold;transform:scaleX(0.9608);">RY(total)</span>
<span class="t" style="left:2012.60px;top:920.20px;font-size:12.3px;line-height:12.3px;color:#111;transform:scaleX(0.9130);">5% Ib Pf=1 L123</span>
<span class="t" style="left:2012.60px;top:938.21px;font-size:12.3px;line-height:12.3px;color:#111;transform:scaleX(0.9230);">10% Ib Pf=1 *L132*</span>
<span class="t" style="left:2012.60px;top:956.23px;font-size:12.3px;line-height:12.3px;color:#111;transform:scaleX(0.9130);">10% Ib Pf=1 L123</span>
<span class="t" style="left:2012.60px;top:974.24px;font-size:12.3px;line-height:12.3px;color:#111;transform:scaleX(0.9130);">10% Ib Pf=1 L1</span>
<span class="t" style="left:2012.60px;top:992.26px;font-size:12.3px;line-height:12.3px;color:#111;transform:scaleX(0.9130);">10% Ib Pf=1 L2</span>
<span class="t" style="left:2012.60px;top:1010.27px;font-size:12.3px;line-height:12.3px;color:#111;transform:scaleX(0.9130);">10% Ib Pf=1 L3</span>
<span class="t" style="left:2012.60px;top:1028.29px;font-size:12.3px;line-height:12.3px;color:#111;transform:scaleX(0.9220);">10% Ib Pf=0.5ind L123</span>
<span class="t" style="left:2012.60px;top:1046.30px;font-size:12.3px;line-height:12.3px;color:#111;transform:scaleX(0.9130);">10% Ib Pf=0.8cap L123</span>
<span class="t" style="left:2012.60px;top:1064.32px;font-size:12.3px;line-height:12.3px;color:#111;transform:scaleX(0.9130);">100% Ib Pf=1 L123</span>
<span class="t" style="left:2012.60px;top:1082.33px;font-size:12.3px;line-height:12.3px;color:#111;transform:scaleX(0.9130);">100% Ib Pf=1 L1</span>
<span class="t" style="left:2012.60px;top:1100.35px;font-size:12.3px;line-height:12.3px;color:#111;transform:scaleX(0.9130);">100% Ib Pf=1 L2</span>
<span class="t" style="left:2012.60px;top:1118.36px;font-size:12.3px;line-height:12.3px;color:#111;transform:scaleX(0.9130);">100% Ib Pf=1 L3</span>
<span class="t" style="left:2012.60px;top:1136.38px;font-size:12.3px;line-height:12.3px;color:#111;transform:scaleX(0.9700);">Difference balanced/single load</span>
<svg class="b" style="left:1951.00px;top:304.00px;" width="252" height="847" viewBox="0 0 252 847"><g stroke="#8c8c8c" stroke-width="1" stroke-dasharray="1 1" fill="none" shape-rendering="crispEdges"><path d="M10.5 1V600"/><path d="M29.5 1V587"/><path d="M29.5 614V847"/><path d="M48.5 89V101"/><path d="M48 100.5H59"/><path d="M34 10.5H40"/><path d="M34 28.5H40"/><path d="M34 46.5H40"/><path d="M34 64.5H40"/><path d="M34 82.5H40"/><path d="M34 118.5H40"/><path d="M34 137.5H40"/><path d="M34 155.5H40"/><path d="M34 173.5H40"/><path d="M34 191.5H40"/><path d="M34 209.5H40"/><path d="M34 227.5H40"/><path d="M30 245.5H40"/><path d="M34 263.5H40"/><path d="M34 281.5H40"/><path d="M34 299.5H40"/><path d="M34 317.5H40"/><path d="M34 335.5H40"/><path d="M34 353.5H40"/><path d="M34 371.5H40"/><path d="M34 389.5H40"/><path d="M34 407.5H40"/><path d="M34 425.5H40"/><path d="M34 443.5H40"/><path d="M34 461.5H40"/><path d="M34 479.5H40"/><path d="M34 497.5H40"/><path d="M34 515.5H40"/><path d="M34 533.5H40"/><path d="M34 551.5H40"/><path d="M34 569.5H40"/><path d="M34 587.5H40"/><path d="M16 605.5H21"/><path d="M34 623.5H40"/><path d="M34 641.5H40"/><path d="M34 659.5H40"/><path d="M34 677.5H40"/><path d="M34 695.5H40"/><path d="M34 713.5H40"/><path d="M34 731.5H40"/><path d="M34 749.5H40"/><path d="M34 767.5H40"/><path d="M34 785.5H40"/><path d="M34 803.5H40"/><path d="M34 821.5H40"/><path d="M30 839.5H40"/></g><rect x="25.5" y="6.5" width="8" height="8" fill="#fff" stroke="#8a8a8a" stroke-width="1"/><path d="M27.0 10.5h5M29.5 8.0v5" stroke="#000" stroke-width="1.1"/><rect x="25.5" y="24.5" width="8" height="8" fill="#fff" stroke="#8a8a8a" stroke-width="1"/><path d="M27.0 28.5h5M29.5 26.0v5" stroke="#000" stroke-width="1.1"/><rect x="25.5" y="42.5" width="8" height="8" fill="#fff" stroke="#8a8a8a" stroke-width="1"/><path d="M27.0 46.5h5M29.5 44.0v5" stroke="#000" stroke-width="1.1"/><rect x="25.5" y="60.5" width="8" height="8" fill="#fff" stroke="#8a8a8a" stroke-width="1"/><path d="M27.0 64.5h5M29.5 62.0v5" stroke="#000" stroke-width="1.1"/><rect x="25.5" y="78.5" width="8" height="8" fill="#fff" stroke="#8a8a8a" stroke-width="1"/><path d="M27.0 82.5h5" stroke="#000" stroke-width="1.1"/><rect x="25.5" y="114.5" width="8" height="8" fill="#fff" stroke="#8a8a8a" stroke-width="1"/><path d="M27.0 118.5h5M29.5 116.0v5" stroke="#000" stroke-width="1.1"/><rect x="25.5" y="133.5" width="8" height="8" fill="#fff" stroke="#8a8a8a" stroke-width="1"/><path d="M27.0 137.5h5M29.5 135.0v5" stroke="#000" stroke-width="1.1"/><rect x="25.5" y="151.5" width="8" height="8" fill="#fff" stroke="#8a8a8a" stroke-width="1"/><path d="M27.0 155.5h5M29.5 153.0v5" stroke="#000" stroke-width="1.1"/><rect x="25.5" y="169.5" width="8" height="8" fill="#fff" stroke="#8a8a8a" stroke-width="1"/><path d="M27.0 173.5h5M29.5 171.0v5" stroke="#000" stroke-width="1.1"/><rect x="25.5" y="187.5" width="8" height="8" fill="#fff" stroke="#8a8a8a" stroke-width="1"/><path d="M27.0 191.5h5M29.5 189.0v5" stroke="#000" stroke-width="1.1"/><rect x="25.5" y="205.5" width="8" height="8" fill="#fff" stroke="#8a8a8a" stroke-width="1"/><path d="M27.0 209.5h5M29.5 207.0v5" stroke="#000" stroke-width="1.1"/><rect x="25.5" y="223.5" width="8" height="8" fill="#fff" stroke="#8a8a8a" stroke-width="1"/><path d="M27.0 227.5h5M29.5 225.0v5" stroke="#000" stroke-width="1.1"/><rect x="25.5" y="259.5" width="8" height="8" fill="#fff" stroke="#8a8a8a" stroke-width="1"/><path d="M27.0 263.5h5M29.5 261.0v5" stroke="#000" stroke-width="1.1"/><rect x="25.5" y="277.5" width="8" height="8" fill="#fff" stroke="#8a8a8a" stroke-width="1"/><path d="M27.0 281.5h5M29.5 279.0v5" stroke="#000" stroke-width="1.1"/><rect x="25.5" y="295.5" width="8" height="8" fill="#fff" stroke="#8a8a8a" stroke-width="1"/><path d="M27.0 299.5h5M29.5 297.0v5" stroke="#000" stroke-width="1.1"/><rect x="25.5" y="313.5" width="8" height="8" fill="#fff" stroke="#8a8a8a" stroke-width="1"/><path d="M27.0 317.5h5M29.5 315.0v5" stroke="#000" stroke-width="1.1"/><rect x="25.5" y="331.5" width="8" height="8" fill="#fff" stroke="#8a8a8a" stroke-width="1"/><path d="M27.0 335.5h5M29.5 333.0v5" stroke="#000" stroke-width="1.1"/><rect x="25.5" y="349.5" width="8" height="8" fill="#fff" stroke="#8a8a8a" stroke-width="1"/><path d="M27.0 353.5h5M29.5 351.0v5" stroke="#000" stroke-width="1.1"/><rect x="25.5" y="367.5" width="8" height="8" fill="#fff" stroke="#8a8a8a" stroke-width="1"/><path d="M27.0 371.5h5M29.5 369.0v5" stroke="#000" stroke-width="1.1"/><rect x="25.5" y="385.5" width="8" height="8" fill="#fff" stroke="#8a8a8a" stroke-width="1"/><path d="M27.0 389.5h5M29.5 387.0v5" stroke="#000" stroke-width="1.1"/><rect x="25.5" y="403.5" width="8" height="8" fill="#fff" stroke="#8a8a8a" stroke-width="1"/><path d="M27.0 407.5h5M29.5 405.0v5" stroke="#000" stroke-width="1.1"/><rect x="25.5" y="421.5" width="8" height="8" fill="#fff" stroke="#8a8a8a" stroke-width="1"/><path d="M27.0 425.5h5M29.5 423.0v5" stroke="#000" stroke-width="1.1"/><rect x="25.5" y="439.5" width="8" height="8" fill="#fff" stroke="#8a8a8a" stroke-width="1"/><path d="M27.0 443.5h5M29.5 441.0v5" stroke="#000" stroke-width="1.1"/><rect x="25.5" y="457.5" width="8" height="8" fill="#fff" stroke="#8a8a8a" stroke-width="1"/><path d="M27.0 461.5h5M29.5 459.0v5" stroke="#000" stroke-width="1.1"/><rect x="25.5" y="475.5" width="8" height="8" fill="#fff" stroke="#8a8a8a" stroke-width="1"/><path d="M27.0 479.5h5M29.5 477.0v5" stroke="#000" stroke-width="1.1"/><rect x="25.5" y="493.5" width="8" height="8" fill="#fff" stroke="#8a8a8a" stroke-width="1"/><path d="M27.0 497.5h5M29.5 495.0v5" stroke="#000" stroke-width="1.1"/><rect x="25.5" y="511.5" width="8" height="8" fill="#fff" stroke="#8a8a8a" stroke-width="1"/><path d="M27.0 515.5h5M29.5 513.0v5" stroke="#000" stroke-width="1.1"/><rect x="25.5" y="529.5" width="8" height="8" fill="#fff" stroke="#8a8a8a" stroke-width="1"/><path d="M27.0 533.5h5M29.5 531.0v5" stroke="#000" stroke-width="1.1"/><rect x="25.5" y="547.5" width="8" height="8" fill="#fff" stroke="#8a8a8a" stroke-width="1"/><path d="M27.0 551.5h5M29.5 549.0v5" stroke="#000" stroke-width="1.1"/><rect x="25.5" y="565.5" width="8" height="8" fill="#fff" stroke="#8a8a8a" stroke-width="1"/><path d="M27.0 569.5h5M29.5 567.0v5" stroke="#000" stroke-width="1.1"/><rect x="25.5" y="583.5" width="8" height="8" fill="#fff" stroke="#8a8a8a" stroke-width="1"/><path d="M27.0 587.5h5M29.5 585.0v5" stroke="#000" stroke-width="1.1"/><rect x="6.5" y="601.5" width="8" height="8" fill="#fff" stroke="#8a8a8a" stroke-width="1"/><path d="M8.0 605.5h5" stroke="#000" stroke-width="1.1"/><rect x="25.5" y="619.5" width="8" height="8" fill="#fff" stroke="#8a8a8a" stroke-width="1"/><path d="M27.0 623.5h5M29.5 621.0v5" stroke="#000" stroke-width="1.1"/><rect x="25.5" y="637.5" width="8" height="8" fill="#fff" stroke="#8a8a8a" stroke-width="1"/><path d="M27.0 641.5h5M29.5 639.0v5" stroke="#000" stroke-width="1.1"/><rect x="25.5" y="655.5" width="8" height="8" fill="#fff" stroke="#8a8a8a" stroke-width="1"/><path d="M27.0 659.5h5M29.5 657.0v5" stroke="#000" stroke-width="1.1"/><rect x="25.5" y="673.5" width="8" height="8" fill="#fff" stroke="#8a8a8a" stroke-width="1"/><path d="M27.0 677.5h5M29.5 675.0v5" stroke="#000" stroke-width="1.1"/><rect x="25.5" y="691.5" width="8" height="8" fill="#fff" stroke="#8a8a8a" stroke-width="1"/><path d="M27.0 695.5h5M29.5 693.0v5" stroke="#000" stroke-width="1.1"/><rect x="25.5" y="709.5" width="8" height="8" fill="#fff" stroke="#8a8a8a" stroke-width="1"/><path d="M27.0 713.5h5M29.5 711.0v5" stroke="#000" stroke-width="1.1"/><rect x="25.5" y="727.5" width="8" height="8" fill="#fff" stroke="#8a8a8a" stroke-width="1"/><path d="M27.0 731.5h5M29.5 729.0v5" stroke="#000" stroke-width="1.1"/><rect x="25.5" y="745.5" width="8" height="8" fill="#fff" stroke="#8a8a8a" stroke-width="1"/><path d="M27.0 749.5h5M29.5 747.0v5" stroke="#000" stroke-width="1.1"/><rect x="25.5" y="763.5" width="8" height="8" fill="#fff" stroke="#8a8a8a" stroke-width="1"/><path d="M27.0 767.5h5M29.5 765.0v5" stroke="#000" stroke-width="1.1"/><rect x="25.5" y="781.5" width="8" height="8" fill="#fff" stroke="#8a8a8a" stroke-width="1"/><path d="M27.0 785.5h5M29.5 783.0v5" stroke="#000" stroke-width="1.1"/><rect x="25.5" y="799.5" width="8" height="8" fill="#fff" stroke="#8a8a8a" stroke-width="1"/><path d="M27.0 803.5h5M29.5 801.0v5" stroke="#000" stroke-width="1.1"/><rect x="25.5" y="817.5" width="8" height="8" fill="#fff" stroke="#8a8a8a" stroke-width="1"/><path d="M27.0 821.5h5M29.5 819.0v5" stroke="#000" stroke-width="1.1"/><path d="M48.2 2.3v13.2M41.6 8.9h13.2" stroke="#2fd02f" stroke-width="4.4"/><path d="M47.2 2.3v13.2M41.6 7.9h13.2" stroke="#5fe85f" stroke-width="1.2"/><path d="M48.2 20.3v13.2M41.6 26.9h13.2" stroke="#2fd02f" stroke-width="4.4"/><path d="M47.2 20.3v13.2M41.6 25.9h13.2" stroke="#5fe85f" stroke-width="1.2"/><path d="M48.2 38.3v13.2M41.6 44.9h13.2" stroke="#2fd02f" stroke-width="4.4"/><path d="M47.2 38.3v13.2M41.6 43.9h13.2" stroke="#5fe85f" stroke-width="1.2"/><path d="M48.2 56.3v13.2M41.6 62.9h13.2" stroke="#2fd02f" stroke-width="4.4"/><path d="M47.2 56.3v13.2M41.6 61.9h13.2" stroke="#5fe85f" stroke-width="1.2"/><path d="M48.2 110.3v13.2M41.6 116.9h13.2" stroke="#2fd02f" stroke-width="4.4"/><path d="M47.2 110.3v13.2M41.6 115.9h13.2" stroke="#5fe85f" stroke-width="1.2"/><path d="M48.2 129.3v13.2M41.6 135.9h13.2" stroke="#2fd02f" stroke-width="4.4"/><path d="M47.2 129.3v13.2M41.6 134.9h13.2" stroke="#5fe85f" stroke-width="1.2"/><path d="M48.2 147.3v13.2M41.6 153.9h13.2" stroke="#2fd02f" stroke-width="4.4"/><path d="M47.2 147.3v13.2M41.6 152.9h13.2" stroke="#5fe85f" stroke-width="1.2"/><path d="M48.2 165.3v13.2M41.6 171.9h13.2" stroke="#2fd02f" stroke-width="4.4"/><path d="M47.2 165.3v13.2M41.6 170.9h13.2" stroke="#5fe85f" stroke-width="1.2"/><path d="M48.2 183.3v13.2M41.6 189.9h13.2" stroke="#2fd02f" stroke-width="4.4"/><path d="M47.2 183.3v13.2M41.6 188.9h13.2" stroke="#5fe85f" stroke-width="1.2"/><path d="M48.2 201.3v13.2M41.6 207.9h13.2" stroke="#2fd02f" stroke-width="4.4"/><path d="M47.2 201.3v13.2M41.6 206.9h13.2" stroke="#5fe85f" stroke-width="1.2"/><path d="M48.2 219.3v13.2M41.6 225.9h13.2" stroke="#2fd02f" stroke-width="4.4"/><path d="M47.2 219.3v13.2M41.6 224.9h13.2" stroke="#5fe85f" stroke-width="1.2"/><path d="M48.2 237.3v13.2M41.6 243.9h13.2" stroke="#2fd02f" stroke-width="4.4"/><path d="M47.2 237.3v13.2M41.6 242.9h13.2" stroke="#5fe85f" stroke-width="1.2"/><path d="M48.2 255.3v13.2M41.6 261.9h13.2" stroke="#2fd02f" stroke-width="4.4"/><path d="M47.2 255.3v13.2M41.6 260.9h13.2" stroke="#5fe85f" stroke-width="1.2"/><path d="M48.2 273.3v13.2M41.6 279.9h13.2" stroke="#2fd02f" stroke-width="4.4"/><path d="M47.2 273.3v13.2M41.6 278.9h13.2" stroke="#5fe85f" stroke-width="1.2"/><path d="M48.2 291.3v13.2M41.6 297.9h13.2" stroke="#2fd02f" stroke-width="4.4"/><path d="M47.2 291.3v13.2M41.6 296.9h13.2" stroke="#5fe85f" stroke-width="1.2"/><path d="M48.2 309.3v13.2M41.6 315.9h13.2" stroke="#2fd02f" stroke-width="4.4"/><path d="M47.2 309.3v13.2M41.6 314.9h13.2" stroke="#5fe85f" stroke-width="1.2"/><path d="M48.2 327.3v13.2M41.6 333.9h13.2" stroke="#2fd02f" stroke-width="4.4"/><path d="M47.2 327.3v13.2M41.6 332.9h13.2" stroke="#5fe85f" stroke-width="1.2"/><path d="M48.2 345.3v13.2M41.6 351.9h13.2" stroke="#2fd02f" stroke-width="4.4"/><path d="M47.2 345.3v13.2M41.6 350.9h13.2" stroke="#5fe85f" stroke-width="1.2"/><path d="M48.2 363.3v13.2M41.6 369.9h13.2" stroke="#2fd02f" stroke-width="4.4"/><path d="M47.2 363.3v13.2M41.6 368.9h13.2" stroke="#5fe85f" stroke-width="1.2"/><path d="M48.2 381.3v13.2M41.6 387.9h13.2" stroke="#2fd02f" stroke-width="4.4"/><path d="M47.2 381.3v13.2M41.6 386.9h13.2" stroke="#5fe85f" stroke-width="1.2"/><path d="M48.2 399.3v13.2M41.6 405.9h13.2" stroke="#2fd02f" stroke-width="4.4"/><path d="M47.2 399.3v13.2M41.6 404.9h13.2" stroke="#5fe85f" stroke-width="1.2"/><path d="M48.2 417.3v13.2M41.6 423.9h13.2" stroke="#2fd02f" stroke-width="4.4"/><path d="M47.2 417.3v13.2M41.6 422.9h13.2" stroke="#5fe85f" stroke-width="1.2"/><path d="M48.2 435.3v13.2M41.6 441.9h13.2" stroke="#2fd02f" stroke-width="4.4"/><path d="M47.2 435.3v13.2M41.6 440.9h13.2" stroke="#5fe85f" stroke-width="1.2"/><path d="M48.2 453.3v13.2M41.6 459.9h13.2" stroke="#2fd02f" stroke-width="4.4"/><path d="M47.2 453.3v13.2M41.6 458.9h13.2" stroke="#5fe85f" stroke-width="1.2"/><path d="M48.2 471.3v13.2M41.6 477.9h13.2" stroke="#2fd02f" stroke-width="4.4"/><path d="M47.2 471.3v13.2M41.6 476.9h13.2" stroke="#5fe85f" stroke-width="1.2"/><path d="M48.2 489.3v13.2M41.6 495.9h13.2" stroke="#2fd02f" stroke-width="4.4"/><path d="M47.2 489.3v13.2M41.6 494.9h13.2" stroke="#5fe85f" stroke-width="1.2"/><rect x="42.3" y="512.5" width="12.2" height="4.2" rx="1" fill="#c42f2f"/><rect x="43.3" y="512.5" width="10" height="1.2" fill="#e06060"/><rect x="42.3" y="530.5" width="12.2" height="4.2" rx="1" fill="#c42f2f"/><rect x="43.3" y="530.5" width="10" height="1.2" fill="#e06060"/><rect x="42.3" y="548.5" width="12.2" height="4.2" rx="1" fill="#c42f2f"/><rect x="43.3" y="548.5" width="10" height="1.2" fill="#e06060"/><rect x="42.3" y="566.5" width="12.2" height="4.2" rx="1" fill="#c42f2f"/><rect x="43.3" y="566.5" width="10" height="1.2" fill="#e06060"/><rect x="42.3" y="584.5" width="12.2" height="4.2" rx="1" fill="#c42f2f"/><rect x="43.3" y="584.5" width="10" height="1.2" fill="#e06060"/><rect x="23.0" y="602.8" width="12.2" height="4.2" rx="1" fill="#c42f2f"/><rect x="24.0" y="602.8" width="10" height="1.2" fill="#e06060"/><rect x="42.3" y="620.5" width="12.2" height="4.2" rx="1" fill="#c42f2f"/><rect x="43.3" y="620.5" width="10" height="1.2" fill="#e06060"/><rect x="42.3" y="638.5" width="12.2" height="4.2" rx="1" fill="#c42f2f"/><rect x="43.3" y="638.5" width="10" height="1.2" fill="#e06060"/><rect x="42.3" y="656.5" width="12.2" height="4.2" rx="1" fill="#c42f2f"/><rect x="43.3" y="656.5" width="10" height="1.2" fill="#e06060"/><rect x="42.3" y="674.5" width="12.2" height="4.2" rx="1" fill="#c42f2f"/><rect x="43.3" y="674.5" width="10" height="1.2" fill="#e06060"/><rect x="42.3" y="692.5" width="12.2" height="4.2" rx="1" fill="#c42f2f"/><rect x="43.3" y="692.5" width="10" height="1.2" fill="#e06060"/><rect x="42.3" y="710.5" width="12.2" height="4.2" rx="1" fill="#c42f2f"/><rect x="43.3" y="710.5" width="10" height="1.2" fill="#e06060"/><rect x="42.3" y="728.5" width="12.2" height="4.2" rx="1" fill="#c42f2f"/><rect x="43.3" y="728.5" width="10" height="1.2" fill="#e06060"/><rect x="42.3" y="746.5" width="12.2" height="4.2" rx="1" fill="#c42f2f"/><rect x="43.3" y="746.5" width="10" height="1.2" fill="#e06060"/><rect x="42.3" y="764.5" width="12.2" height="4.2" rx="1" fill="#c42f2f"/><rect x="43.3" y="764.5" width="10" height="1.2" fill="#e06060"/><rect x="42.3" y="782.5" width="12.2" height="4.2" rx="1" fill="#c42f2f"/><rect x="43.3" y="782.5" width="10" height="1.2" fill="#e06060"/><rect x="42.3" y="800.5" width="12.2" height="4.2" rx="1" fill="#c42f2f"/><rect x="43.3" y="800.5" width="10" height="1.2" fill="#e06060"/><rect x="42.3" y="818.5" width="12.2" height="4.2" rx="1" fill="#c42f2f"/><rect x="43.3" y="818.5" width="10" height="1.2" fill="#e06060"/><rect x="42.3" y="836.5" width="12.2" height="4.2" rx="1" fill="#c42f2f"/><rect x="43.3" y="836.5" width="10" height="1.2" fill="#e06060"/></svg>
</div></body></html>
